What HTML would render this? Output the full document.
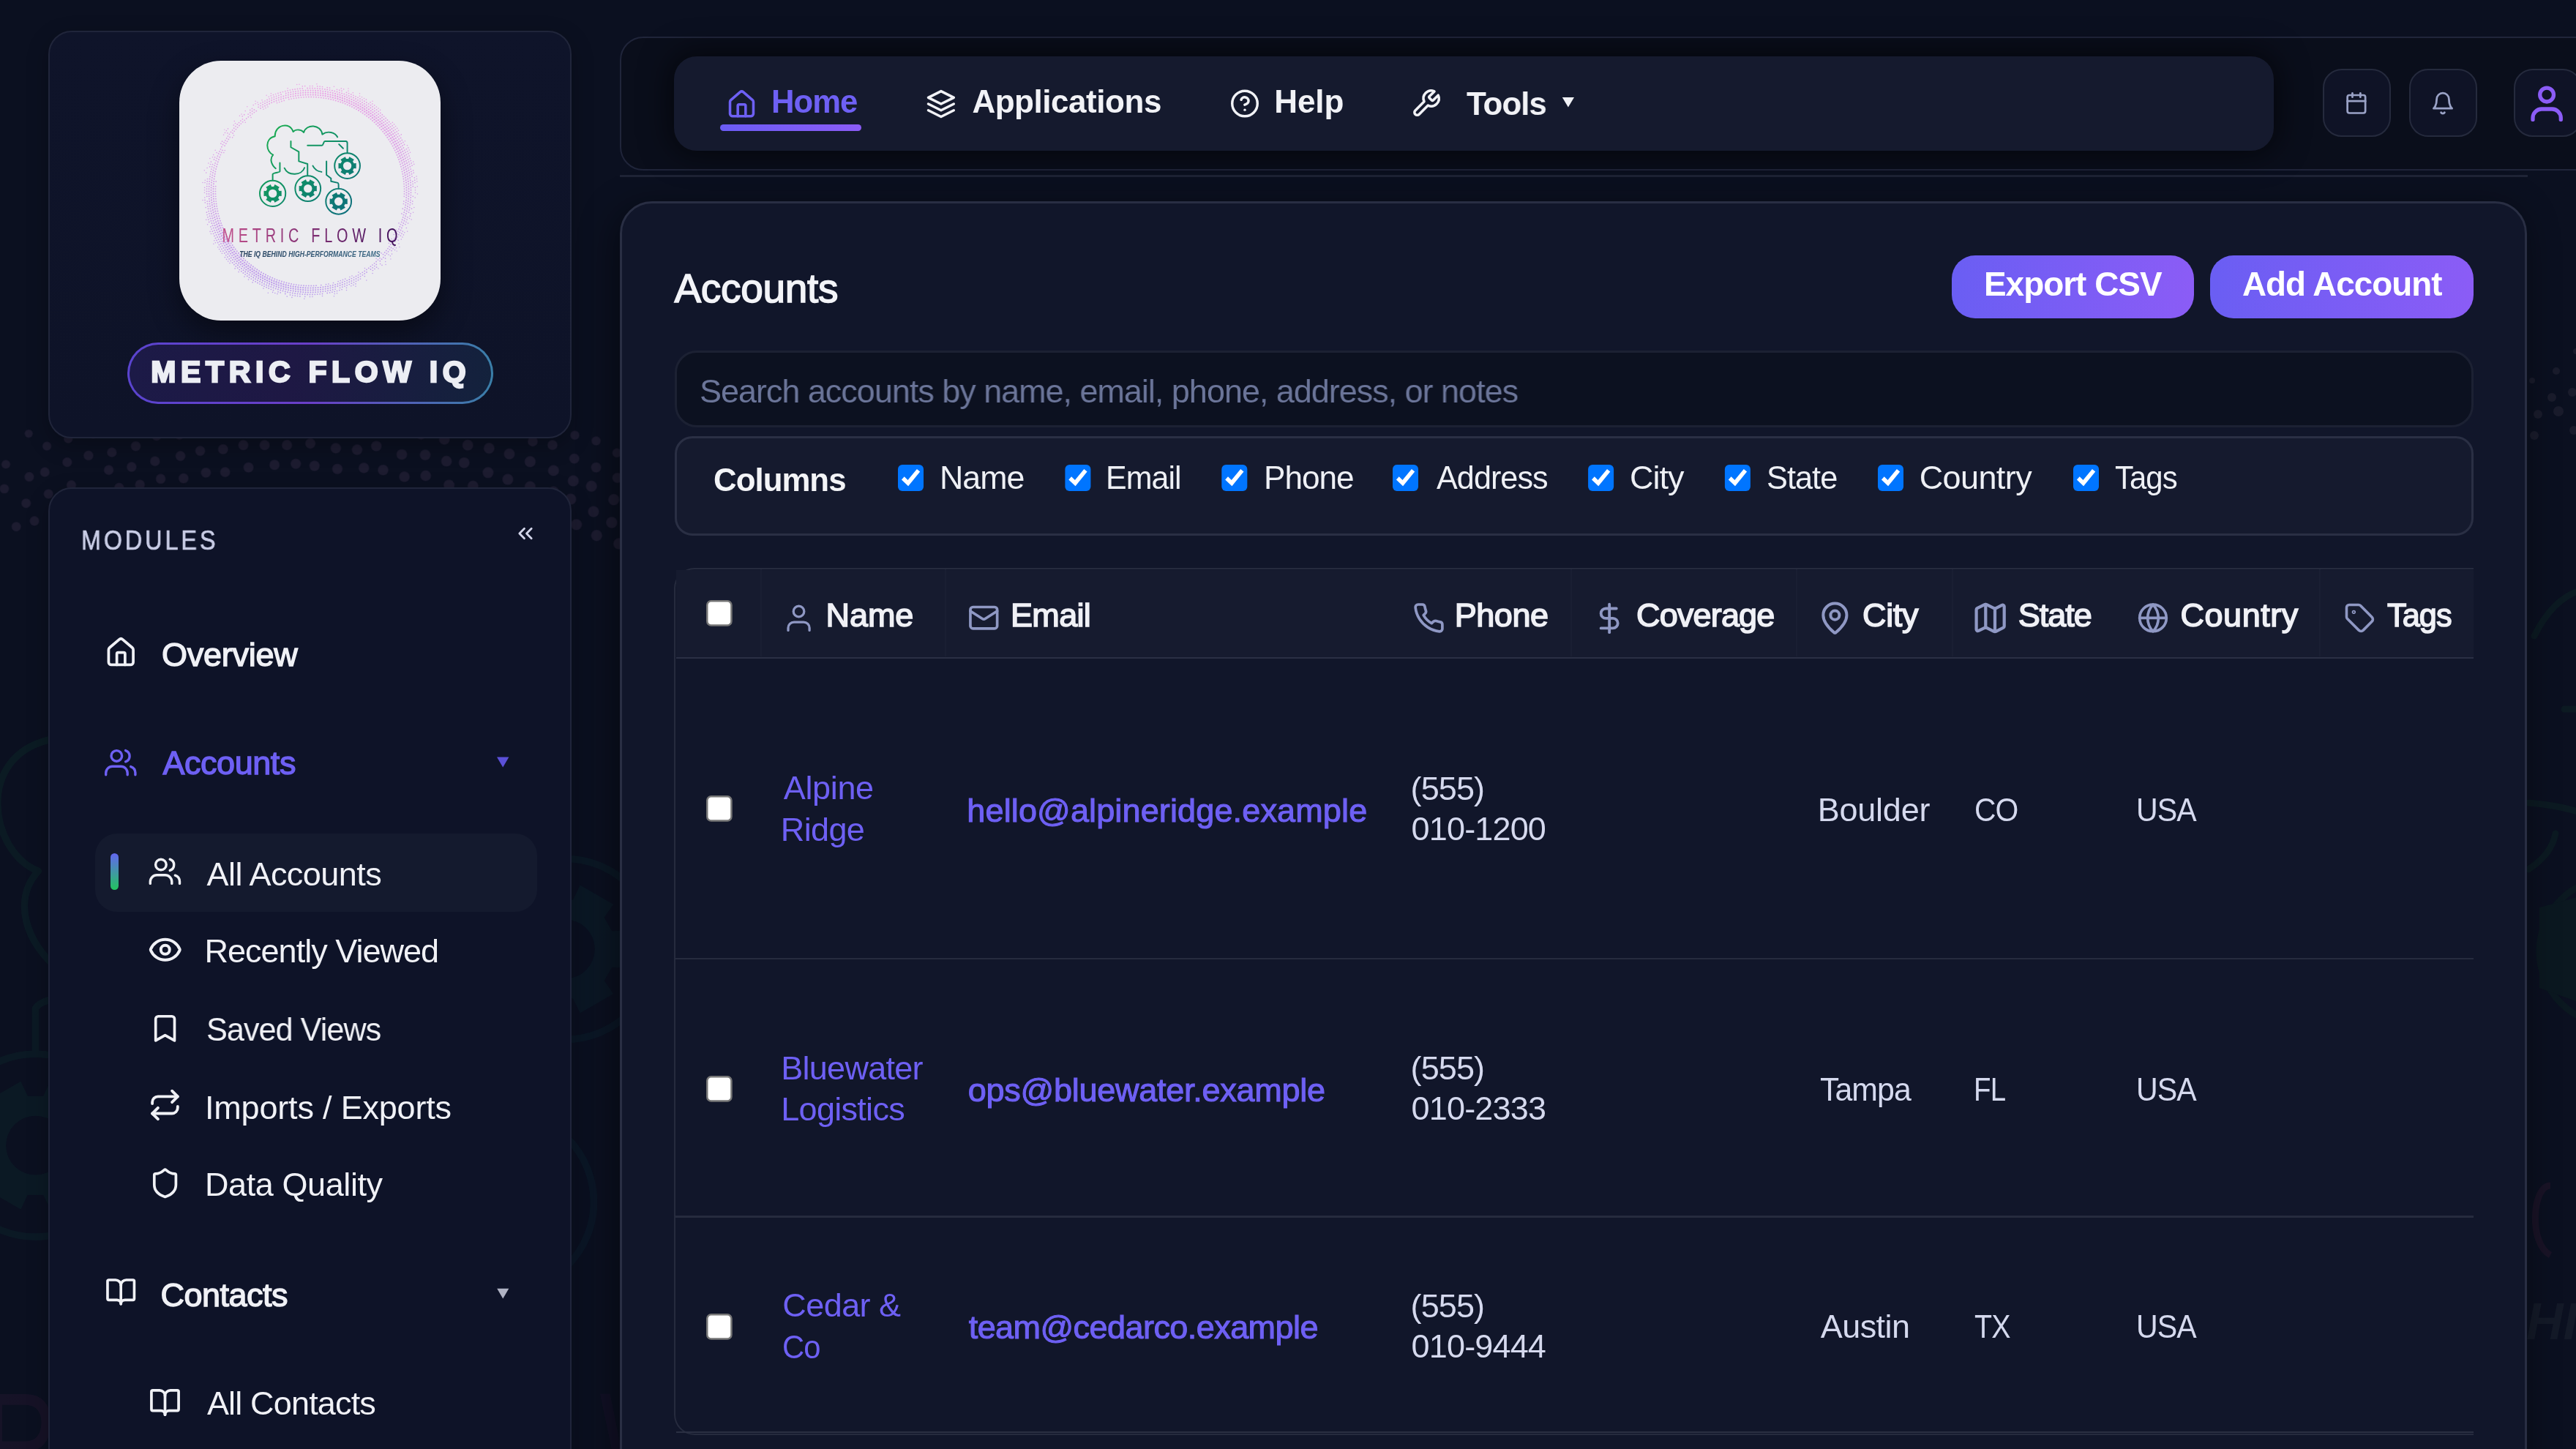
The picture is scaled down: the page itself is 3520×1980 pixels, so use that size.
<!DOCTYPE html>
<html><head><meta charset="utf-8"><title>Accounts</title><style>
*{margin:0;padding:0;box-sizing:border-box}
html,body{width:3520px;height:1980px;overflow:hidden;background:#0b1020;font-family:"Liberation Sans", sans-serif}
.abs{position:absolute}
.box{position:absolute}
.tx{position:absolute;white-space:pre;font-family:"Liberation Sans", sans-serif}
svg{overflow:visible}
</style></head>
<body>

<div class="box" style="left:0;top:0;width:3520px;height:1980px;background:#0b1020"></div>
<svg class="abs" style="left:0;top:0" width="3520" height="1980" viewBox="0 0 3520 1980">
<g transform="translate(-2597,-312) scale(7.1)" opacity="0.075"><g></g>
<g transform="translate(340,150) scale(0.10352)" fill="none" stroke="url(#lg_green)" stroke-width="13" stroke-linecap="round" stroke-linejoin="round">
<path d="M355,775 C300,730 270,650 320,595 C230,560 200,380 345,350 C340,200 540,150 585,290 C620,250 700,260 725,300 C760,180 950,190 970,325 C1040,270 1140,300 1170,360"/>
<path d="M555,415 V495 L660,555 V680 L775,715 V870"/>
<path d="M775,470 H965 C985,470 985,415 1005,415 H1280 C1295,415 1300,425 1300,440 V565"/>
<path d="M1190,455 L1245,510"/>
<path d="M410,700 V815 C410,830 330,825 315,850 V930"/>
<path d="M470,770 C520,880 700,870 735,765"/>
<path d="M845,740 C870,790 920,815 960,820"/>
<path d="M1025,680 V860 L1085,905 V945 L1175,965 C1185,968 1185,985 1185,1040"/>
<circle cx="315" cy="1105" r="170"/><circle cx="780" cy="1040" r="168"/><circle cx="1185" cy="1210" r="168"/><circle cx="1300" cy="740" r="168"/>
</g>
<g transform="translate(340,150) scale(0.10352)" fill="url(#lg_green)" stroke="none"><path d='M431.67,1069.33 L431.67,1140.67 L401.82,1138.33 L387.27,1163.53 L404.23,1188.20 L342.44,1223.87 L329.55,1196.86 L300.45,1196.86 L287.56,1223.87 L225.77,1188.20 L242.73,1163.53 L228.18,1138.33 L198.33,1140.67 L198.33,1069.33 L228.18,1071.67 L242.73,1046.47 L225.77,1021.80 L287.56,986.13 L300.45,1013.14 L329.55,1013.14 L342.44,986.13 L404.23,1021.80 L387.27,1046.47 L401.82,1071.67Z M370.00,1105.00 A55,55 0 1 0 260.00,1105.00 A55,55 0 1 0 370.00,1105.00Z' fill-rule='evenodd'/><path d='M896.67,1004.33 L896.67,1075.67 L866.82,1073.33 L852.27,1098.53 L869.23,1123.20 L807.44,1158.87 L794.55,1131.86 L765.45,1131.86 L752.56,1158.87 L690.77,1123.20 L707.73,1098.53 L693.18,1073.33 L663.33,1075.67 L663.33,1004.33 L693.18,1006.67 L707.73,981.47 L690.77,956.80 L752.56,921.13 L765.45,948.14 L794.55,948.14 L807.44,921.13 L869.23,956.80 L852.27,981.47 L866.82,1006.67Z M835.00,1040.00 A55,55 0 1 0 725.00,1040.00 A55,55 0 1 0 835.00,1040.00Z' fill-rule='evenodd'/><path d='M1301.67,1174.33 L1301.67,1245.67 L1271.82,1243.33 L1257.27,1268.53 L1274.23,1293.20 L1212.44,1328.87 L1199.55,1301.86 L1170.45,1301.86 L1157.56,1328.87 L1095.77,1293.20 L1112.73,1268.53 L1098.18,1243.33 L1068.33,1245.67 L1068.33,1174.33 L1098.18,1176.67 L1112.73,1151.47 L1095.77,1126.80 L1157.56,1091.13 L1170.45,1118.14 L1199.55,1118.14 L1212.44,1091.13 L1274.23,1126.80 L1257.27,1151.47 L1271.82,1176.67Z M1240.00,1210.00 A55,55 0 1 0 1130.00,1210.00 A55,55 0 1 0 1240.00,1210.00Z' fill-rule='evenodd'/><path d='M1416.67,704.33 L1416.67,775.67 L1386.82,773.33 L1372.27,798.53 L1389.23,823.20 L1327.44,858.87 L1314.55,831.86 L1285.45,831.86 L1272.56,858.87 L1210.77,823.20 L1227.73,798.53 L1213.18,773.33 L1183.33,775.67 L1183.33,704.33 L1213.18,706.67 L1227.73,681.47 L1210.77,656.80 L1272.56,621.13 L1285.45,648.14 L1314.55,648.14 L1327.44,621.13 L1389.23,656.80 L1372.27,681.47 L1386.82,706.67Z M1355.00,740.00 A55,55 0 1 0 1245.00,740.00 A55,55 0 1 0 1355.00,740.00Z' fill-rule='evenodd'/></g>
<g transform="translate(303.6,331.2) scale(0.72,1)"><text x="0" y="0" font-family="Liberation Sans" font-size="27.6" textLength="333.3" lengthAdjust="spacing" fill="url(#lg_title2)" style="font-weight:400">METRIC FLOW IQ</text></g>
<text x="327.2" y="351.4" font-family="Liberation Sans" font-size="10.6" font-style="italic" font-weight="700" textLength="192.4" lengthAdjust="spacingAndGlyphs" fill="url(#lg_tag)">THE IQ BEHIND HIGH-PERFORMANCE TEAMS</text></g>
<g transform="translate(-2597,-312) scale(7.1)" fill="#1d1c30"><circle cx='552.0' cy='261.5' r='0.98'/><circle cx='551.0' cy='265.8' r='0.97'/><circle cx='550.7' cy='270.2' r='0.97'/><circle cx='551.1' cy='273.9' r='0.96'/><circle cx='550.5' cy='279.2' r='0.95'/><circle cx='547.5' cy='291.0' r='0.93'/><circle cx='546.9' cy='295.5' r='0.93'/><circle cx='545.6' cy='299.5' r='0.92'/><circle cx='544.6' cy='304.3' r='0.91'/><circle cx='542.7' cy='307.4' r='0.91'/><circle cx='541.5' cy='311.9' r='0.90'/><circle cx='538.7' cy='315.9' r='0.90'/><circle cx='537.9' cy='319.8' r='0.90'/><circle cx='536.1' cy='322.8' r='0.89'/><circle cx='534.1' cy='326.8' r='0.89'/><circle cx='523.3' cy='341.4' r='0.88'/><circle cx='520.8' cy='344.2' r='0.88'/><circle cx='514.6' cy='351.5' r='0.88'/><circle cx='512.6' cy='353.8' r='0.88'/><circle cx='509.0' cy='356.3' r='0.88'/><circle cx='505.3' cy='359.4' r='0.88'/><circle cx='502.5' cy='362.2' r='0.89'/><circle cx='499.3' cy='364.8' r='0.89'/><circle cx='495.1' cy='367.1' r='0.89'/><circle cx='491.3' cy='369.7' r='0.90'/><circle cx='487.7' cy='372.6' r='0.90'/><circle cx='484.0' cy='373.9' r='0.90'/><circle cx='480.8' cy='376.1' r='0.91'/><circle cx='476.9' cy='377.6' r='0.91'/><circle cx='472.8' cy='379.2' r='0.92'/><circle cx='468.7' cy='381.0' r='0.92'/><circle cx='464.1' cy='382.6' r='0.93'/><circle cx='456.8' cy='384.7' r='0.94'/><circle cx='452.5' cy='386.4' r='0.95'/><circle cx='447.8' cy='386.6' r='0.96'/><circle cx='444.4' cy='388.3' r='0.96'/><circle cx='440.1' cy='388.7' r='0.97'/><circle cx='435.4' cy='389.0' r='0.98'/><circle cx='430.8' cy='389.5' r='0.99'/><circle cx='426.4' cy='389.7' r='0.99'/><circle cx='422.0' cy='389.8' r='1.00'/><circle cx='417.7' cy='389.2' r='1.01'/><circle cx='413.8' cy='389.3' r='1.02'/><circle cx='409.0' cy='388.5' r='1.02'/><circle cx='405.1' cy='388.6' r='1.03'/><circle cx='401.6' cy='387.7' r='1.04'/><circle cx='396.8' cy='386.7' r='1.04'/><circle cx='392.6' cy='385.1' r='1.05'/><circle cx='388.8' cy='384.3' r='1.06'/><circle cx='384.0' cy='383.7' r='1.06'/><circle cx='380.6' cy='382.0' r='1.07'/><circle cx='375.8' cy='380.2' r='1.07'/><circle cx='372.4' cy='378.8' r='1.08'/><circle cx='368.0' cy='377.4' r='1.08'/><circle cx='364.8' cy='375.0' r='1.08'/><circle cx='360.9' cy='373.2' r='1.09'/><circle cx='356.9' cy='370.9' r='1.09'/><circle cx='353.5' cy='368.4' r='1.09'/><circle cx='349.8' cy='366.3' r='1.10'/><circle cx='346.8' cy='363.5' r='1.10'/><circle cx='343.0' cy='360.4' r='1.10'/><circle cx='339.5' cy='358.3' r='1.10'/><circle cx='336.1' cy='354.9' r='1.10'/><circle cx='333.8' cy='352.4' r='1.10'/><circle cx='330.4' cy='349.0' r='1.10'/><circle cx='327.2' cy='346.2' r='1.10'/><circle cx='324.4' cy='342.6' r='1.10'/><circle cx='322.1' cy='339.1' r='1.09'/><circle cx='319.5' cy='336.0' r='1.09'/><circle cx='316.3' cy='332.2' r='1.09'/><circle cx='314.4' cy='329.0' r='1.08'/><circle cx='312.7' cy='325.3' r='1.08'/><circle cx='310.1' cy='321.2' r='1.07'/><circle cx='308.1' cy='317.7' r='1.07'/><circle cx='306.7' cy='314.2' r='1.07'/><circle cx='304.6' cy='309.6' r='1.06'/><circle cx='303.5' cy='305.6' r='1.05'/><circle cx='302.1' cy='302.1' r='1.05'/><circle cx='300.1' cy='297.2' r='1.04'/><circle cx='299.8' cy='293.0' r='1.03'/><circle cx='298.4' cy='289.4' r='1.03'/><circle cx='297.8' cy='284.6' r='1.02'/><circle cx='297.3' cy='280.5' r='1.01'/><circle cx='296.2' cy='276.0' r='1.01'/><circle cx='295.8' cy='272.2' r='1.00'/><circle cx='295.8' cy='267.5' r='0.99'/><circle cx='295.3' cy='263.6' r='0.98'/><circle cx='295.0' cy='259.3' r='0.98'/><circle cx='296.1' cy='255.3' r='0.97'/><circle cx='296.0' cy='250.5' r='0.96'/><circle cx='295.8' cy='246.8' r='0.96'/><circle cx='297.4' cy='238.3' r='0.94'/><circle cx='299.0' cy='233.9' r='0.94'/><circle cx='299.7' cy='230.0' r='0.93'/><circle cx='300.8' cy='225.4' r='0.92'/><circle cx='303.1' cy='217.5' r='0.91'/><circle cx='304.7' cy='213.1' r='0.91'/><circle cx='306.3' cy='209.2' r='0.90'/><circle cx='308.7' cy='205.3' r='0.90'/><circle cx='312.6' cy='198.3' r='0.89'/><circle cx='314.6' cy='194.1' r='0.89'/><circle cx='317.4' cy='190.8' r='0.89'/><circle cx='319.1' cy='187.1' r='0.88'/><circle cx='322.0' cy='183.4' r='0.88'/><circle cx='330.3' cy='173.9' r='0.88'/><circle cx='336.4' cy='167.8' r='0.88'/><circle cx='339.4' cy='164.8' r='0.88'/><circle cx='342.8' cy='162.2' r='0.88'/><circle cx='350.2' cy='156.7' r='0.89'/><circle cx='353.8' cy='154.6' r='0.89'/><circle cx='361.0' cy='149.4' r='0.90'/><circle cx='364.6' cy='147.8' r='0.91'/><circle cx='368.9' cy='145.3' r='0.91'/><circle cx='372.4' cy='144.2' r='0.92'/><circle cx='376.6' cy='142.1' r='0.92'/><circle cx='380.4' cy='141.4' r='0.93'/><circle cx='384.4' cy='139.8' r='0.93'/><circle cx='388.7' cy='137.8' r='0.94'/><circle cx='392.7' cy='137.2' r='0.95'/><circle cx='396.7' cy='136.1' r='0.95'/><circle cx='401.1' cy='136.0' r='0.96'/><circle cx='405.4' cy='134.9' r='0.97'/><circle cx='409.1' cy='134.8' r='0.97'/><circle cx='413.6' cy='133.9' r='0.98'/><circle cx='418.6' cy='133.4' r='0.99'/><circle cx='422.7' cy='133.2' r='1.00'/><circle cx='426.3' cy='133.6' r='1.00'/><circle cx='430.7' cy='134.2' r='1.01'/><circle cx='435.8' cy='134.0' r='1.02'/><circle cx='439.5' cy='134.4' r='1.03'/><circle cx='443.6' cy='135.7' r='1.03'/><circle cx='447.7' cy='135.5' r='1.04'/><circle cx='452.2' cy='137.3' r='1.05'/><circle cx='456.8' cy='137.5' r='1.05'/><circle cx='460.7' cy='139.3' r='1.06'/><circle cx='464.8' cy='140.4' r='1.06'/><circle cx='469.2' cy='142.4' r='1.07'/><circle cx='472.7' cy='143.9' r='1.07'/><circle cx='476.7' cy='144.9' r='1.08'/><circle cx='480.6' cy='147.0' r='1.08'/><circle cx='484.9' cy='148.6' r='1.09'/><circle cx='488.1' cy='150.7' r='1.09'/><circle cx='492.0' cy='153.6' r='1.09'/><circle cx='495.6' cy='155.6' r='1.10'/><circle cx='498.9' cy='157.8' r='1.10'/><circle cx='502.3' cy='161.3' r='1.10'/><circle cx='505.6' cy='163.6' r='1.10'/><circle cx='508.6' cy='166.1' r='1.10'/><circle cx='512.0' cy='169.2' r='1.10'/><circle cx='515.1' cy='171.6' r='1.10'/><circle cx='518.1' cy='174.8' r='1.10'/><circle cx='521.0' cy='178.9' r='1.10'/><circle cx='524.0' cy='181.7' r='1.09'/><circle cx='526.4' cy='184.8' r='1.09'/><circle cx='528.4' cy='188.4' r='1.09'/><circle cx='531.0' cy='191.9' r='1.09'/><circle cx='533.8' cy='196.4' r='1.08'/><circle cx='535.0' cy='199.5' r='1.08'/><circle cx='537.5' cy='203.9' r='1.07'/><circle cx='539.3' cy='207.4' r='1.07'/><circle cx='541.8' cy='211.3' r='1.06'/><circle cx='543.3' cy='215.7' r='1.06'/><circle cx='544.8' cy='219.0' r='1.05'/><circle cx='545.5' cy='223.2' r='1.04'/><circle cx='546.5' cy='227.4' r='1.04'/><circle cx='548.4' cy='231.9' r='1.03'/><circle cx='549.3' cy='235.6' r='1.02'/><circle cx='549.7' cy='239.6' r='1.02'/><circle cx='550.8' cy='244.9' r='1.01'/><circle cx='550.4' cy='248.7' r='1.00'/><circle cx='550.7' cy='253.1' r='0.99'/><circle cx='551.6' cy='256.8' r='0.99'/><circle cx='555.5' cy='263.4' r='0.98'/><circle cx='555.9' cy='267.9' r='0.97'/><circle cx='555.3' cy='272.3' r='0.96'/><circle cx='555.0' cy='277.0' r='0.96'/><circle cx='554.4' cy='281.3' r='0.95'/><circle cx='553.3' cy='285.7' r='0.94'/><circle cx='552.4' cy='289.6' r='0.94'/><circle cx='551.3' cy='293.7' r='0.93'/><circle cx='550.3' cy='297.6' r='0.92'/><circle cx='548.9' cy='301.5' r='0.92'/><circle cx='546.5' cy='309.8' r='0.91'/><circle cx='541.1' cy='321.4' r='0.90'/><circle cx='536.7' cy='329.1' r='0.89'/><circle cx='534.0' cy='333.6' r='0.89'/><circle cx='531.8' cy='337.3' r='0.88'/><circle cx='527.5' cy='343.1' r='0.88'/><circle cx='523.9' cy='347.3' r='0.88'/><circle cx='518.6' cy='353.2' r='0.88'/><circle cx='514.9' cy='356.2' r='0.88'/><circle cx='508.7' cy='362.9' r='0.88'/><circle cx='505.5' cy='365.0' r='0.89'/><circle cx='502.8' cy='367.5' r='0.89'/><circle cx='491.7' cy='374.8' r='0.90'/><circle cx='487.5' cy='377.0' r='0.90'/><circle cx='479.6' cy='381.0' r='0.91'/><circle cx='476.2' cy='382.3' r='0.92'/><circle cx='472.4' cy='384.3' r='0.92'/><circle cx='467.9' cy='385.6' r='0.93'/><circle cx='464.0' cy='387.3' r='0.93'/><circle cx='460.3' cy='388.0' r='0.94'/><circle cx='455.4' cy='390.1' r='0.95'/><circle cx='451.1' cy='390.3' r='0.95'/><circle cx='447.2' cy='391.2' r='0.96'/><circle cx='442.9' cy='391.7' r='0.97'/><circle cx='438.4' cy='392.7' r='0.97'/><circle cx='434.1' cy='392.6' r='0.98'/><circle cx='430.4' cy='393.6' r='0.99'/><circle cx='426.0' cy='393.6' r='1.00'/><circle cx='421.8' cy='393.0' r='1.00'/><circle cx='417.1' cy='393.3' r='1.01'/><circle cx='412.7' cy='393.4' r='1.02'/><circle cx='408.5' cy='392.1' r='1.02'/><circle cx='404.2' cy='392.4' r='1.03'/><circle cx='399.8' cy='391.1' r='1.04'/><circle cx='395.9' cy='390.4' r='1.04'/><circle cx='391.3' cy='389.7' r='1.05'/><circle cx='387.5' cy='388.6' r='1.06'/><circle cx='383.4' cy='387.5' r='1.06'/><circle cx='378.5' cy='386.0' r='1.07'/><circle cx='375.2' cy='384.0' r='1.07'/><circle cx='371.4' cy='383.0' r='1.08'/><circle cx='367.3' cy='380.9' r='1.08'/><circle cx='363.7' cy='379.5' r='1.08'/><circle cx='359.3' cy='376.6' r='1.09'/><circle cx='355.1' cy='374.6' r='1.09'/><circle cx='352.4' cy='373.1' r='1.09'/><circle cx='348.4' cy='369.9' r='1.10'/><circle cx='345.2' cy='367.2' r='1.10'/><circle cx='340.9' cy='364.4' r='1.10'/><circle cx='338.1' cy='362.1' r='1.10'/><circle cx='334.9' cy='359.1' r='1.10'/><circle cx='331.9' cy='356.3' r='1.10'/><circle cx='328.6' cy='353.1' r='1.10'/><circle cx='325.4' cy='349.7' r='1.10'/><circle cx='322.6' cy='346.5' r='1.10'/><circle cx='319.8' cy='343.6' r='1.09'/><circle cx='317.2' cy='340.4' r='1.09'/><circle cx='315.0' cy='337.0' r='1.09'/><circle cx='312.6' cy='333.3' r='1.09'/><circle cx='310.1' cy='329.8' r='1.08'/><circle cx='307.7' cy='325.3' r='1.08'/><circle cx='306.4' cy='321.7' r='1.07'/><circle cx='304.7' cy='318.0' r='1.07'/><circle cx='302.6' cy='313.9' r='1.06'/><circle cx='300.4' cy='310.5' r='1.06'/><circle cx='299.2' cy='305.9' r='1.05'/><circle cx='297.8' cy='302.3' r='1.05'/><circle cx='297.1' cy='298.2' r='1.04'/><circle cx='295.6' cy='293.1' r='1.03'/><circle cx='294.1' cy='289.6' r='1.03'/><circle cx='293.6' cy='285.1' r='1.02'/><circle cx='293.2' cy='281.4' r='1.01'/><circle cx='292.3' cy='276.1' r='1.00'/><circle cx='291.5' cy='272.5' r='1.00'/><circle cx='291.7' cy='267.6' r='0.99'/><circle cx='291.9' cy='263.3' r='0.98'/><circle cx='292.1' cy='259.7' r='0.98'/><circle cx='291.2' cy='254.8' r='0.97'/><circle cx='291.7' cy='250.4' r='0.96'/><circle cx='292.7' cy='246.5' r='0.96'/><circle cx='293.3' cy='242.0' r='0.95'/><circle cx='293.8' cy='237.7' r='0.94'/><circle cx='294.9' cy='233.3' r='0.94'/><circle cx='295.8' cy='228.9' r='0.93'/><circle cx='296.5' cy='225.7' r='0.92'/><circle cx='299.5' cy='216.8' r='0.91'/><circle cx='300.3' cy='213.5' r='0.91'/><circle cx='302.6' cy='209.0' r='0.90'/><circle cx='306.2' cy='201.0' r='0.90'/><circle cx='310.5' cy='193.5' r='0.89'/><circle cx='312.7' cy='189.5' r='0.89'/><circle cx='314.6' cy='186.4' r='0.88'/><circle cx='322.5' cy='175.9' r='0.88'/><circle cx='325.8' cy='173.0' r='0.88'/><circle cx='331.7' cy='166.3' r='0.88'/><circle cx='337.8' cy='161.2' r='0.88'/><circle cx='341.6' cy='157.9' r='0.89'/><circle cx='344.7' cy='155.7' r='0.89'/><circle cx='348.4' cy='153.4' r='0.89'/><circle cx='352.2' cy='150.4' r='0.89'/><circle cx='355.5' cy='148.8' r='0.90'/><circle cx='358.9' cy='146.0' r='0.90'/><circle cx='362.9' cy='144.6' r='0.91'/><circle cx='370.8' cy='140.8' r='0.92'/><circle cx='375.1' cy='139.0' r='0.92'/><circle cx='379.5' cy='137.3' r='0.93'/><circle cx='386.7' cy='134.4' r='0.94'/><circle cx='391.1' cy='133.8' r='0.95'/><circle cx='395.6' cy='132.7' r='0.95'/><circle cx='400.5' cy='131.7' r='0.96'/><circle cx='404.3' cy='130.7' r='0.97'/><circle cx='408.7' cy='130.4' r='0.98'/><circle cx='412.6' cy='129.6' r='0.98'/><circle cx='416.7' cy='129.6' r='0.99'/><circle cx='421.0' cy='129.6' r='1.00'/><circle cx='425.5' cy='129.3' r='1.00'/><circle cx='430.4' cy='130.2' r='1.01'/><circle cx='434.5' cy='130.5' r='1.02'/><circle cx='438.2' cy='129.8' r='1.02'/><circle cx='443.1' cy='131.4' r='1.03'/><circle cx='447.6' cy='131.5' r='1.04'/><circle cx='451.7' cy='132.7' r='1.04'/><circle cx='455.1' cy='133.0' r='1.05'/><circle cx='459.7' cy='134.9' r='1.06'/><circle cx='463.5' cy='136.2' r='1.06'/><circle cx='467.8' cy='137.6' r='1.07'/><circle cx='472.3' cy='138.6' r='1.07'/><circle cx='475.6' cy='140.0' r='1.08'/><circle cx='480.0' cy='142.4' r='1.08'/><circle cx='483.5' cy='144.5' r='1.08'/><circle cx='487.2' cy='145.6' r='1.09'/><circle cx='491.9' cy='148.1' r='1.09'/><circle cx='494.9' cy='149.9' r='1.09'/><circle cx='499.0' cy='153.6' r='1.10'/><circle cx='501.8' cy='155.5' r='1.10'/><circle cx='505.3' cy='158.3' r='1.10'/><circle cx='508.6' cy='160.6' r='1.10'/><circle cx='511.8' cy='163.6' r='1.10'/><circle cx='515.2' cy='166.3' r='1.10'/><circle cx='518.4' cy='170.0' r='1.10'/><circle cx='520.6' cy='172.5' r='1.10'/><circle cx='524.1' cy='176.4' r='1.10'/><circle cx='526.9' cy='179.0' r='1.09'/><circle cx='529.1' cy='182.7' r='1.09'/><circle cx='532.0' cy='186.4' r='1.09'/><circle cx='534.8' cy='190.3' r='1.09'/><circle cx='536.4' cy='193.4' r='1.08'/><circle cx='539.5' cy='198.0' r='1.08'/><circle cx='540.5' cy='200.9' r='1.07'/><circle cx='542.7' cy='205.7' r='1.07'/><circle cx='544.1' cy='209.2' r='1.06'/><circle cx='546.2' cy='212.8' r='1.06'/><circle cx='547.9' cy='216.9' r='1.05'/><circle cx='549.1' cy='221.5' r='1.05'/><circle cx='550.6' cy='225.0' r='1.04'/><circle cx='551.3' cy='229.9' r='1.03'/><circle cx='552.4' cy='233.7' r='1.03'/><circle cx='553.1' cy='238.2' r='1.02'/><circle cx='554.1' cy='242.0' r='1.01'/><circle cx='554.1' cy='245.9' r='1.01'/><circle cx='555.3' cy='250.3' r='1.00'/><circle cx='555.8' cy='254.7' r='0.99'/><circle cx='555.8' cy='259.1' r='0.98'/><circle cx='559.8' cy='261.7' r='0.98'/><circle cx='559.8' cy='265.6' r='0.97'/><circle cx='559.5' cy='270.2' r='0.97'/><circle cx='558.4' cy='274.8' r='0.96'/><circle cx='558.0' cy='278.8' r='0.95'/><circle cx='558.3' cy='283.0' r='0.95'/><circle cx='557.2' cy='287.4' r='0.94'/><circle cx='555.5' cy='292.0' r='0.93'/><circle cx='554.6' cy='299.5' r='0.92'/><circle cx='551.1' cy='308.0' r='0.91'/><circle cx='549.4' cy='312.3' r='0.91'/><circle cx='548.6' cy='316.1' r='0.90'/><circle cx='546.5' cy='320.0' r='0.90'/><circle cx='530.5' cy='345.2' r='0.88'/><circle cx='518.7' cy='358.7' r='0.88'/><circle cx='516.0' cy='361.3' r='0.88'/><circle cx='513.0' cy='364.1' r='0.88'/><circle cx='509.7' cy='367.4' r='0.88'/><circle cx='506.1' cy='369.4' r='0.89'/><circle cx='495.2' cy='377.0' r='0.90'/><circle cx='484.0' cy='383.6' r='0.91'/><circle cx='480.3' cy='385.5' r='0.91'/><circle cx='471.7' cy='388.4' r='0.92'/><circle cx='463.8' cy='391.2' r='0.94'/><circle cx='459.5' cy='392.8' r='0.94'/><circle cx='455.8' cy='393.4' r='0.95'/><circle cx='451.8' cy='394.2' r='0.95'/><circle cx='446.9' cy='395.1' r='0.96'/><circle cx='443.3' cy='396.0' r='0.97'/><circle cx='439.1' cy='396.4' r='0.97'/><circle cx='434.2' cy='397.5' r='0.98'/><circle cx='430.1' cy='397.9' r='0.99'/><circle cx='425.7' cy='397.4' r='1.00'/><circle cx='421.1' cy='397.7' r='1.00'/><circle cx='416.6' cy='397.2' r='1.01'/><circle cx='412.2' cy='396.9' r='1.02'/><circle cx='408.3' cy='397.1' r='1.02'/><circle cx='403.8' cy='396.1' r='1.03'/><circle cx='400.3' cy='395.5' r='1.04'/><circle cx='395.5' cy='394.3' r='1.04'/><circle cx='391.3' cy='393.1' r='1.05'/><circle cx='387.1' cy='392.7' r='1.05'/><circle cx='382.7' cy='391.8' r='1.06'/><circle cx='378.7' cy='390.5' r='1.07'/><circle cx='375.2' cy='389.1' r='1.07'/><circle cx='370.8' cy='387.1' r='1.07'/><circle cx='366.4' cy='385.0' r='1.08'/><circle cx='362.4' cy='383.3' r='1.08'/><circle cx='359.5' cy='381.5' r='1.09'/><circle cx='355.3' cy='379.2' r='1.09'/><circle cx='352.0' cy='377.3' r='1.09'/><circle cx='348.2' cy='375.2' r='1.09'/><circle cx='344.4' cy='371.9' r='1.10'/><circle cx='341.6' cy='369.7' r='1.10'/><circle cx='337.7' cy='366.5' r='1.10'/><circle cx='334.4' cy='364.7' r='1.10'/><circle cx='331.8' cy='361.8' r='1.10'/><circle cx='328.1' cy='358.3' r='1.10'/><circle cx='325.3' cy='355.3' r='1.10'/><circle cx='322.0' cy='352.2' r='1.10'/><circle cx='319.4' cy='349.2' r='1.10'/><circle cx='316.4' cy='346.0' r='1.09'/><circle cx='313.6' cy='342.4' r='1.09'/><circle cx='311.5' cy='338.3' r='1.09'/><circle cx='309.4' cy='335.6' r='1.09'/><circle cx='306.9' cy='331.7' r='1.08'/><circle cx='305.0' cy='327.8' r='1.08'/><circle cx='303.0' cy='324.2' r='1.07'/><circle cx='300.1' cy='319.7' r='1.07'/><circle cx='298.9' cy='315.6' r='1.06'/><circle cx='297.3' cy='312.3' r='1.06'/><circle cx='295.6' cy='308.1' r='1.05'/><circle cx='293.9' cy='303.9' r='1.05'/><circle cx='292.7' cy='300.0' r='1.04'/><circle cx='292.3' cy='295.7' r='1.03'/><circle cx='291.1' cy='292.0' r='1.03'/><circle cx='289.5' cy='287.2' r='1.02'/><circle cx='289.3' cy='283.5' r='1.02'/><circle cx='288.4' cy='278.8' r='1.01'/><circle cx='287.5' cy='273.9' r='1.00'/><circle cx='287.5' cy='269.8' r='0.99'/><circle cx='287.7' cy='266.3' r='0.99'/><circle cx='287.8' cy='261.8' r='0.98'/><circle cx='287.3' cy='257.6' r='0.97'/><circle cx='287.6' cy='253.2' r='0.97'/><circle cx='287.8' cy='248.8' r='0.96'/><circle cx='289.1' cy='244.6' r='0.95'/><circle cx='289.8' cy='239.6' r='0.95'/><circle cx='290.4' cy='235.7' r='0.94'/><circle cx='291.2' cy='231.7' r='0.93'/><circle cx='292.7' cy='223.3' r='0.92'/><circle cx='295.5' cy='215.3' r='0.91'/><circle cx='301.0' cy='202.5' r='0.90'/><circle cx='302.9' cy='199.1' r='0.89'/><circle cx='304.2' cy='195.6' r='0.89'/><circle cx='307.1' cy='192.2' r='0.89'/><circle cx='308.8' cy='187.9' r='0.89'/><circle cx='311.6' cy='184.9' r='0.88'/><circle cx='313.9' cy='181.2' r='0.88'/><circle cx='316.3' cy='177.2' r='0.88'/><circle cx='319.4' cy='174.2' r='0.88'/><circle cx='325.0' cy='167.9' r='0.88'/><circle cx='328.4' cy='164.3' r='0.88'/><circle cx='330.8' cy='162.0' r='0.88'/><circle cx='345.2' cy='150.7' r='0.89'/><circle cx='352.0' cy='145.8' r='0.90'/><circle cx='355.3' cy='143.7' r='0.90'/><circle cx='359.1' cy='141.4' r='0.90'/><circle cx='366.6' cy='138.0' r='0.91'/><circle cx='371.4' cy='135.7' r='0.92'/><circle cx='374.4' cy='134.8' r='0.92'/><circle cx='378.7' cy='132.9' r='0.93'/><circle cx='382.8' cy='131.6' r='0.94'/><circle cx='387.3' cy='131.0' r='0.94'/><circle cx='391.9' cy='129.8' r='0.95'/><circle cx='395.9' cy='127.8' r='0.96'/><circle cx='400.3' cy='127.6' r='0.96'/><circle cx='404.4' cy='126.9' r='0.97'/><circle cx='408.0' cy='126.9' r='0.97'/><circle cx='412.3' cy='125.9' r='0.98'/><circle cx='416.6' cy='125.1' r='0.99'/><circle cx='421.4' cy='125.6' r='1.00'/><circle cx='425.7' cy='125.1' r='1.00'/><circle cx='429.9' cy='125.8' r='1.01'/><circle cx='434.5' cy='125.7' r='1.02'/><circle cx='438.4' cy='126.0' r='1.02'/><circle cx='442.4' cy='127.0' r='1.03'/><circle cx='446.8' cy='127.5' r='1.04'/><circle cx='451.3' cy='128.5' r='1.04'/><circle cx='455.8' cy='129.6' r='1.05'/><circle cx='459.9' cy='130.2' r='1.05'/><circle cx='463.8' cy='131.3' r='1.06'/><circle cx='467.8' cy='132.8' r='1.07'/><circle cx='472.3' cy='134.5' r='1.07'/><circle cx='476.1' cy='136.5' r='1.07'/><circle cx='479.6' cy='137.5' r='1.08'/><circle cx='483.9' cy='140.1' r='1.08'/><circle cx='488.3' cy='142.3' r='1.09'/><circle cx='491.6' cy='143.8' r='1.09'/><circle cx='495.5' cy='145.9' r='1.09'/><circle cx='499.3' cy='148.6' r='1.10'/><circle cx='502.6' cy='150.7' r='1.10'/><circle cx='505.9' cy='153.9' r='1.10'/><circle cx='509.1' cy='156.2' r='1.10'/><circle cx='512.1' cy='158.7' r='1.10'/><circle cx='515.9' cy='161.7' r='1.10'/><circle cx='519.3' cy='164.8' r='1.10'/><circle cx='522.2' cy='167.5' r='1.10'/><circle cx='524.7' cy='170.7' r='1.10'/><circle cx='527.3' cy='174.0' r='1.10'/><circle cx='530.7' cy='177.3' r='1.09'/><circle cx='532.8' cy='180.6' r='1.09'/><circle cx='535.4' cy='184.3' r='1.09'/><circle cx='538.2' cy='188.6' r='1.09'/><circle cx='540.8' cy='192.4' r='1.08'/><circle cx='541.9' cy='195.5' r='1.08'/><circle cx='545.0' cy='199.5' r='1.07'/><circle cx='546.3' cy='203.2' r='1.07'/><circle cx='548.1' cy='207.1' r='1.06'/><circle cx='549.8' cy='211.3' r='1.06'/><circle cx='551.8' cy='214.9' r='1.05'/><circle cx='552.4' cy='218.6' r='1.05'/><circle cx='554.6' cy='223.5' r='1.04'/><circle cx='554.7' cy='227.7' r='1.03'/><circle cx='556.3' cy='231.6' r='1.03'/><circle cx='557.2' cy='236.1' r='1.02'/><circle cx='558.1' cy='239.4' r='1.02'/><circle cx='558.7' cy='243.7' r='1.01'/><circle cx='559.2' cy='248.6' r='1.00'/><circle cx='559.5' cy='252.3' r='1.00'/><circle cx='559.2' cy='257.6' r='0.99'/><circle cx='563.2' cy='263.1' r='0.90'/><circle cx='563.6' cy='268.0' r='0.89'/><circle cx='562.7' cy='271.9' r='0.89'/><circle cx='563.1' cy='276.3' r='0.88'/><circle cx='561.9' cy='280.6' r='0.88'/><circle cx='561.2' cy='284.8' r='0.87'/><circle cx='560.1' cy='293.8' r='0.86'/><circle cx='558.6' cy='297.2' r='0.86'/><circle cx='557.4' cy='301.7' r='0.85'/><circle cx='556.0' cy='306.3' r='0.85'/><circle cx='554.5' cy='310.5' r='0.85'/><circle cx='551.5' cy='318.3' r='0.84'/><circle cx='544.3' cy='333.3' r='0.83'/><circle cx='541.1' cy='337.0' r='0.83'/><circle cx='537.1' cy='344.0' r='0.82'/><circle cx='528.2' cy='353.8' r='0.82'/><circle cx='516.4' cy='366.5' r='0.82'/><circle cx='506.6' cy='374.4' r='0.83'/><circle cx='495.1' cy='381.9' r='0.83'/><circle cx='488.4' cy='385.2' r='0.84'/><circle cx='476.3' cy='390.6' r='0.85'/><circle cx='472.4' cy='392.9' r='0.86'/><circle cx='455.4' cy='398.0' r='0.88'/><circle cx='451.6' cy='398.8' r='0.88'/><circle cx='447.2' cy='399.3' r='0.89'/><circle cx='438.1' cy='400.3' r='0.90'/><circle cx='434.2' cy='400.7' r='0.90'/><circle cx='429.7' cy='401.0' r='0.91'/><circle cx='425.1' cy='401.7' r='0.92'/><circle cx='421.5' cy='402.0' r='0.92'/><circle cx='417.0' cy='401.3' r='0.93'/><circle cx='413.0' cy='401.1' r='0.93'/><circle cx='408.9' cy='400.9' r='0.94'/><circle cx='403.6' cy='399.6' r='0.94'/><circle cx='399.5' cy='399.8' r='0.95'/><circle cx='395.9' cy='398.7' r='0.95'/><circle cx='391.4' cy='397.7' r='0.96'/><circle cx='387.5' cy='396.6' r='0.96'/><circle cx='383.3' cy='396.0' r='0.97'/><circle cx='378.4' cy='394.4' r='0.97'/><circle cx='374.6' cy='392.4' r='0.97'/><circle cx='370.7' cy='391.6' r='0.98'/><circle cx='367.5' cy='390.1' r='0.98'/><circle cx='362.7' cy='387.9' r='0.98'/><circle cx='359.8' cy='386.6' r='0.99'/><circle cx='355.2' cy='383.8' r='0.99'/><circle cx='351.3' cy='381.1' r='0.99'/><circle cx='347.5' cy='379.5' r='0.99'/><circle cx='344.1' cy='377.3' r='1.00'/><circle cx='340.8' cy='374.3' r='1.00'/><circle cx='337.6' cy='372.0' r='1.00'/><circle cx='333.8' cy='369.1' r='1.00'/><circle cx='331.2' cy='366.7' r='1.00'/><circle cx='327.6' cy='363.7' r='1.00'/><circle cx='323.8' cy='360.3' r='1.00'/><circle cx='321.3' cy='356.8' r='1.00'/><circle cx='319.0' cy='354.5' r='1.00'/><circle cx='315.5' cy='350.7' r='1.00'/><circle cx='313.5' cy='347.7' r='1.00'/><circle cx='310.9' cy='344.5' r='0.99'/><circle cx='307.8' cy='340.1' r='0.99'/><circle cx='305.3' cy='337.0' r='0.99'/><circle cx='303.1' cy='333.5' r='0.99'/><circle cx='300.7' cy='329.3' r='0.98'/><circle cx='299.1' cy='325.6' r='0.98'/><circle cx='297.5' cy='321.7' r='0.97'/><circle cx='295.3' cy='318.2' r='0.97'/><circle cx='293.4' cy='313.8' r='0.97'/><circle cx='292.2' cy='310.3' r='0.96'/><circle cx='291.1' cy='305.5' r='0.96'/><circle cx='289.8' cy='301.6' r='0.95'/><circle cx='288.4' cy='297.7' r='0.95'/><circle cx='287.7' cy='293.4' r='0.94'/><circle cx='284.9' cy='281.2' r='0.93'/><circle cx='284.3' cy='276.1' r='0.92'/><circle cx='284.4' cy='272.5' r='0.92'/><circle cx='283.7' cy='268.3' r='0.91'/><circle cx='283.8' cy='263.8' r='0.91'/><circle cx='283.7' cy='259.1' r='0.90'/><circle cx='283.5' cy='255.1' r='0.89'/><circle cx='284.0' cy='251.0' r='0.89'/><circle cx='284.5' cy='246.0' r='0.88'/><circle cx='285.0' cy='241.6' r='0.88'/><circle cx='286.2' cy='233.4' r='0.87'/><circle cx='287.5' cy='229.4' r='0.86'/><circle cx='288.5' cy='225.2' r='0.86'/><circle cx='294.0' cy='208.8' r='0.84'/><circle cx='294.9' cy='205.2' r='0.84'/><circle cx='296.9' cy='201.0' r='0.84'/><circle cx='299.5' cy='196.8' r='0.83'/><circle cx='300.7' cy='193.5' r='0.83'/><circle cx='306.0' cy='185.7' r='0.83'/><circle cx='309.9' cy='179.0' r='0.82'/><circle cx='313.0' cy='175.9' r='0.82'/><circle cx='318.6' cy='168.4' r='0.82'/><circle cx='321.8' cy='165.9' r='0.82'/><circle cx='324.4' cy='162.5' r='0.82'/><circle cx='334.2' cy='154.1' r='0.82'/><circle cx='337.9' cy='151.1' r='0.83'/><circle cx='344.8' cy='145.8' r='0.83'/><circle cx='352.1' cy='141.0' r='0.83'/><circle cx='366.9' cy='133.3' r='0.85'/><circle cx='374.8' cy='129.8' r='0.86'/><circle cx='378.9' cy='128.4' r='0.86'/><circle cx='383.7' cy='127.5' r='0.87'/><circle cx='391.9' cy='125.3' r='0.88'/><circle cx='395.5' cy='124.1' r='0.88'/><circle cx='399.4' cy='123.5' r='0.89'/><circle cx='408.3' cy='121.9' r='0.90'/><circle cx='416.5' cy='121.9' r='0.91'/><circle cx='421.5' cy='121.6' r='0.92'/><circle cx='425.4' cy='121.7' r='0.92'/><circle cx='429.7' cy='122.2' r='0.93'/><circle cx='434.0' cy='122.4' r='0.93'/><circle cx='438.9' cy='122.6' r='0.94'/><circle cx='443.3' cy='122.7' r='0.94'/><circle cx='447.3' cy='123.7' r='0.95'/><circle cx='451.4' cy='124.3' r='0.95'/><circle cx='455.8' cy='125.9' r='0.96'/><circle cx='459.6' cy='126.1' r='0.96'/><circle cx='463.8' cy='127.0' r='0.97'/><circle cx='468.3' cy='128.9' r='0.97'/><circle cx='472.1' cy='129.6' r='0.97'/><circle cx='476.3' cy='132.2' r='0.98'/><circle cx='480.5' cy='133.9' r='0.98'/><circle cx='484.6' cy='135.9' r='0.99'/><circle cx='488.1' cy='137.5' r='0.99'/><circle cx='491.8' cy='138.8' r='0.99'/><circle cx='495.4' cy='141.2' r='0.99'/><circle cx='499.0' cy='143.2' r='0.99'/><circle cx='502.4' cy='146.0' r='1.00'/><circle cx='505.9' cy='148.8' r='1.00'/><circle cx='509.4' cy='151.0' r='1.00'/><circle cx='512.8' cy='154.0' r='1.00'/><circle cx='516.6' cy='156.5' r='1.00'/><circle cx='519.2' cy='159.4' r='1.00'/><circle cx='521.8' cy='162.5' r='1.00'/><circle cx='525.3' cy='165.8' r='1.00'/><circle cx='528.8' cy='169.0' r='1.00'/><circle cx='531.6' cy='172.5' r='1.00'/><circle cx='534.3' cy='175.9' r='0.99'/><circle cx='536.3' cy='179.0' r='0.99'/><circle cx='538.8' cy='183.0' r='0.99'/><circle cx='541.6' cy='185.6' r='0.99'/><circle cx='544.1' cy='190.2' r='0.98'/><circle cx='545.5' cy='193.6' r='0.98'/><circle cx='547.3' cy='197.3' r='0.98'/><circle cx='549.8' cy='201.7' r='0.97'/><circle cx='551.3' cy='205.0' r='0.97'/><circle cx='553.3' cy='209.0' r='0.97'/><circle cx='554.2' cy='212.5' r='0.96'/><circle cx='556.0' cy='216.4' r='0.96'/><circle cx='557.9' cy='221.2' r='0.95'/><circle cx='558.2' cy='224.9' r='0.95'/><circle cx='560.3' cy='234.2' r='0.94'/><circle cx='562.1' cy='238.4' r='0.93'/><circle cx='561.7' cy='241.8' r='0.93'/><circle cx='562.3' cy='246.1' r='0.92'/><circle cx='562.7' cy='250.8' r='0.92'/><circle cx='563.3' cy='255.1' r='0.91'/><circle cx='567.3' cy='266.3' r='0.82'/><circle cx='566.8' cy='274.3' r='0.81'/><circle cx='565.4' cy='287.6' r='0.80'/><circle cx='562.8' cy='296.2' r='0.79'/><circle cx='562.1' cy='300.1' r='0.79'/><circle cx='561.0' cy='304.6' r='0.79'/><circle cx='559.8' cy='308.8' r='0.78'/><circle cx='546.7' cy='335.6' r='0.77'/><circle cx='532.2' cy='355.7' r='0.76'/><circle cx='522.7' cy='365.7' r='0.76'/><circle cx='509.4' cy='377.0' r='0.76'/><circle cx='495.1' cy='385.9' r='0.77'/><circle cx='483.9' cy='391.8' r='0.78'/><circle cx='463.7' cy='399.3' r='0.80'/><circle cx='459.7' cy='401.0' r='0.80'/><circle cx='455.5' cy='402.5' r='0.81'/><circle cx='451.6' cy='402.7' r='0.81'/><circle cx='443.1' cy='404.2' r='0.82'/><circle cx='434.2' cy='405.5' r='0.83'/><circle cx='425.6' cy='406.0' r='0.83'/><circle cx='400.3' cy='403.9' r='0.86'/><circle cx='391.7' cy='401.4' r='0.87'/><circle cx='387.0' cy='400.3' r='0.87'/><circle cx='382.8' cy='399.8' r='0.87'/><circle cx='379.3' cy='398.0' r='0.88'/><circle cx='371.4' cy='395.2' r='0.88'/><circle cx='366.6' cy='394.2' r='0.88'/><circle cx='359.1' cy='390.7' r='0.89'/><circle cx='355.8' cy='388.9' r='0.89'/><circle cx='351.2' cy='386.2' r='0.89'/><circle cx='347.7' cy='383.8' r='0.90'/><circle cx='344.2' cy='382.3' r='0.90'/><circle cx='341.0' cy='379.1' r='0.90'/><circle cx='337.0' cy='376.5' r='0.90'/><circle cx='333.6' cy='373.6' r='0.90'/><circle cx='326.7' cy='368.1' r='0.90'/><circle cx='320.9' cy='362.3' r='0.90'/><circle cx='317.6' cy='359.5' r='0.90'/><circle cx='314.9' cy='356.0' r='0.90'/><circle cx='312.5' cy='353.2' r='0.90'/><circle cx='309.4' cy='349.9' r='0.90'/><circle cx='307.0' cy='346.1' r='0.89'/><circle cx='305.1' cy='343.1' r='0.89'/><circle cx='302.0' cy='338.4' r='0.89'/><circle cx='299.7' cy='335.5' r='0.89'/><circle cx='298.2' cy='332.1' r='0.89'/><circle cx='296.1' cy='327.9' r='0.88'/><circle cx='290.4' cy='315.8' r='0.87'/><circle cx='287.7' cy='307.7' r='0.87'/><circle cx='285.0' cy='300.5' r='0.86'/><circle cx='283.2' cy='295.8' r='0.86'/><circle cx='283.2' cy='291.9' r='0.85'/><circle cx='280.0' cy='278.2' r='0.84'/><circle cx='280.1' cy='274.1' r='0.84'/><circle cx='279.3' cy='261.5' r='0.82'/><circle cx='280.1' cy='256.9' r='0.82'/><circle cx='283.3' cy='231.2' r='0.80'/><circle cx='284.0' cy='227.9' r='0.79'/><circle cx='295.1' cy='195.7' r='0.77'/><circle cx='297.0' cy='191.9' r='0.77'/><circle cx='299.6' cy='187.6' r='0.77'/><circle cx='303.9' cy='180.7' r='0.76'/><circle cx='341.4' cy='143.6' r='0.77'/><circle cx='358.7' cy='132.7' r='0.78'/><circle cx='371.3' cy='127.4' r='0.79'/><circle cx='383.4' cy='122.6' r='0.80'/><circle cx='404.6' cy='118.3' r='0.82'/><circle cx='421.9' cy='118.0' r='0.83'/><circle cx='425.4' cy='117.8' r='0.84'/><circle cx='434.2' cy='117.8' r='0.85'/><circle cx='468.4' cy='124.7' r='0.88'/><circle cx='476.4' cy='127.7' r='0.88'/><circle cx='480.5' cy='128.8' r='0.88'/><circle cx='484.5' cy='131.1' r='0.89'/><circle cx='488.0' cy='132.4' r='0.89'/><circle cx='495.8' cy='136.5' r='0.89'/><circle cx='498.7' cy='138.3' r='0.89'/><circle cx='502.3' cy='140.9' r='0.90'/><circle cx='506.2' cy='143.4' r='0.90'/><circle cx='513.7' cy='149.3' r='0.90'/><circle cx='516.4' cy='151.7' r='0.90'/><circle cx='519.9' cy='154.8' r='0.90'/><circle cx='526.1' cy='160.8' r='0.90'/><circle cx='528.5' cy='163.5' r='0.90'/><circle cx='531.8' cy='166.6' r='0.90'/><circle cx='535.4' cy='170.2' r='0.90'/><circle cx='540.1' cy='176.9' r='0.89'/><circle cx='542.3' cy='181.1' r='0.89'/><circle cx='545.0' cy='184.0' r='0.89'/><circle cx='549.2' cy='191.9' r='0.89'/><circle cx='551.8' cy='195.7' r='0.88'/><circle cx='553.4' cy='199.4' r='0.88'/><circle cx='554.9' cy='202.9' r='0.88'/><circle cx='556.3' cy='206.6' r='0.87'/><circle cx='559.0' cy='211.3' r='0.87'/><circle cx='560.0' cy='215.5' r='0.87'/><circle cx='561.6' cy='219.5' r='0.86'/><circle cx='562.2' cy='222.6' r='0.86'/><circle cx='563.7' cy='227.9' r='0.86'/><circle cx='566.3' cy='240.5' r='0.84'/><circle cx='566.5' cy='248.9' r='0.84'/><circle cx='564.5' cy='306.2' r='0.72'/><circle cx='442.4' cy='408.8' r='0.74'/><circle cx='413.2' cy='409.1' r='0.76'/><circle cx='399.9' cy='407.2' r='0.77'/><circle cx='391.6' cy='405.9' r='0.77'/><circle cx='383.4' cy='404.3' r='0.78'/><circle cx='375.4' cy='402.0' r='0.78'/><circle cx='344.2' cy='386.7' r='0.80'/><circle cx='326.4' cy='373.1' r='0.80'/><circle cx='323.5' cy='371.3' r='0.80'/><circle cx='317.8' cy='364.6' r='0.80'/><circle cx='314.9' cy='361.5' r='0.80'/><circle cx='301.3' cy='344.9' r='0.79'/><circle cx='291.9' cy='329.5' r='0.79'/><circle cx='283.5' cy='310.7' r='0.78'/><circle cx='282.8' cy='306.2' r='0.78'/><circle cx='279.0' cy='294.0' r='0.77'/><circle cx='275.2' cy='255.0' r='0.74'/><circle cx='382.9' cy='119.4' r='0.73'/><circle cx='417.4' cy='113.1' r='0.75'/><circle cx='434.4' cy='114.2' r='0.76'/><circle cx='442.7' cy='114.7' r='0.77'/><circle cx='464.3' cy='119.2' r='0.78'/><circle cx='471.6' cy='121.9' r='0.78'/><circle cx='499.1' cy='134.2' r='0.80'/><circle cx='503.2' cy='136.7' r='0.80'/><circle cx='513.6' cy='143.8' r='0.80'/><circle cx='543.4' cy='174.5' r='0.80'/><circle cx='556.3' cy='196.8' r='0.79'/><circle cx='558.7' cy='200.4' r='0.78'/><circle cx='562.8' cy='212.8' r='0.78'/><circle cx='567.1' cy='225.1' r='0.77'/><circle cx='567.5' cy='229.5' r='0.77'/><circle cx='571.5' cy='259.0' r='0.75'/></g>
<g fill="#1a1c2c"><circle cx='3493' cy='507' r='5'/><circle cx='3487' cy='543' r='6'/><circle cx='3515' cy='536' r='6'/><circle cx='3468' cy='566' r='6'/><circle cx='3496' cy='562' r='7'/><circle cx='3517' cy='588' r='6'/><circle cx='3463' cy='595' r='6'/><circle cx='3460' cy='520' r='4'/><circle cx='3520' cy='480' r='4'/></g>
<g fill="none" stroke="#0c1a22" stroke-width="9" stroke-linecap="round">
<path d="M3463,869 C3480,835 3500,815 3525,807"/><path d="M3504,969 H3525"/><path d="M3455,1188 C3475,1175 3488,1160 3492,1139"/><path d="M3455,1097 C3490,1100 3510,1105 3525,1110"/>
</g>
<circle cx="3570" cy="1300" r="100" fill="none" stroke="#0b1820" stroke-width="9"/>
<path d="M3470,1240 L3525,1225 L3525,1370 L3470,1350 Z" fill="#0b1820"/>
<path d="M3485,1620 C3460,1620 3455,1700 3485,1715" fill="none" stroke="#191326" stroke-width="9"/>
<text x="3452" y="1830" font-family="Liberation Sans" font-size="70" font-weight="700" font-style="italic" fill="#141a28">HIG</text>
</svg>
<!-- logo card -->
<div class="box" style="left:66px;top:42px;width:714.5px;height:556.5px;border:2px solid #20253a;border-radius:32px;background:linear-gradient(180deg,#0f142a,#0e1328);box-shadow:0 10px 30px rgba(0,0,0,.25)"></div>
<div class="box" style="left:245px;top:82.5px;width:356.5px;height:355px;border-radius:57px;background:#ececf0;box-shadow:0 16px 40px rgba(0,0,0,.45)"></div>
<div class="box" style="left:173.7px;top:468px;width:500px;height:84px;border-radius:42px;border:3px solid transparent;background:linear-gradient(100deg,#1c1a47 0%,#1e1844 45%,#13223c 100%) padding-box,linear-gradient(90deg,#5a44cf 0%,#6a3fc8 50%,#3a7fa8 100%) border-box"></div>
<!-- modules card -->
<div class="box" style="left:66px;top:666px;width:714.5px;height:1400px;border:2px solid #20253a;border-radius:32px;background:#0e1328;box-shadow:0 10px 30px rgba(0,0,0,.25)"></div>
<div class="box" style="left:129.5px;top:1138.6px;width:604px;height:107px;border-radius:30px;background:#141a2e"></div>
<div class="box" style="left:151.4px;top:1166px;width:11px;height:49.6px;border-radius:6px;background:linear-gradient(180deg,#6366f1,#22c55e)"></div>
<!-- topbar -->
<div class="box" style="left:847px;top:49.6px;width:2750px;height:183.7px;border:2.5px solid #20253a;border-radius:32px;background:#0a0e1b"></div>
<div class="box" style="left:847px;top:238.8px;width:2607px;height:3px;background:#1f2436"></div>
<div class="box" style="left:921px;top:77px;width:2186.3px;height:128.8px;border-radius:31px;background:#151a2e;box-shadow:0 0 40px 6px rgba(0,0,0,.55)"></div>
<div class="box" style="left:984.4px;top:170.4px;width:192.6px;height:8.6px;border-radius:5px;background:linear-gradient(90deg,#6b5cf5,#8b5cf6)"></div>
<div class="box" style="left:3174px;top:93.8px;width:92.5px;height:93px;border-radius:26px;border:2.5px solid #252a3d;background:#0f1326"></div>
<div class="box" style="left:3292px;top:93.8px;width:92.5px;height:93px;border-radius:26px;border:2.5px solid #252a3d;background:#0f1326"></div>
<div class="box" style="left:3435px;top:93.8px;width:92.5px;height:93px;border-radius:26px;border:2.5px solid #252a3d;background:#0f1326"></div>
<!-- main card -->
<div class="box" style="left:847px;top:275px;width:2606px;height:1800px;border:3px solid #292e43;border-radius:44px;background:#11162a;box-shadow:-6px 10px 50px rgba(0,0,0,.45)"></div>
<div class="box" style="left:2667.4px;top:349.2px;width:330.2px;height:85.5px;border-radius:32px;background:linear-gradient(90deg,#6a5ef3,#8b5cf6)"></div>
<div class="box" style="left:3019.8px;top:349.2px;width:359.9px;height:85.5px;border-radius:32px;background:linear-gradient(90deg,#6a5ef3,#8b5cf6)"></div>
<div class="box" style="left:921.7px;top:479px;width:2458.3px;height:105.2px;border-radius:30px;border:3px solid #1c2133;background:#0c1120"></div>
<div class="box" style="left:921.7px;top:596px;width:2458.3px;height:135.5px;border-radius:24px;border:3px solid #2a2f44;background:#151a2e"></div>
<!-- table -->
<div class="box" style="left:921px;top:776px;width:2459px;height:1185px;border:2.5px solid #262b3e;border-right:none;border-radius:28px 0 0 28px"></div>
<div class="box" style="left:923.8px;top:778.6px;width:2456.2px;height:121px;background:#161b2f;border-bottom:2.5px solid #2a2f44"></div>
<div class="box" style="left:924px;top:1955.5px;width:2456px;height:2.5px;background:#2a2f42"></div>
<div class="box" style="left:922px;top:1308.9px;width:2458px;height:2.5px;background:#262b3e"></div>
<div class="box" style="left:922px;top:1661.2px;width:2458px;height:2.5px;background:#262b3e"></div>
<div class="box" style="left:1038.5px;top:778px;width:2px;height:119px;background:#1a1f33"></div>
<div class="box" style="left:1291px;top:778px;width:2px;height:119px;background:#1a1f33"></div>
<div class="box" style="left:2146px;top:778px;width:2px;height:119px;background:#1a1f33"></div>
<div class="box" style="left:2454px;top:778px;width:2px;height:119px;background:#1a1f33"></div>
<div class="box" style="left:2667px;top:778px;width:2px;height:119px;background:#1a1f33"></div>
<div class="box" style="left:3169px;top:778px;width:2px;height:119px;background:#1a1f33"></div>

<svg class="abs" style="left:0;top:0" width="3520" height="1980" viewBox="0 0 3520 1980">
<defs><linearGradient id="lg_green" gradientUnits="userSpaceOnUse" x1="250" y1="250" x2="1350" y2="1350"><stop offset="0" stop-color="#1aad50"/><stop offset="0.55" stop-color="#0f8a6a"/><stop offset="1" stop-color="#0d6e7c"/></linearGradient>
<linearGradient id="lg_title2" gradientUnits="userSpaceOnUse" x1="0" y1="0" x2="333" y2="0"><stop offset="0" stop-color="#c2508c"/><stop offset="1" stop-color="#43135e"/></linearGradient>
<linearGradient id="lg_tag" gradientUnits="userSpaceOnUse" x1="327" y1="0" x2="520" y2="0"><stop offset="0" stop-color="#26405e"/><stop offset="1" stop-color="#3f6c88"/></linearGradient></defs>
<g><circle cx='552.5' cy='261.5' r='0.90' fill='rgb(213,162,234)'/><circle cx='552.5' cy='264.9' r='0.90' fill='rgb(212,162,234)'/><circle cx='552.3' cy='268.3' r='0.89' fill='rgb(211,162,234)'/><circle cx='551.8' cy='275.1' r='0.88' fill='rgb(210,162,234)'/><circle cx='551.4' cy='278.5' r='0.87' fill='rgb(210,162,234)'/><circle cx='550.3' cy='285.2' r='0.86' fill='rgb(209,162,234)'/><circle cx='548.9' cy='291.9' r='0.84' fill='rgb(208,162,234)'/><circle cx='545.0' cy='304.9' r='0.82' fill='rgb(205,161,235)'/><circle cx='541.2' cy='314.4' r='0.81' fill='rgb(204,161,235)'/><circle cx='539.7' cy='317.5' r='0.80' fill='rgb(203,161,235)'/><circle cx='538.2' cy='320.5' r='0.80' fill='rgb(203,161,235)'/><circle cx='534.9' cy='326.5' r='0.79' fill='rgb(202,161,235)'/><circle cx='531.3' cy='332.3' r='0.79' fill='rgb(201,161,235)'/><circle cx='521.1' cy='345.9' r='0.78' fill='rgb(199,161,236)'/><circle cx='514.1' cy='353.3' r='0.78' fill='rgb(198,161,236)'/><circle cx='498.5' cy='366.5' r='0.79' fill='rgb(196,160,236)'/><circle cx='490.0' cy='372.1' r='0.80' fill='rgb(195,160,236)'/><circle cx='481.0' cy='377.0' r='0.81' fill='rgb(194,160,236)'/><circle cx='477.9' cy='378.5' r='0.82' fill='rgb(194,160,237)'/><circle cx='471.7' cy='381.2' r='0.83' fill='rgb(193,160,237)'/><circle cx='468.5' cy='382.4' r='0.84' fill='rgb(193,160,237)'/><circle cx='465.3' cy='383.5' r='0.84' fill='rgb(193,160,237)'/><circle cx='462.1' cy='384.6' r='0.85' fill='rgb(193,160,237)'/><circle cx='455.5' cy='386.5' r='0.86' fill='rgb(192,160,237)'/><circle cx='448.9' cy='388.0' r='0.87' fill='rgb(192,160,237)'/><circle cx='445.5' cy='388.6' r='0.88' fill='rgb(192,160,237)'/><circle cx='438.8' cy='389.6' r='0.89' fill='rgb(192,160,237)'/><circle cx='432.0' cy='390.2' r='0.91' fill='rgb(192,160,237)'/><circle cx='428.6' cy='390.4' r='0.92' fill='rgb(192,160,237)'/><circle cx='425.2' cy='390.5' r='0.92' fill='rgb(192,160,237)'/><circle cx='421.8' cy='390.5' r='0.93' fill='rgb(192,160,237)'/><circle cx='418.4' cy='390.4' r='0.94' fill='rgb(192,160,237)'/><circle cx='415.0' cy='390.2' r='0.94' fill='rgb(192,160,237)'/><circle cx='411.6' cy='389.9' r='0.95' fill='rgb(192,160,237)'/><circle cx='408.2' cy='389.6' r='0.96' fill='rgb(192,160,237)'/><circle cx='404.8' cy='389.1' r='0.96' fill='rgb(192,160,237)'/><circle cx='401.5' cy='388.6' r='0.97' fill='rgb(192,160,237)'/><circle cx='398.1' cy='388.0' r='0.98' fill='rgb(192,160,237)'/><circle cx='394.8' cy='387.3' r='0.98' fill='rgb(192,160,237)'/><circle cx='391.5' cy='386.5' r='0.99' fill='rgb(192,160,237)'/><circle cx='388.2' cy='385.6' r='1.00' fill='rgb(192,160,237)'/><circle cx='384.9' cy='384.6' r='1.00' fill='rgb(193,160,237)'/><circle cx='381.7' cy='383.5' r='1.01' fill='rgb(193,160,237)'/><circle cx='378.5' cy='382.4' r='1.01' fill='rgb(193,160,237)'/><circle cx='375.3' cy='381.2' r='1.02' fill='rgb(193,160,237)'/><circle cx='372.2' cy='379.8' r='1.02' fill='rgb(193,160,237)'/><circle cx='369.1' cy='378.5' r='1.03' fill='rgb(194,160,237)'/><circle cx='366.0' cy='377.0' r='1.03' fill='rgb(194,160,236)'/><circle cx='363.0' cy='375.4' r='1.03' fill='rgb(194,160,236)'/><circle cx='360.0' cy='373.8' r='1.04' fill='rgb(194,160,236)'/><circle cx='357.0' cy='372.1' r='1.04' fill='rgb(195,160,236)'/><circle cx='354.1' cy='370.3' r='1.04' fill='rgb(195,160,236)'/><circle cx='351.3' cy='368.4' r='1.04' fill='rgb(195,160,236)'/><circle cx='348.5' cy='366.5' r='1.05' fill='rgb(196,160,236)'/><circle cx='345.8' cy='364.4' r='1.05' fill='rgb(196,160,236)'/><circle cx='343.1' cy='362.4' r='1.05' fill='rgb(196,160,236)'/><circle cx='340.4' cy='360.2' r='1.05' fill='rgb(197,160,236)'/><circle cx='337.9' cy='358.0' r='1.05' fill='rgb(197,160,236)'/><circle cx='335.3' cy='355.7' r='1.05' fill='rgb(197,160,236)'/><circle cx='332.9' cy='353.3' r='1.05' fill='rgb(198,161,236)'/><circle cx='330.5' cy='350.9' r='1.05' fill='rgb(198,161,236)'/><circle cx='328.2' cy='348.4' r='1.05' fill='rgb(198,161,236)'/><circle cx='325.9' cy='345.9' r='1.05' fill='rgb(199,161,236)'/><circle cx='323.7' cy='343.3' r='1.04' fill='rgb(199,161,236)'/><circle cx='321.6' cy='340.6' r='1.04' fill='rgb(200,161,236)'/><circle cx='319.5' cy='337.9' r='1.04' fill='rgb(200,161,235)'/><circle cx='317.6' cy='335.1' r='1.04' fill='rgb(201,161,235)'/><circle cx='315.7' cy='332.3' r='1.03' fill='rgb(201,161,235)'/><circle cx='313.8' cy='329.4' r='1.03' fill='rgb(202,161,235)'/><circle cx='312.1' cy='326.5' r='1.03' fill='rgb(202,161,235)'/><circle cx='310.4' cy='323.5' r='1.02' fill='rgb(202,161,235)'/><circle cx='308.8' cy='320.5' r='1.02' fill='rgb(203,161,235)'/><circle cx='307.3' cy='317.5' r='1.01' fill='rgb(203,161,235)'/><circle cx='305.8' cy='314.4' r='1.01' fill='rgb(204,161,235)'/><circle cx='304.5' cy='311.3' r='1.00' fill='rgb(204,161,235)'/><circle cx='303.2' cy='308.1' r='1.00' fill='rgb(205,161,235)'/><circle cx='302.0' cy='304.9' r='0.99' fill='rgb(205,161,235)'/><circle cx='300.9' cy='301.7' r='0.99' fill='rgb(206,161,235)'/><circle cx='299.9' cy='298.4' r='0.98' fill='rgb(207,161,234)'/><circle cx='299.0' cy='295.2' r='0.97' fill='rgb(207,161,234)'/><circle cx='298.1' cy='291.9' r='0.97' fill='rgb(208,162,234)'/><circle cx='297.4' cy='288.5' r='0.96' fill='rgb(208,162,234)'/><circle cx='296.7' cy='285.2' r='0.95' fill='rgb(209,162,234)'/><circle cx='296.1' cy='281.8' r='0.95' fill='rgb(209,162,234)'/><circle cx='295.6' cy='278.5' r='0.94' fill='rgb(210,162,234)'/><circle cx='295.2' cy='275.1' r='0.93' fill='rgb(210,162,234)'/><circle cx='294.9' cy='271.7' r='0.92' fill='rgb(211,162,234)'/><circle cx='294.7' cy='268.3' r='0.92' fill='rgb(211,162,234)'/><circle cx='294.5' cy='264.9' r='0.91' fill='rgb(212,162,234)'/><circle cx='294.5' cy='261.5' r='0.90' fill='rgb(213,162,234)'/><circle cx='294.5' cy='258.1' r='0.90' fill='rgb(213,162,233)'/><circle cx='294.7' cy='254.7' r='0.89' fill='rgb(214,162,233)'/><circle cx='295.2' cy='247.9' r='0.88' fill='rgb(215,162,233)'/><circle cx='305.8' cy='208.6' r='0.81' fill='rgb(221,163,232)'/><circle cx='307.3' cy='205.5' r='0.80' fill='rgb(222,163,232)'/><circle cx='317.6' cy='187.9' r='0.78' fill='rgb(224,163,232)'/><circle cx='319.5' cy='185.1' r='0.78' fill='rgb(225,163,232)'/><circle cx='335.3' cy='167.3' r='0.78' fill='rgb(228,164,231)'/><circle cx='343.1' cy='160.6' r='0.79' fill='rgb(229,164,231)'/><circle cx='360.0' cy='149.2' r='0.81' fill='rgb(231,164,231)'/><circle cx='363.0' cy='147.6' r='0.81' fill='rgb(231,164,231)'/><circle cx='366.0' cy='146.0' r='0.81' fill='rgb(231,164,231)'/><circle cx='378.5' cy='140.6' r='0.84' fill='rgb(232,164,230)'/><circle cx='381.7' cy='139.5' r='0.84' fill='rgb(232,164,230)'/><circle cx='384.9' cy='138.4' r='0.85' fill='rgb(232,164,230)'/><circle cx='388.2' cy='137.4' r='0.85' fill='rgb(233,164,230)'/><circle cx='394.8' cy='135.7' r='0.87' fill='rgb(233,164,230)'/><circle cx='398.1' cy='135.0' r='0.87' fill='rgb(233,164,230)'/><circle cx='401.5' cy='134.4' r='0.88' fill='rgb(233,164,230)'/><circle cx='404.8' cy='133.9' r='0.89' fill='rgb(233,164,230)'/><circle cx='408.2' cy='133.4' r='0.89' fill='rgb(233,164,230)'/><circle cx='411.6' cy='133.1' r='0.90' fill='rgb(233,164,230)'/><circle cx='415.0' cy='132.8' r='0.91' fill='rgb(233,164,230)'/><circle cx='418.4' cy='132.6' r='0.92' fill='rgb(233,164,230)'/><circle cx='421.8' cy='132.5' r='0.92' fill='rgb(233,164,230)'/><circle cx='425.2' cy='132.5' r='0.93' fill='rgb(233,164,230)'/><circle cx='428.6' cy='132.6' r='0.94' fill='rgb(233,164,230)'/><circle cx='432.0' cy='132.8' r='0.94' fill='rgb(233,164,230)'/><circle cx='435.4' cy='133.1' r='0.95' fill='rgb(233,164,230)'/><circle cx='438.8' cy='133.4' r='0.96' fill='rgb(233,164,230)'/><circle cx='442.2' cy='133.9' r='0.96' fill='rgb(233,164,230)'/><circle cx='445.5' cy='134.4' r='0.97' fill='rgb(233,164,230)'/><circle cx='448.9' cy='135.0' r='0.98' fill='rgb(233,164,230)'/><circle cx='452.2' cy='135.7' r='0.98' fill='rgb(233,164,230)'/><circle cx='455.5' cy='136.5' r='0.99' fill='rgb(233,164,230)'/><circle cx='458.8' cy='137.4' r='1.00' fill='rgb(233,164,230)'/><circle cx='462.1' cy='138.4' r='1.00' fill='rgb(232,164,230)'/><circle cx='465.3' cy='139.5' r='1.01' fill='rgb(232,164,230)'/><circle cx='468.5' cy='140.6' r='1.01' fill='rgb(232,164,230)'/><circle cx='471.7' cy='141.8' r='1.02' fill='rgb(232,164,230)'/><circle cx='474.8' cy='143.2' r='1.02' fill='rgb(232,164,230)'/><circle cx='477.9' cy='144.5' r='1.03' fill='rgb(231,164,230)'/><circle cx='481.0' cy='146.0' r='1.03' fill='rgb(231,164,231)'/><circle cx='484.0' cy='147.6' r='1.03' fill='rgb(231,164,231)'/><circle cx='487.0' cy='149.2' r='1.04' fill='rgb(231,164,231)'/><circle cx='490.0' cy='150.9' r='1.04' fill='rgb(230,164,231)'/><circle cx='492.9' cy='152.7' r='1.04' fill='rgb(230,164,231)'/><circle cx='495.7' cy='154.6' r='1.04' fill='rgb(230,164,231)'/><circle cx='498.5' cy='156.5' r='1.05' fill='rgb(229,164,231)'/><circle cx='501.2' cy='158.6' r='1.05' fill='rgb(229,164,231)'/><circle cx='503.9' cy='160.6' r='1.05' fill='rgb(229,164,231)'/><circle cx='506.6' cy='162.8' r='1.05' fill='rgb(228,164,231)'/><circle cx='509.1' cy='165.0' r='1.05' fill='rgb(228,164,231)'/><circle cx='511.7' cy='167.3' r='1.05' fill='rgb(228,164,231)'/><circle cx='514.1' cy='169.7' r='1.05' fill='rgb(227,163,231)'/><circle cx='516.5' cy='172.1' r='1.05' fill='rgb(227,163,231)'/><circle cx='518.8' cy='174.6' r='1.05' fill='rgb(227,163,231)'/><circle cx='521.1' cy='177.1' r='1.05' fill='rgb(226,163,231)'/><circle cx='523.3' cy='179.7' r='1.04' fill='rgb(226,163,231)'/><circle cx='525.4' cy='182.4' r='1.04' fill='rgb(225,163,231)'/><circle cx='527.5' cy='185.1' r='1.04' fill='rgb(225,163,232)'/><circle cx='529.4' cy='187.9' r='1.04' fill='rgb(224,163,232)'/><circle cx='531.3' cy='190.7' r='1.03' fill='rgb(224,163,232)'/><circle cx='533.2' cy='193.6' r='1.03' fill='rgb(223,163,232)'/><circle cx='534.9' cy='196.5' r='1.03' fill='rgb(223,163,232)'/><circle cx='536.6' cy='199.5' r='1.02' fill='rgb(223,163,232)'/><circle cx='538.2' cy='202.5' r='1.02' fill='rgb(222,163,232)'/><circle cx='539.7' cy='205.5' r='1.01' fill='rgb(222,163,232)'/><circle cx='541.2' cy='208.6' r='1.01' fill='rgb(221,163,232)'/><circle cx='542.5' cy='211.7' r='1.00' fill='rgb(221,163,232)'/><circle cx='543.8' cy='214.9' r='1.00' fill='rgb(220,163,232)'/><circle cx='545.0' cy='218.1' r='0.99' fill='rgb(220,163,232)'/><circle cx='546.1' cy='221.3' r='0.99' fill='rgb(219,163,232)'/><circle cx='547.1' cy='224.6' r='0.98' fill='rgb(218,163,233)'/><circle cx='548.0' cy='227.8' r='0.97' fill='rgb(218,163,233)'/><circle cx='548.9' cy='231.1' r='0.97' fill='rgb(217,162,233)'/><circle cx='549.6' cy='234.5' r='0.96' fill='rgb(217,162,233)'/><circle cx='550.3' cy='237.8' r='0.95' fill='rgb(216,162,233)'/><circle cx='550.9' cy='241.2' r='0.95' fill='rgb(216,162,233)'/><circle cx='551.4' cy='244.5' r='0.94' fill='rgb(215,162,233)'/><circle cx='551.8' cy='247.9' r='0.93' fill='rgb(215,162,233)'/><circle cx='552.1' cy='251.3' r='0.92' fill='rgb(214,162,233)'/><circle cx='552.3' cy='254.7' r='0.92' fill='rgb(214,162,233)'/><circle cx='552.5' cy='258.1' r='0.91' fill='rgb(213,162,233)'/><circle cx='555.5' cy='263.2' r='1.05' fill='rgb(212,162,234)'/><circle cx='555.4' cy='266.6' r='1.04' fill='rgb(212,162,234)'/><circle cx='555.2' cy='270.0' r='1.03' fill='rgb(211,162,234)'/><circle cx='555.0' cy='273.4' r='1.02' fill='rgb(211,162,234)'/><circle cx='554.6' cy='276.8' r='1.01' fill='rgb(210,162,234)'/><circle cx='554.2' cy='280.2' r='1.00' fill='rgb(209,162,234)'/><circle cx='553.6' cy='283.6' r='1.00' fill='rgb(209,162,234)'/><circle cx='553.0' cy='286.9' r='0.99' fill='rgb(208,162,234)'/><circle cx='552.3' cy='290.3' r='0.98' fill='rgb(208,162,234)'/><circle cx='551.5' cy='293.6' r='0.97' fill='rgb(207,161,234)'/><circle cx='550.7' cy='296.9' r='0.96' fill='rgb(207,161,234)'/><circle cx='549.7' cy='300.2' r='0.96' fill='rgb(206,161,234)'/><circle cx='548.7' cy='303.4' r='0.95' fill='rgb(206,161,235)'/><circle cx='547.5' cy='306.6' r='0.94' fill='rgb(205,161,235)'/><circle cx='546.3' cy='309.8' r='0.94' fill='rgb(205,161,235)'/><circle cx='545.0' cy='313.0' r='0.93' fill='rgb(204,161,235)'/><circle cx='543.7' cy='316.1' r='0.92' fill='rgb(204,161,235)'/><circle cx='542.2' cy='319.2' r='0.92' fill='rgb(203,161,235)'/><circle cx='539.1' cy='325.3' r='0.91' fill='rgb(202,161,235)'/><circle cx='537.4' cy='328.2' r='0.91' fill='rgb(202,161,235)'/><circle cx='535.6' cy='331.2' r='0.90' fill='rgb(201,161,235)'/><circle cx='533.8' cy='334.0' r='0.90' fill='rgb(201,161,235)'/><circle cx='531.9' cy='336.9' r='0.90' fill='rgb(200,161,235)'/><circle cx='529.9' cy='339.6' r='0.89' fill='rgb(200,161,236)'/><circle cx='527.8' cy='342.4' r='0.89' fill='rgb(199,161,236)'/><circle cx='525.7' cy='345.0' r='0.89' fill='rgb(199,161,236)'/><circle cx='523.5' cy='347.6' r='0.89' fill='rgb(199,161,236)'/><circle cx='518.9' cy='352.7' r='0.89' fill='rgb(198,161,236)'/><circle cx='516.5' cy='355.1' r='0.89' fill='rgb(197,160,236)'/><circle cx='514.1' cy='357.5' r='0.89' fill='rgb(197,160,236)'/><circle cx='511.6' cy='359.8' r='0.89' fill='rgb(197,160,236)'/><circle cx='509.0' cy='362.1' r='0.90' fill='rgb(196,160,236)'/><circle cx='506.4' cy='364.2' r='0.90' fill='rgb(196,160,236)'/><circle cx='503.7' cy='366.4' r='0.90' fill='rgb(196,160,236)'/><circle cx='500.9' cy='368.4' r='0.90' fill='rgb(195,160,236)'/><circle cx='498.2' cy='370.4' r='0.91' fill='rgb(195,160,236)'/><circle cx='495.3' cy='372.3' r='0.91' fill='rgb(195,160,236)'/><circle cx='492.4' cy='374.1' r='0.92' fill='rgb(194,160,236)'/><circle cx='489.5' cy='375.8' r='0.92' fill='rgb(194,160,236)'/><circle cx='486.5' cy='377.5' r='0.93' fill='rgb(194,160,236)'/><circle cx='483.5' cy='379.1' r='0.93' fill='rgb(194,160,237)'/><circle cx='480.4' cy='380.6' r='0.94' fill='rgb(193,160,237)'/><circle cx='477.3' cy='382.0' r='0.95' fill='rgb(193,160,237)'/><circle cx='474.2' cy='383.4' r='0.95' fill='rgb(193,160,237)'/><circle cx='471.0' cy='384.6' r='0.96' fill='rgb(193,160,237)'/><circle cx='467.8' cy='385.8' r='0.97' fill='rgb(192,160,237)'/><circle cx='464.6' cy='386.9' r='0.98' fill='rgb(192,160,237)'/><circle cx='461.4' cy='388.0' r='0.98' fill='rgb(192,160,237)'/><circle cx='458.1' cy='388.9' r='0.99' fill='rgb(192,160,237)'/><circle cx='454.8' cy='389.7' r='1.00' fill='rgb(192,160,237)'/><circle cx='451.4' cy='390.5' r='1.01' fill='rgb(192,160,237)'/><circle cx='448.1' cy='391.2' r='1.02' fill='rgb(192,160,237)'/><circle cx='444.7' cy='391.8' r='1.03' fill='rgb(191,160,237)'/><circle cx='441.4' cy='392.3' r='1.04' fill='rgb(191,160,237)'/><circle cx='438.0' cy='392.7' r='1.05' fill='rgb(191,160,237)'/><circle cx='434.6' cy='393.0' r='1.06' fill='rgb(191,160,237)'/><circle cx='431.2' cy='393.3' r='1.06' fill='rgb(191,160,237)'/><circle cx='427.8' cy='393.4' r='1.07' fill='rgb(191,160,237)'/><circle cx='424.4' cy='393.5' r='1.08' fill='rgb(191,160,237)'/><circle cx='420.9' cy='393.5' r='1.09' fill='rgb(191,160,237)'/><circle cx='417.5' cy='393.4' r='1.10' fill='rgb(191,160,237)'/><circle cx='414.1' cy='393.2' r='1.11' fill='rgb(191,160,237)'/><circle cx='410.7' cy='392.9' r='1.12' fill='rgb(191,160,237)'/><circle cx='407.3' cy='392.5' r='1.13' fill='rgb(191,160,237)'/><circle cx='403.9' cy='392.0' r='1.14' fill='rgb(191,160,237)'/><circle cx='400.6' cy='391.5' r='1.15' fill='rgb(192,160,237)'/><circle cx='397.2' cy='390.9' r='1.15' fill='rgb(192,160,237)'/><circle cx='393.9' cy='390.1' r='1.16' fill='rgb(192,160,237)'/><circle cx='390.6' cy='389.3' r='1.17' fill='rgb(192,160,237)'/><circle cx='387.3' cy='388.4' r='1.18' fill='rgb(192,160,237)'/><circle cx='384.0' cy='387.5' r='1.19' fill='rgb(192,160,237)'/><circle cx='380.8' cy='386.4' r='1.19' fill='rgb(192,160,237)'/><circle cx='377.6' cy='385.2' r='1.20' fill='rgb(193,160,237)'/><circle cx='374.4' cy='384.0' r='1.21' fill='rgb(193,160,237)'/><circle cx='371.2' cy='382.7' r='1.21' fill='rgb(193,160,237)'/><circle cx='368.1' cy='381.3' r='1.22' fill='rgb(193,160,237)'/><circle cx='365.0' cy='379.8' r='1.22' fill='rgb(193,160,237)'/><circle cx='362.0' cy='378.3' r='1.23' fill='rgb(194,160,237)'/><circle cx='359.0' cy='376.7' r='1.23' fill='rgb(194,160,236)'/><circle cx='356.0' cy='375.0' r='1.24' fill='rgb(194,160,236)'/><circle cx='353.1' cy='373.2' r='1.24' fill='rgb(194,160,236)'/><circle cx='350.3' cy='371.3' r='1.24' fill='rgb(195,160,236)'/><circle cx='347.4' cy='369.4' r='1.24' fill='rgb(195,160,236)'/><circle cx='344.7' cy='367.4' r='1.25' fill='rgb(195,160,236)'/><circle cx='342.0' cy='365.3' r='1.25' fill='rgb(196,160,236)'/><circle cx='339.3' cy='363.2' r='1.25' fill='rgb(196,160,236)'/><circle cx='336.7' cy='361.0' r='1.25' fill='rgb(196,160,236)'/><circle cx='334.2' cy='358.7' r='1.25' fill='rgb(197,160,236)'/><circle cx='331.7' cy='356.3' r='1.25' fill='rgb(197,160,236)'/><circle cx='329.3' cy='353.9' r='1.25' fill='rgb(198,161,236)'/><circle cx='326.9' cy='351.5' r='1.25' fill='rgb(198,161,236)'/><circle cx='324.6' cy='348.9' r='1.25' fill='rgb(198,161,236)'/><circle cx='322.4' cy='346.3' r='1.24' fill='rgb(199,161,236)'/><circle cx='320.2' cy='343.7' r='1.24' fill='rgb(199,161,236)'/><circle cx='318.1' cy='341.0' r='1.24' fill='rgb(200,161,236)'/><circle cx='316.1' cy='338.3' r='1.23' fill='rgb(200,161,235)'/><circle cx='314.2' cy='335.5' r='1.23' fill='rgb(201,161,235)'/><circle cx='312.3' cy='332.6' r='1.23' fill='rgb(201,161,235)'/><circle cx='310.5' cy='329.7' r='1.22' fill='rgb(201,161,235)'/><circle cx='308.8' cy='326.8' r='1.22' fill='rgb(202,161,235)'/><circle cx='307.1' cy='323.8' r='1.21' fill='rgb(202,161,235)'/><circle cx='305.5' cy='320.7' r='1.20' fill='rgb(203,161,235)'/><circle cx='304.0' cy='317.7' r='1.20' fill='rgb(203,161,235)'/><circle cx='302.6' cy='314.6' r='1.19' fill='rgb(204,161,235)'/><circle cx='301.3' cy='311.4' r='1.18' fill='rgb(204,161,235)'/><circle cx='300.1' cy='308.2' r='1.18' fill='rgb(205,161,235)'/><circle cx='298.9' cy='305.0' r='1.17' fill='rgb(205,161,235)'/><circle cx='297.8' cy='301.8' r='1.16' fill='rgb(206,161,235)'/><circle cx='296.8' cy='298.5' r='1.15' fill='rgb(207,161,234)'/><circle cx='295.9' cy='295.3' r='1.14' fill='rgb(207,161,234)'/><circle cx='295.1' cy='291.9' r='1.14' fill='rgb(208,162,234)'/><circle cx='294.3' cy='288.6' r='1.13' fill='rgb(208,162,234)'/><circle cx='293.7' cy='285.3' r='1.12' fill='rgb(209,162,234)'/><circle cx='293.1' cy='281.9' r='1.11' fill='rgb(209,162,234)'/><circle cx='292.6' cy='278.5' r='1.10' fill='rgb(210,162,234)'/><circle cx='292.2' cy='275.1' r='1.09' fill='rgb(210,162,234)'/><circle cx='291.9' cy='271.7' r='1.08' fill='rgb(211,162,234)'/><circle cx='291.7' cy='268.3' r='1.07' fill='rgb(211,162,234)'/><circle cx='291.5' cy='264.9' r='1.06' fill='rgb(212,162,234)'/><circle cx='291.5' cy='261.5' r='1.05' fill='rgb(213,162,234)'/><circle cx='291.5' cy='258.1' r='1.05' fill='rgb(213,162,233)'/><circle cx='291.7' cy='254.7' r='1.04' fill='rgb(214,162,233)'/><circle cx='291.9' cy='251.3' r='1.03' fill='rgb(214,162,233)'/><circle cx='292.2' cy='247.9' r='1.02' fill='rgb(215,162,233)'/><circle cx='292.6' cy='244.5' r='1.01' fill='rgb(215,162,233)'/><circle cx='293.1' cy='241.1' r='1.00' fill='rgb(216,162,233)'/><circle cx='293.7' cy='237.7' r='0.99' fill='rgb(216,162,233)'/><circle cx='294.3' cy='234.4' r='0.98' fill='rgb(217,162,233)'/><circle cx='295.1' cy='231.1' r='0.98' fill='rgb(217,162,233)'/><circle cx='295.9' cy='227.7' r='0.97' fill='rgb(218,163,233)'/><circle cx='296.8' cy='224.5' r='0.96' fill='rgb(218,163,233)'/><circle cx='297.8' cy='221.2' r='0.95' fill='rgb(219,163,232)'/><circle cx='298.9' cy='218.0' r='0.95' fill='rgb(220,163,232)'/><circle cx='300.1' cy='214.8' r='0.94' fill='rgb(220,163,232)'/><circle cx='301.3' cy='211.6' r='0.93' fill='rgb(221,163,232)'/><circle cx='302.6' cy='208.4' r='0.93' fill='rgb(221,163,232)'/><circle cx='304.0' cy='205.3' r='0.92' fill='rgb(222,163,232)'/><circle cx='307.1' cy='199.2' r='0.91' fill='rgb(223,163,232)'/><circle cx='308.8' cy='196.2' r='0.91' fill='rgb(223,163,232)'/><circle cx='310.5' cy='193.3' r='0.90' fill='rgb(224,163,232)'/><circle cx='312.3' cy='190.4' r='0.90' fill='rgb(224,163,232)'/><circle cx='314.2' cy='187.5' r='0.90' fill='rgb(224,163,232)'/><circle cx='318.1' cy='182.0' r='0.89' fill='rgb(225,163,231)'/><circle cx='320.2' cy='179.3' r='0.89' fill='rgb(226,163,231)'/><circle cx='322.4' cy='176.7' r='0.89' fill='rgb(226,163,231)'/><circle cx='324.6' cy='174.1' r='0.89' fill='rgb(227,163,231)'/><circle cx='326.9' cy='171.5' r='0.89' fill='rgb(227,163,231)'/><circle cx='329.3' cy='169.1' r='0.89' fill='rgb(227,163,231)'/><circle cx='331.7' cy='166.7' r='0.89' fill='rgb(228,164,231)'/><circle cx='334.2' cy='164.3' r='0.89' fill='rgb(228,164,231)'/><circle cx='336.7' cy='162.0' r='0.89' fill='rgb(229,164,231)'/><circle cx='339.3' cy='159.8' r='0.90' fill='rgb(229,164,231)'/><circle cx='342.0' cy='157.7' r='0.90' fill='rgb(229,164,231)'/><circle cx='344.7' cy='155.6' r='0.90' fill='rgb(230,164,231)'/><circle cx='347.4' cy='153.6' r='0.91' fill='rgb(230,164,231)'/><circle cx='350.3' cy='151.7' r='0.91' fill='rgb(230,164,231)'/><circle cx='356.0' cy='148.0' r='0.92' fill='rgb(231,164,231)'/><circle cx='359.0' cy='146.3' r='0.93' fill='rgb(231,164,231)'/><circle cx='362.0' cy='144.7' r='0.93' fill='rgb(231,164,230)'/><circle cx='365.0' cy='143.2' r='0.94' fill='rgb(232,164,230)'/><circle cx='368.1' cy='141.7' r='0.94' fill='rgb(232,164,230)'/><circle cx='371.2' cy='140.3' r='0.95' fill='rgb(232,164,230)'/><circle cx='374.4' cy='139.0' r='0.96' fill='rgb(232,164,230)'/><circle cx='377.6' cy='137.8' r='0.96' fill='rgb(232,164,230)'/><circle cx='380.8' cy='136.6' r='0.97' fill='rgb(233,164,230)'/><circle cx='384.0' cy='135.5' r='0.98' fill='rgb(233,164,230)'/><circle cx='387.3' cy='134.6' r='0.99' fill='rgb(233,164,230)'/><circle cx='390.6' cy='133.7' r='1.00' fill='rgb(233,164,230)'/><circle cx='393.9' cy='132.9' r='1.01' fill='rgb(233,164,230)'/><circle cx='397.2' cy='132.1' r='1.01' fill='rgb(233,164,230)'/><circle cx='400.6' cy='131.5' r='1.02' fill='rgb(233,164,230)'/><circle cx='403.9' cy='131.0' r='1.03' fill='rgb(234,164,230)'/><circle cx='407.3' cy='130.5' r='1.04' fill='rgb(234,164,230)'/><circle cx='410.7' cy='130.1' r='1.05' fill='rgb(234,164,230)'/><circle cx='414.1' cy='129.8' r='1.06' fill='rgb(234,164,230)'/><circle cx='417.5' cy='129.6' r='1.07' fill='rgb(234,164,230)'/><circle cx='420.9' cy='129.5' r='1.08' fill='rgb(234,164,230)'/><circle cx='424.4' cy='129.5' r='1.09' fill='rgb(234,164,230)'/><circle cx='427.8' cy='129.6' r='1.10' fill='rgb(234,164,230)'/><circle cx='431.2' cy='129.7' r='1.11' fill='rgb(234,164,230)'/><circle cx='434.6' cy='130.0' r='1.12' fill='rgb(234,164,230)'/><circle cx='438.0' cy='130.3' r='1.12' fill='rgb(234,164,230)'/><circle cx='441.4' cy='130.7' r='1.13' fill='rgb(234,164,230)'/><circle cx='444.7' cy='131.2' r='1.14' fill='rgb(234,164,230)'/><circle cx='448.1' cy='131.8' r='1.15' fill='rgb(233,164,230)'/><circle cx='451.4' cy='132.5' r='1.16' fill='rgb(233,164,230)'/><circle cx='454.8' cy='133.3' r='1.17' fill='rgb(233,164,230)'/><circle cx='458.1' cy='134.1' r='1.17' fill='rgb(233,164,230)'/><circle cx='461.4' cy='135.0' r='1.18' fill='rgb(233,164,230)'/><circle cx='464.6' cy='136.1' r='1.19' fill='rgb(233,164,230)'/><circle cx='467.8' cy='137.2' r='1.20' fill='rgb(233,164,230)'/><circle cx='471.0' cy='138.4' r='1.20' fill='rgb(232,164,230)'/><circle cx='474.2' cy='139.6' r='1.21' fill='rgb(232,164,230)'/><circle cx='477.3' cy='141.0' r='1.21' fill='rgb(232,164,230)'/><circle cx='480.4' cy='142.4' r='1.22' fill='rgb(232,164,230)'/><circle cx='483.5' cy='143.9' r='1.22' fill='rgb(231,164,230)'/><circle cx='486.5' cy='145.5' r='1.23' fill='rgb(231,164,231)'/><circle cx='489.5' cy='147.2' r='1.23' fill='rgb(231,164,231)'/><circle cx='492.4' cy='148.9' r='1.24' fill='rgb(231,164,231)'/><circle cx='495.3' cy='150.7' r='1.24' fill='rgb(230,164,231)'/><circle cx='498.2' cy='152.6' r='1.24' fill='rgb(230,164,231)'/><circle cx='500.9' cy='154.6' r='1.25' fill='rgb(230,164,231)'/><circle cx='503.7' cy='156.6' r='1.25' fill='rgb(229,164,231)'/><circle cx='506.4' cy='158.8' r='1.25' fill='rgb(229,164,231)'/><circle cx='509.0' cy='160.9' r='1.25' fill='rgb(229,164,231)'/><circle cx='511.6' cy='163.2' r='1.25' fill='rgb(228,164,231)'/><circle cx='514.1' cy='165.5' r='1.25' fill='rgb(228,164,231)'/><circle cx='516.5' cy='167.9' r='1.25' fill='rgb(228,164,231)'/><circle cx='518.9' cy='170.3' r='1.25' fill='rgb(227,163,231)'/><circle cx='521.3' cy='172.8' r='1.25' fill='rgb(227,163,231)'/><circle cx='523.5' cy='175.4' r='1.24' fill='rgb(226,163,231)'/><circle cx='525.7' cy='178.0' r='1.24' fill='rgb(226,163,231)'/><circle cx='527.8' cy='180.6' r='1.24' fill='rgb(226,163,231)'/><circle cx='529.9' cy='183.4' r='1.24' fill='rgb(225,163,231)'/><circle cx='531.9' cy='186.1' r='1.23' fill='rgb(225,163,232)'/><circle cx='533.8' cy='189.0' r='1.23' fill='rgb(224,163,232)'/><circle cx='535.6' cy='191.8' r='1.22' fill='rgb(224,163,232)'/><circle cx='537.4' cy='194.8' r='1.22' fill='rgb(223,163,232)'/><circle cx='539.1' cy='197.7' r='1.21' fill='rgb(223,163,232)'/><circle cx='540.7' cy='200.7' r='1.21' fill='rgb(222,163,232)'/><circle cx='542.2' cy='203.8' r='1.20' fill='rgb(222,163,232)'/><circle cx='543.7' cy='206.9' r='1.19' fill='rgb(221,163,232)'/><circle cx='545.0' cy='210.0' r='1.19' fill='rgb(221,163,232)'/><circle cx='546.3' cy='213.2' r='1.18' fill='rgb(220,163,232)'/><circle cx='547.5' cy='216.4' r='1.17' fill='rgb(220,163,232)'/><circle cx='548.7' cy='219.6' r='1.17' fill='rgb(219,163,232)'/><circle cx='549.7' cy='222.8' r='1.16' fill='rgb(219,163,233)'/><circle cx='550.7' cy='226.1' r='1.15' fill='rgb(218,163,233)'/><circle cx='551.5' cy='229.4' r='1.14' fill='rgb(218,163,233)'/><circle cx='552.3' cy='232.7' r='1.13' fill='rgb(217,162,233)'/><circle cx='553.0' cy='236.1' r='1.12' fill='rgb(217,162,233)'/><circle cx='553.6' cy='239.4' r='1.11' fill='rgb(216,162,233)'/><circle cx='554.2' cy='242.8' r='1.11' fill='rgb(216,162,233)'/><circle cx='554.6' cy='246.2' r='1.10' fill='rgb(215,162,233)'/><circle cx='555.0' cy='249.6' r='1.09' fill='rgb(214,162,233)'/><circle cx='555.2' cy='253.0' r='1.08' fill='rgb(214,162,233)'/><circle cx='555.4' cy='256.4' r='1.07' fill='rgb(213,162,233)'/><circle cx='555.5' cy='259.8' r='1.06' fill='rgb(213,162,233)'/><circle cx='558.5' cy='261.5' r='1.05' fill='rgb(213,162,234)'/><circle cx='558.5' cy='264.9' r='1.05' fill='rgb(212,162,234)'/><circle cx='558.3' cy='268.3' r='1.04' fill='rgb(211,162,234)'/><circle cx='558.1' cy='271.7' r='1.03' fill='rgb(211,162,234)'/><circle cx='557.8' cy='275.1' r='1.02' fill='rgb(210,162,234)'/><circle cx='557.4' cy='278.5' r='1.01' fill='rgb(210,162,234)'/><circle cx='557.0' cy='281.9' r='1.00' fill='rgb(209,162,234)'/><circle cx='556.4' cy='285.2' r='0.99' fill='rgb(209,162,234)'/><circle cx='555.8' cy='288.6' r='0.99' fill='rgb(208,162,234)'/><circle cx='555.0' cy='291.9' r='0.98' fill='rgb(208,162,234)'/><circle cx='554.2' cy='295.2' r='0.97' fill='rgb(207,161,234)'/><circle cx='553.3' cy='298.5' r='0.96' fill='rgb(207,161,234)'/><circle cx='552.4' cy='301.8' r='0.95' fill='rgb(206,161,235)'/><circle cx='551.3' cy='305.0' r='0.95' fill='rgb(205,161,235)'/><circle cx='550.2' cy='308.2' r='0.94' fill='rgb(205,161,235)'/><circle cx='548.9' cy='311.4' r='0.94' fill='rgb(204,161,235)'/><circle cx='547.6' cy='314.5' r='0.93' fill='rgb(204,161,235)'/><circle cx='546.3' cy='317.7' r='0.92' fill='rgb(203,161,235)'/><circle cx='544.8' cy='320.7' r='0.92' fill='rgb(203,161,235)'/><circle cx='543.3' cy='323.8' r='0.91' fill='rgb(202,161,235)'/><circle cx='541.7' cy='326.8' r='0.91' fill='rgb(202,161,235)'/><circle cx='540.0' cy='329.7' r='0.91' fill='rgb(201,161,235)'/><circle cx='534.5' cy='338.4' r='0.90' fill='rgb(200,161,235)'/><circle cx='532.5' cy='341.1' r='0.89' fill='rgb(200,161,236)'/><circle cx='530.5' cy='343.9' r='0.89' fill='rgb(199,161,236)'/><circle cx='528.4' cy='346.5' r='0.89' fill='rgb(199,161,236)'/><circle cx='526.2' cy='349.1' r='0.89' fill='rgb(198,161,236)'/><circle cx='523.9' cy='351.7' r='0.89' fill='rgb(198,161,236)'/><circle cx='521.6' cy='354.2' r='0.89' fill='rgb(198,161,236)'/><circle cx='519.3' cy='356.7' r='0.89' fill='rgb(197,160,236)'/><circle cx='514.3' cy='361.4' r='0.89' fill='rgb(196,160,236)'/><circle cx='511.8' cy='363.6' r='0.89' fill='rgb(196,160,236)'/><circle cx='509.2' cy='365.8' r='0.90' fill='rgb(196,160,236)'/><circle cx='506.5' cy='368.0' r='0.90' fill='rgb(195,160,236)'/><circle cx='501.0' cy='372.0' r='0.91' fill='rgb(195,160,236)'/><circle cx='498.2' cy='373.9' r='0.91' fill='rgb(194,160,236)'/><circle cx='495.4' cy='375.8' r='0.92' fill='rgb(194,160,236)'/><circle cx='492.5' cy='377.6' r='0.92' fill='rgb(194,160,236)'/><circle cx='489.5' cy='379.3' r='0.93' fill='rgb(194,160,237)'/><circle cx='486.5' cy='380.9' r='0.93' fill='rgb(193,160,237)'/><circle cx='483.5' cy='382.4' r='0.94' fill='rgb(193,160,237)'/><circle cx='480.4' cy='383.9' r='0.94' fill='rgb(193,160,237)'/><circle cx='477.3' cy='385.3' r='0.95' fill='rgb(193,160,237)'/><circle cx='474.2' cy='386.6' r='0.96' fill='rgb(192,160,237)'/><circle cx='471.0' cy='387.9' r='0.96' fill='rgb(192,160,237)'/><circle cx='467.8' cy='389.0' r='0.97' fill='rgb(192,160,237)'/><circle cx='464.6' cy='390.1' r='0.98' fill='rgb(192,160,237)'/><circle cx='461.3' cy='391.1' r='0.99' fill='rgb(192,160,237)'/><circle cx='458.0' cy='392.0' r='1.00' fill='rgb(191,160,237)'/><circle cx='454.7' cy='392.8' r='1.00' fill='rgb(191,160,237)'/><circle cx='451.4' cy='393.6' r='1.01' fill='rgb(191,160,237)'/><circle cx='448.1' cy='394.2' r='1.02' fill='rgb(191,160,237)'/><circle cx='444.7' cy='394.8' r='1.03' fill='rgb(191,160,237)'/><circle cx='441.3' cy='395.3' r='1.04' fill='rgb(191,160,237)'/><circle cx='438.0' cy='395.7' r='1.05' fill='rgb(191,160,237)'/><circle cx='434.6' cy='396.0' r='1.06' fill='rgb(191,160,237)'/><circle cx='431.2' cy='396.3' r='1.07' fill='rgb(191,160,237)'/><circle cx='427.8' cy='396.4' r='1.07' fill='rgb(191,160,237)'/><circle cx='424.4' cy='396.5' r='1.08' fill='rgb(191,160,237)'/><circle cx='420.9' cy='396.5' r='1.09' fill='rgb(191,160,237)'/><circle cx='417.5' cy='396.4' r='1.10' fill='rgb(191,160,237)'/><circle cx='414.1' cy='396.2' r='1.11' fill='rgb(191,160,237)'/><circle cx='410.7' cy='395.9' r='1.12' fill='rgb(191,160,237)'/><circle cx='407.4' cy='395.5' r='1.13' fill='rgb(191,160,237)'/><circle cx='404.0' cy='395.1' r='1.14' fill='rgb(191,160,237)'/><circle cx='400.6' cy='394.5' r='1.14' fill='rgb(191,160,237)'/><circle cx='397.3' cy='393.9' r='1.15' fill='rgb(191,160,237)'/><circle cx='393.9' cy='393.2' r='1.16' fill='rgb(191,160,237)'/><circle cx='390.6' cy='392.4' r='1.17' fill='rgb(191,160,237)'/><circle cx='387.3' cy='391.6' r='1.18' fill='rgb(192,160,237)'/><circle cx='384.1' cy='390.6' r='1.18' fill='rgb(192,160,237)'/><circle cx='380.8' cy='389.6' r='1.19' fill='rgb(192,160,237)'/><circle cx='377.6' cy='388.5' r='1.20' fill='rgb(192,160,237)'/><circle cx='374.4' cy='387.3' r='1.20' fill='rgb(192,160,237)'/><circle cx='371.2' cy='386.0' r='1.21' fill='rgb(192,160,237)'/><circle cx='368.1' cy='384.6' r='1.21' fill='rgb(193,160,237)'/><circle cx='365.0' cy='383.2' r='1.22' fill='rgb(193,160,237)'/><circle cx='362.0' cy='381.7' r='1.22' fill='rgb(193,160,237)'/><circle cx='359.0' cy='380.1' r='1.23' fill='rgb(193,160,237)'/><circle cx='356.0' cy='378.4' r='1.23' fill='rgb(194,160,237)'/><circle cx='353.1' cy='376.7' r='1.24' fill='rgb(194,160,236)'/><circle cx='350.2' cy='374.9' r='1.24' fill='rgb(194,160,236)'/><circle cx='347.4' cy='373.0' r='1.24' fill='rgb(195,160,236)'/><circle cx='344.6' cy='371.0' r='1.25' fill='rgb(195,160,236)'/><circle cx='341.8' cy='369.0' r='1.25' fill='rgb(195,160,236)'/><circle cx='339.1' cy='366.9' r='1.25' fill='rgb(196,160,236)'/><circle cx='336.5' cy='364.7' r='1.25' fill='rgb(196,160,236)'/><circle cx='333.9' cy='362.5' r='1.25' fill='rgb(196,160,236)'/><circle cx='331.4' cy='360.2' r='1.25' fill='rgb(197,160,236)'/><circle cx='328.9' cy='357.9' r='1.25' fill='rgb(197,160,236)'/><circle cx='326.5' cy='355.4' r='1.25' fill='rgb(197,160,236)'/><circle cx='324.2' cy='353.0' r='1.25' fill='rgb(198,161,236)'/><circle cx='321.9' cy='350.4' r='1.25' fill='rgb(198,161,236)'/><circle cx='319.7' cy='347.8' r='1.24' fill='rgb(199,161,236)'/><circle cx='317.6' cy='345.2' r='1.24' fill='rgb(199,161,236)'/><circle cx='315.5' cy='342.5' r='1.24' fill='rgb(199,161,236)'/><circle cx='313.5' cy='339.7' r='1.23' fill='rgb(200,161,236)'/><circle cx='311.5' cy='336.9' r='1.23' fill='rgb(200,161,235)'/><circle cx='309.7' cy='334.1' r='1.23' fill='rgb(201,161,235)'/><circle cx='307.9' cy='331.2' r='1.22' fill='rgb(201,161,235)'/><circle cx='306.2' cy='328.3' r='1.22' fill='rgb(202,161,235)'/><circle cx='304.5' cy='325.3' r='1.21' fill='rgb(202,161,235)'/><circle cx='302.9' cy='322.3' r='1.20' fill='rgb(203,161,235)'/><circle cx='301.5' cy='319.2' r='1.20' fill='rgb(203,161,235)'/><circle cx='300.0' cy='316.1' r='1.19' fill='rgb(204,161,235)'/><circle cx='298.7' cy='313.0' r='1.19' fill='rgb(204,161,235)'/><circle cx='297.4' cy='309.8' r='1.18' fill='rgb(205,161,235)'/><circle cx='296.3' cy='306.6' r='1.17' fill='rgb(205,161,235)'/><circle cx='295.2' cy='303.4' r='1.16' fill='rgb(206,161,235)'/><circle cx='294.1' cy='300.1' r='1.16' fill='rgb(206,161,234)'/><circle cx='293.2' cy='296.9' r='1.15' fill='rgb(207,161,234)'/><circle cx='292.4' cy='293.6' r='1.14' fill='rgb(207,161,234)'/><circle cx='291.6' cy='290.2' r='1.13' fill='rgb(208,162,234)'/><circle cx='290.9' cy='286.9' r='1.12' fill='rgb(208,162,234)'/><circle cx='290.3' cy='283.5' r='1.11' fill='rgb(209,162,234)'/><circle cx='289.8' cy='280.2' r='1.10' fill='rgb(209,162,234)'/><circle cx='289.4' cy='276.8' r='1.10' fill='rgb(210,162,234)'/><circle cx='289.0' cy='273.4' r='1.09' fill='rgb(211,162,234)'/><circle cx='288.8' cy='270.0' r='1.08' fill='rgb(211,162,234)'/><circle cx='288.6' cy='266.6' r='1.07' fill='rgb(212,162,234)'/><circle cx='288.5' cy='263.2' r='1.06' fill='rgb(212,162,234)'/><circle cx='288.5' cy='259.8' r='1.05' fill='rgb(213,162,233)'/><circle cx='288.6' cy='256.4' r='1.04' fill='rgb(213,162,233)'/><circle cx='288.8' cy='253.0' r='1.03' fill='rgb(214,162,233)'/><circle cx='289.0' cy='249.6' r='1.02' fill='rgb(214,162,233)'/><circle cx='289.4' cy='246.2' r='1.01' fill='rgb(215,162,233)'/><circle cx='289.8' cy='242.8' r='1.01' fill='rgb(216,162,233)'/><circle cx='290.3' cy='239.5' r='1.00' fill='rgb(216,162,233)'/><circle cx='290.9' cy='236.1' r='0.99' fill='rgb(217,162,233)'/><circle cx='291.6' cy='232.8' r='0.98' fill='rgb(217,162,233)'/><circle cx='292.4' cy='229.4' r='0.97' fill='rgb(218,163,233)'/><circle cx='293.2' cy='226.1' r='0.97' fill='rgb(218,163,233)'/><circle cx='294.1' cy='222.9' r='0.96' fill='rgb(219,163,233)'/><circle cx='295.2' cy='219.6' r='0.95' fill='rgb(219,163,232)'/><circle cx='296.3' cy='216.4' r='0.94' fill='rgb(220,163,232)'/><circle cx='297.4' cy='213.2' r='0.94' fill='rgb(220,163,232)'/><circle cx='298.7' cy='210.0' r='0.93' fill='rgb(221,163,232)'/><circle cx='300.0' cy='206.9' r='0.93' fill='rgb(221,163,232)'/><circle cx='301.5' cy='203.8' r='0.92' fill='rgb(222,163,232)'/><circle cx='302.9' cy='200.7' r='0.92' fill='rgb(222,163,232)'/><circle cx='304.5' cy='197.7' r='0.91' fill='rgb(223,163,232)'/><circle cx='306.2' cy='194.7' r='0.91' fill='rgb(223,163,232)'/><circle cx='307.9' cy='191.8' r='0.90' fill='rgb(224,163,232)'/><circle cx='309.7' cy='188.9' r='0.90' fill='rgb(224,163,232)'/><circle cx='311.5' cy='186.1' r='0.90' fill='rgb(225,163,232)'/><circle cx='313.5' cy='183.3' r='0.90' fill='rgb(225,163,231)'/><circle cx='315.5' cy='180.5' r='0.89' fill='rgb(226,163,231)'/><circle cx='317.6' cy='177.8' r='0.89' fill='rgb(226,163,231)'/><circle cx='319.7' cy='175.2' r='0.89' fill='rgb(226,163,231)'/><circle cx='321.9' cy='172.6' r='0.89' fill='rgb(227,163,231)'/><circle cx='324.2' cy='170.0' r='0.89' fill='rgb(227,163,231)'/><circle cx='326.5' cy='167.6' r='0.89' fill='rgb(228,164,231)'/><circle cx='328.9' cy='165.1' r='0.89' fill='rgb(228,164,231)'/><circle cx='331.4' cy='162.8' r='0.89' fill='rgb(228,164,231)'/><circle cx='339.1' cy='156.1' r='0.90' fill='rgb(229,164,231)'/><circle cx='341.8' cy='154.0' r='0.90' fill='rgb(230,164,231)'/><circle cx='344.6' cy='152.0' r='0.90' fill='rgb(230,164,231)'/><circle cx='347.4' cy='150.0' r='0.91' fill='rgb(230,164,231)'/><circle cx='353.1' cy='146.3' r='0.92' fill='rgb(231,164,231)'/><circle cx='356.0' cy='144.6' r='0.92' fill='rgb(231,164,230)'/><circle cx='359.0' cy='142.9' r='0.93' fill='rgb(232,164,230)'/><circle cx='362.0' cy='141.3' r='0.93' fill='rgb(232,164,230)'/><circle cx='365.0' cy='139.8' r='0.94' fill='rgb(232,164,230)'/><circle cx='368.1' cy='138.4' r='0.95' fill='rgb(232,164,230)'/><circle cx='371.2' cy='137.0' r='0.95' fill='rgb(233,164,230)'/><circle cx='374.4' cy='135.7' r='0.96' fill='rgb(233,164,230)'/><circle cx='377.6' cy='134.5' r='0.97' fill='rgb(233,164,230)'/><circle cx='380.8' cy='133.4' r='0.98' fill='rgb(233,164,230)'/><circle cx='384.1' cy='132.4' r='0.98' fill='rgb(233,164,230)'/><circle cx='387.3' cy='131.4' r='0.99' fill='rgb(233,164,230)'/><circle cx='390.6' cy='130.6' r='1.00' fill='rgb(234,164,230)'/><circle cx='393.9' cy='129.8' r='1.01' fill='rgb(234,164,230)'/><circle cx='397.3' cy='129.1' r='1.02' fill='rgb(234,164,230)'/><circle cx='400.6' cy='128.5' r='1.02' fill='rgb(234,164,230)'/><circle cx='404.0' cy='127.9' r='1.03' fill='rgb(234,164,230)'/><circle cx='407.4' cy='127.5' r='1.04' fill='rgb(234,164,230)'/><circle cx='410.7' cy='127.1' r='1.05' fill='rgb(234,164,230)'/><circle cx='414.1' cy='126.8' r='1.06' fill='rgb(234,164,230)'/><circle cx='417.5' cy='126.6' r='1.07' fill='rgb(234,164,230)'/><circle cx='420.9' cy='126.5' r='1.08' fill='rgb(234,164,230)'/><circle cx='424.4' cy='126.5' r='1.09' fill='rgb(234,164,230)'/><circle cx='427.8' cy='126.6' r='1.10' fill='rgb(234,164,230)'/><circle cx='431.2' cy='126.7' r='1.11' fill='rgb(234,164,230)'/><circle cx='434.6' cy='127.0' r='1.11' fill='rgb(234,164,230)'/><circle cx='438.0' cy='127.3' r='1.12' fill='rgb(234,164,230)'/><circle cx='441.3' cy='127.7' r='1.13' fill='rgb(234,164,230)'/><circle cx='444.7' cy='128.2' r='1.14' fill='rgb(234,164,230)'/><circle cx='448.1' cy='128.8' r='1.15' fill='rgb(234,164,230)'/><circle cx='451.4' cy='129.4' r='1.16' fill='rgb(234,164,230)'/><circle cx='454.7' cy='130.2' r='1.16' fill='rgb(234,164,230)'/><circle cx='458.0' cy='131.0' r='1.17' fill='rgb(234,164,230)'/><circle cx='461.3' cy='131.9' r='1.18' fill='rgb(233,164,230)'/><circle cx='464.6' cy='132.9' r='1.19' fill='rgb(233,164,230)'/><circle cx='467.8' cy='134.0' r='1.19' fill='rgb(233,164,230)'/><circle cx='471.0' cy='135.1' r='1.20' fill='rgb(233,164,230)'/><circle cx='474.2' cy='136.4' r='1.21' fill='rgb(233,164,230)'/><circle cx='477.3' cy='137.7' r='1.21' fill='rgb(232,164,230)'/><circle cx='480.4' cy='139.1' r='1.22' fill='rgb(232,164,230)'/><circle cx='483.5' cy='140.6' r='1.22' fill='rgb(232,164,230)'/><circle cx='486.5' cy='142.1' r='1.23' fill='rgb(232,164,230)'/><circle cx='489.5' cy='143.7' r='1.23' fill='rgb(231,164,230)'/><circle cx='492.5' cy='145.4' r='1.24' fill='rgb(231,164,231)'/><circle cx='495.4' cy='147.2' r='1.24' fill='rgb(231,164,231)'/><circle cx='498.2' cy='149.1' r='1.24' fill='rgb(231,164,231)'/><circle cx='501.0' cy='151.0' r='1.24' fill='rgb(230,164,231)'/><circle cx='503.8' cy='153.0' r='1.25' fill='rgb(230,164,231)'/><circle cx='506.5' cy='155.0' r='1.25' fill='rgb(230,164,231)'/><circle cx='509.2' cy='157.2' r='1.25' fill='rgb(229,164,231)'/><circle cx='511.8' cy='159.4' r='1.25' fill='rgb(229,164,231)'/><circle cx='514.3' cy='161.6' r='1.25' fill='rgb(229,164,231)'/><circle cx='516.8' cy='164.0' r='1.25' fill='rgb(228,164,231)'/><circle cx='519.3' cy='166.3' r='1.25' fill='rgb(228,164,231)'/><circle cx='521.6' cy='168.8' r='1.25' fill='rgb(227,163,231)'/><circle cx='523.9' cy='171.3' r='1.25' fill='rgb(227,163,231)'/><circle cx='526.2' cy='173.9' r='1.24' fill='rgb(227,163,231)'/><circle cx='528.4' cy='176.5' r='1.24' fill='rgb(226,163,231)'/><circle cx='530.5' cy='179.1' r='1.24' fill='rgb(226,163,231)'/><circle cx='532.5' cy='181.9' r='1.24' fill='rgb(225,163,231)'/><circle cx='534.5' cy='184.6' r='1.23' fill='rgb(225,163,232)'/><circle cx='536.4' cy='187.5' r='1.23' fill='rgb(224,163,232)'/><circle cx='538.2' cy='190.3' r='1.22' fill='rgb(224,163,232)'/><circle cx='540.0' cy='193.3' r='1.22' fill='rgb(224,163,232)'/><circle cx='541.7' cy='196.2' r='1.21' fill='rgb(223,163,232)'/><circle cx='543.3' cy='199.2' r='1.21' fill='rgb(223,163,232)'/><circle cx='544.8' cy='202.3' r='1.20' fill='rgb(222,163,232)'/><circle cx='546.3' cy='205.3' r='1.20' fill='rgb(222,163,232)'/><circle cx='547.6' cy='208.5' r='1.19' fill='rgb(221,163,232)'/><circle cx='548.9' cy='211.6' r='1.18' fill='rgb(221,163,232)'/><circle cx='550.2' cy='214.8' r='1.17' fill='rgb(220,163,232)'/><circle cx='551.3' cy='218.0' r='1.17' fill='rgb(220,163,232)'/><circle cx='552.4' cy='221.2' r='1.16' fill='rgb(219,163,232)'/><circle cx='553.3' cy='224.5' r='1.15' fill='rgb(218,163,233)'/><circle cx='554.2' cy='227.8' r='1.14' fill='rgb(218,163,233)'/><circle cx='555.0' cy='231.1' r='1.13' fill='rgb(217,162,233)'/><circle cx='555.8' cy='234.4' r='1.13' fill='rgb(217,162,233)'/><circle cx='556.4' cy='237.8' r='1.12' fill='rgb(216,162,233)'/><circle cx='557.0' cy='241.1' r='1.11' fill='rgb(216,162,233)'/><circle cx='557.4' cy='244.5' r='1.10' fill='rgb(215,162,233)'/><circle cx='557.8' cy='247.9' r='1.09' fill='rgb(215,162,233)'/><circle cx='558.1' cy='251.3' r='1.08' fill='rgb(214,162,233)'/><circle cx='558.3' cy='254.7' r='1.07' fill='rgb(214,162,233)'/><circle cx='558.5' cy='258.1' r='1.06' fill='rgb(213,162,233)'/><circle cx='561.5' cy='263.2' r='0.97' fill='rgb(212,162,234)'/><circle cx='561.4' cy='266.6' r='0.96' fill='rgb(212,162,234)'/><circle cx='561.2' cy='270.0' r='0.96' fill='rgb(211,162,234)'/><circle cx='561.0' cy='273.4' r='0.95' fill='rgb(211,162,234)'/><circle cx='560.7' cy='276.8' r='0.94' fill='rgb(210,162,234)'/><circle cx='560.2' cy='280.1' r='0.93' fill='rgb(209,162,234)'/><circle cx='559.7' cy='283.5' r='0.93' fill='rgb(209,162,234)'/><circle cx='559.2' cy='286.9' r='0.92' fill='rgb(208,162,234)'/><circle cx='558.5' cy='290.2' r='0.91' fill='rgb(208,162,234)'/><circle cx='556.9' cy='296.8' r='0.90' fill='rgb(207,161,234)'/><circle cx='556.0' cy='300.1' r='0.89' fill='rgb(206,161,234)'/><circle cx='555.0' cy='303.3' r='0.89' fill='rgb(206,161,235)'/><circle cx='553.9' cy='306.6' r='0.88' fill='rgb(205,161,235)'/><circle cx='550.3' cy='316.1' r='0.87' fill='rgb(204,161,235)'/><circle cx='548.9' cy='319.2' r='0.86' fill='rgb(203,161,235)'/><circle cx='547.4' cy='322.2' r='0.86' fill='rgb(203,161,235)'/><circle cx='544.3' cy='328.3' r='0.85' fill='rgb(202,161,235)'/><circle cx='539.0' cy='337.0' r='0.84' fill='rgb(200,161,235)'/><circle cx='537.1' cy='339.8' r='0.84' fill='rgb(200,161,236)'/><circle cx='535.1' cy='342.6' r='0.84' fill='rgb(199,161,236)'/><circle cx='531.0' cy='348.0' r='0.83' fill='rgb(199,161,236)'/><circle cx='526.6' cy='353.2' r='0.83' fill='rgb(198,161,236)'/><circle cx='519.6' cy='360.6' r='0.83' fill='rgb(197,160,236)'/><circle cx='514.6' cy='365.2' r='0.84' fill='rgb(196,160,236)'/><circle cx='512.0' cy='367.4' r='0.84' fill='rgb(195,160,236)'/><circle cx='509.4' cy='369.5' r='0.84' fill='rgb(195,160,236)'/><circle cx='498.3' cy='377.5' r='0.85' fill='rgb(194,160,236)'/><circle cx='492.5' cy='381.0' r='0.86' fill='rgb(193,160,237)'/><circle cx='489.5' cy='382.7' r='0.87' fill='rgb(193,160,237)'/><circle cx='486.5' cy='384.3' r='0.87' fill='rgb(193,160,237)'/><circle cx='483.5' cy='385.8' r='0.88' fill='rgb(192,160,237)'/><circle cx='480.4' cy='387.2' r='0.88' fill='rgb(192,160,237)'/><circle cx='477.3' cy='388.6' r='0.89' fill='rgb(192,160,237)'/><circle cx='474.1' cy='389.9' r='0.89' fill='rgb(192,160,237)'/><circle cx='471.0' cy='391.1' r='0.90' fill='rgb(192,160,237)'/><circle cx='467.8' cy='392.2' r='0.91' fill='rgb(191,160,237)'/><circle cx='464.5' cy='393.3' r='0.91' fill='rgb(191,160,237)'/><circle cx='458.0' cy='395.1' r='0.93' fill='rgb(191,160,237)'/><circle cx='454.7' cy='395.9' r='0.93' fill='rgb(191,160,237)'/><circle cx='451.4' cy='396.7' r='0.94' fill='rgb(191,160,237)'/><circle cx='448.0' cy='397.3' r='0.95' fill='rgb(191,160,237)'/><circle cx='444.7' cy='397.9' r='0.95' fill='rgb(191,160,237)'/><circle cx='441.3' cy='398.3' r='0.96' fill='rgb(190,160,237)'/><circle cx='437.9' cy='398.7' r='0.97' fill='rgb(190,160,237)'/><circle cx='434.5' cy='399.1' r='0.98' fill='rgb(190,160,237)'/><circle cx='431.1' cy='399.3' r='0.99' fill='rgb(190,160,237)'/><circle cx='427.7' cy='399.4' r='0.99' fill='rgb(190,160,237)'/><circle cx='424.4' cy='399.5' r='1.00' fill='rgb(190,160,237)'/><circle cx='420.9' cy='399.5' r='1.01' fill='rgb(190,160,237)'/><circle cx='417.6' cy='399.4' r='1.02' fill='rgb(190,160,237)'/><circle cx='414.2' cy='399.2' r='1.02' fill='rgb(190,160,237)'/><circle cx='410.8' cy='398.9' r='1.03' fill='rgb(190,160,237)'/><circle cx='407.4' cy='398.6' r='1.04' fill='rgb(190,160,237)'/><circle cx='404.0' cy='398.1' r='1.05' fill='rgb(190,160,237)'/><circle cx='400.7' cy='397.6' r='1.05' fill='rgb(191,160,237)'/><circle cx='397.3' cy='397.0' r='1.06' fill='rgb(191,160,237)'/><circle cx='394.0' cy='396.3' r='1.07' fill='rgb(191,160,237)'/><circle cx='390.7' cy='395.5' r='1.07' fill='rgb(191,160,237)'/><circle cx='387.4' cy='394.7' r='1.08' fill='rgb(191,160,237)'/><circle cx='384.1' cy='393.8' r='1.09' fill='rgb(191,160,237)'/><circle cx='380.9' cy='392.7' r='1.09' fill='rgb(191,160,237)'/><circle cx='377.6' cy='391.7' r='1.10' fill='rgb(192,160,237)'/><circle cx='374.4' cy='390.5' r='1.10' fill='rgb(192,160,237)'/><circle cx='371.3' cy='389.2' r='1.11' fill='rgb(192,160,237)'/><circle cx='368.1' cy='387.9' r='1.11' fill='rgb(192,160,237)'/><circle cx='365.1' cy='386.5' r='1.12' fill='rgb(192,160,237)'/><circle cx='362.0' cy='385.0' r='1.12' fill='rgb(193,160,237)'/><circle cx='359.0' cy='383.5' r='1.13' fill='rgb(193,160,237)'/><circle cx='356.0' cy='381.9' r='1.13' fill='rgb(193,160,237)'/><circle cx='353.0' cy='380.2' r='1.13' fill='rgb(193,160,237)'/><circle cx='350.1' cy='378.4' r='1.14' fill='rgb(194,160,237)'/><circle cx='347.3' cy='376.5' r='1.14' fill='rgb(194,160,236)'/><circle cx='344.5' cy='374.6' r='1.14' fill='rgb(194,160,236)'/><circle cx='341.7' cy='372.6' r='1.14' fill='rgb(195,160,236)'/><circle cx='339.0' cy='370.6' r='1.14' fill='rgb(195,160,236)'/><circle cx='336.3' cy='368.5' r='1.14' fill='rgb(195,160,236)'/><circle cx='333.7' cy='366.3' r='1.15' fill='rgb(196,160,236)'/><circle cx='331.2' cy='364.1' r='1.15' fill='rgb(196,160,236)'/><circle cx='328.7' cy='361.7' r='1.15' fill='rgb(196,160,236)'/><circle cx='326.2' cy='359.4' r='1.15' fill='rgb(197,160,236)'/><circle cx='323.8' cy='357.0' r='1.14' fill='rgb(197,160,236)'/><circle cx='321.5' cy='354.5' r='1.14' fill='rgb(198,161,236)'/><circle cx='319.3' cy='351.9' r='1.14' fill='rgb(198,161,236)'/><circle cx='317.1' cy='349.3' r='1.14' fill='rgb(198,161,236)'/><circle cx='314.9' cy='346.7' r='1.14' fill='rgb(199,161,236)'/><circle cx='312.9' cy='344.0' r='1.13' fill='rgb(199,161,236)'/><circle cx='310.9' cy='341.2' r='1.13' fill='rgb(200,161,236)'/><circle cx='308.9' cy='338.4' r='1.13' fill='rgb(200,161,235)'/><circle cx='307.1' cy='335.6' r='1.12' fill='rgb(201,161,235)'/><circle cx='305.3' cy='332.7' r='1.12' fill='rgb(201,161,235)'/><circle cx='303.6' cy='329.8' r='1.12' fill='rgb(201,161,235)'/><circle cx='301.9' cy='326.8' r='1.11' fill='rgb(202,161,235)'/><circle cx='300.3' cy='323.8' r='1.11' fill='rgb(202,161,235)'/><circle cx='298.9' cy='320.7' r='1.10' fill='rgb(203,161,235)'/><circle cx='297.4' cy='317.6' r='1.10' fill='rgb(203,161,235)'/><circle cx='296.1' cy='314.5' r='1.09' fill='rgb(204,161,235)'/><circle cx='294.8' cy='311.4' r='1.08' fill='rgb(204,161,235)'/><circle cx='293.6' cy='308.2' r='1.08' fill='rgb(205,161,235)'/><circle cx='292.5' cy='305.0' r='1.07' fill='rgb(205,161,235)'/><circle cx='291.5' cy='301.7' r='1.06' fill='rgb(206,161,235)'/><circle cx='290.5' cy='298.4' r='1.06' fill='rgb(207,161,234)'/><circle cx='289.7' cy='295.2' r='1.05' fill='rgb(207,161,234)'/><circle cx='288.9' cy='291.9' r='1.04' fill='rgb(208,162,234)'/><circle cx='288.2' cy='288.5' r='1.04' fill='rgb(208,162,234)'/><circle cx='287.5' cy='285.2' r='1.03' fill='rgb(209,162,234)'/><circle cx='287.0' cy='281.8' r='1.02' fill='rgb(209,162,234)'/><circle cx='286.5' cy='278.5' r='1.01' fill='rgb(210,162,234)'/><circle cx='286.2' cy='275.1' r='1.01' fill='rgb(210,162,234)'/><circle cx='285.9' cy='271.7' r='1.00' fill='rgb(211,162,234)'/><circle cx='285.7' cy='268.3' r='0.99' fill='rgb(211,162,234)'/><circle cx='285.5' cy='264.9' r='0.98' fill='rgb(212,162,234)'/><circle cx='285.5' cy='261.5' r='0.98' fill='rgb(213,162,234)'/><circle cx='285.5' cy='258.1' r='0.97' fill='rgb(213,162,233)'/><circle cx='285.7' cy='254.7' r='0.96' fill='rgb(214,162,233)'/><circle cx='285.9' cy='251.3' r='0.95' fill='rgb(214,162,233)'/><circle cx='286.2' cy='247.9' r='0.95' fill='rgb(215,162,233)'/><circle cx='286.5' cy='244.5' r='0.94' fill='rgb(215,162,233)'/><circle cx='287.0' cy='241.2' r='0.93' fill='rgb(216,162,233)'/><circle cx='287.5' cy='237.8' r='0.92' fill='rgb(216,162,233)'/><circle cx='288.2' cy='234.5' r='0.92' fill='rgb(217,162,233)'/><circle cx='288.9' cy='231.1' r='0.91' fill='rgb(217,162,233)'/><circle cx='289.7' cy='227.8' r='0.90' fill='rgb(218,163,233)'/><circle cx='290.5' cy='224.6' r='0.90' fill='rgb(218,163,233)'/><circle cx='292.5' cy='218.0' r='0.88' fill='rgb(220,163,232)'/><circle cx='293.6' cy='214.8' r='0.88' fill='rgb(220,163,232)'/><circle cx='296.1' cy='208.5' r='0.87' fill='rgb(221,163,232)'/><circle cx='301.9' cy='196.2' r='0.85' fill='rgb(223,163,232)'/><circle cx='303.6' cy='193.2' r='0.85' fill='rgb(224,163,232)'/><circle cx='310.9' cy='181.8' r='0.84' fill='rgb(225,163,231)'/><circle cx='319.3' cy='171.1' r='0.83' fill='rgb(227,163,231)'/><circle cx='321.5' cy='168.5' r='0.83' fill='rgb(227,163,231)'/><circle cx='331.2' cy='158.9' r='0.84' fill='rgb(229,164,231)'/><circle cx='333.7' cy='156.7' r='0.84' fill='rgb(229,164,231)'/><circle cx='341.7' cy='150.4' r='0.84' fill='rgb(230,164,231)'/><circle cx='344.5' cy='148.4' r='0.85' fill='rgb(231,164,231)'/><circle cx='353.0' cy='142.8' r='0.86' fill='rgb(232,164,230)'/><circle cx='356.0' cy='141.1' r='0.86' fill='rgb(232,164,230)'/><circle cx='359.0' cy='139.5' r='0.87' fill='rgb(232,164,230)'/><circle cx='362.0' cy='138.0' r='0.87' fill='rgb(232,164,230)'/><circle cx='365.1' cy='136.5' r='0.88' fill='rgb(233,164,230)'/><circle cx='368.1' cy='135.1' r='0.88' fill='rgb(233,164,230)'/><circle cx='371.3' cy='133.8' r='0.89' fill='rgb(233,164,230)'/><circle cx='374.4' cy='132.5' r='0.90' fill='rgb(233,164,230)'/><circle cx='377.6' cy='131.3' r='0.90' fill='rgb(233,164,230)'/><circle cx='380.9' cy='130.3' r='0.91' fill='rgb(234,164,230)'/><circle cx='384.1' cy='129.2' r='0.92' fill='rgb(234,164,230)'/><circle cx='390.7' cy='127.5' r='0.93' fill='rgb(234,164,230)'/><circle cx='394.0' cy='126.7' r='0.94' fill='rgb(234,164,230)'/><circle cx='397.3' cy='126.0' r='0.94' fill='rgb(234,164,230)'/><circle cx='400.7' cy='125.4' r='0.95' fill='rgb(234,164,230)'/><circle cx='404.0' cy='124.9' r='0.96' fill='rgb(235,164,230)'/><circle cx='407.4' cy='124.4' r='0.97' fill='rgb(235,164,230)'/><circle cx='410.8' cy='124.1' r='0.97' fill='rgb(235,164,230)'/><circle cx='414.2' cy='123.8' r='0.98' fill='rgb(235,164,230)'/><circle cx='417.6' cy='123.6' r='0.99' fill='rgb(235,164,230)'/><circle cx='420.9' cy='123.5' r='1.00' fill='rgb(235,164,230)'/><circle cx='424.4' cy='123.5' r='1.00' fill='rgb(235,164,230)'/><circle cx='427.7' cy='123.6' r='1.01' fill='rgb(235,164,230)'/><circle cx='431.1' cy='123.7' r='1.02' fill='rgb(235,164,230)'/><circle cx='434.5' cy='123.9' r='1.03' fill='rgb(235,164,230)'/><circle cx='437.9' cy='124.3' r='1.03' fill='rgb(235,164,230)'/><circle cx='441.3' cy='124.7' r='1.04' fill='rgb(235,164,230)'/><circle cx='444.7' cy='125.1' r='1.05' fill='rgb(234,164,230)'/><circle cx='448.0' cy='125.7' r='1.06' fill='rgb(234,164,230)'/><circle cx='451.4' cy='126.3' r='1.06' fill='rgb(234,164,230)'/><circle cx='454.7' cy='127.1' r='1.07' fill='rgb(234,164,230)'/><circle cx='458.0' cy='127.9' r='1.08' fill='rgb(234,164,230)'/><circle cx='461.3' cy='128.8' r='1.08' fill='rgb(234,164,230)'/><circle cx='464.5' cy='129.7' r='1.09' fill='rgb(234,164,230)'/><circle cx='467.8' cy='130.8' r='1.09' fill='rgb(234,164,230)'/><circle cx='471.0' cy='131.9' r='1.10' fill='rgb(233,164,230)'/><circle cx='474.1' cy='133.1' r='1.11' fill='rgb(233,164,230)'/><circle cx='477.3' cy='134.4' r='1.11' fill='rgb(233,164,230)'/><circle cx='480.4' cy='135.8' r='1.12' fill='rgb(233,164,230)'/><circle cx='483.5' cy='137.2' r='1.12' fill='rgb(233,164,230)'/><circle cx='486.5' cy='138.7' r='1.12' fill='rgb(232,164,230)'/><circle cx='489.5' cy='140.3' r='1.13' fill='rgb(232,164,230)'/><circle cx='492.5' cy='142.0' r='1.13' fill='rgb(232,164,230)'/><circle cx='495.4' cy='143.7' r='1.13' fill='rgb(231,164,230)'/><circle cx='498.3' cy='145.5' r='1.14' fill='rgb(231,164,231)'/><circle cx='501.1' cy='147.4' r='1.14' fill='rgb(231,164,231)'/><circle cx='503.9' cy='149.4' r='1.14' fill='rgb(231,164,231)'/><circle cx='506.7' cy='151.4' r='1.14' fill='rgb(230,164,231)'/><circle cx='509.4' cy='153.5' r='1.14' fill='rgb(230,164,231)'/><circle cx='512.0' cy='155.6' r='1.15' fill='rgb(230,164,231)'/><circle cx='514.6' cy='157.8' r='1.15' fill='rgb(229,164,231)'/><circle cx='517.1' cy='160.1' r='1.15' fill='rgb(229,164,231)'/><circle cx='519.6' cy='162.4' r='1.15' fill='rgb(228,164,231)'/><circle cx='522.0' cy='164.8' r='1.14' fill='rgb(228,164,231)'/><circle cx='524.3' cy='167.3' r='1.14' fill='rgb(228,164,231)'/><circle cx='526.6' cy='169.8' r='1.14' fill='rgb(227,163,231)'/><circle cx='528.8' cy='172.4' r='1.14' fill='rgb(227,163,231)'/><circle cx='531.0' cy='175.0' r='1.14' fill='rgb(226,163,231)'/><circle cx='533.1' cy='177.7' r='1.14' fill='rgb(226,163,231)'/><circle cx='535.1' cy='180.4' r='1.13' fill='rgb(226,163,231)'/><circle cx='537.1' cy='183.2' r='1.13' fill='rgb(225,163,231)'/><circle cx='539.0' cy='186.0' r='1.13' fill='rgb(225,163,232)'/><circle cx='540.8' cy='188.9' r='1.12' fill='rgb(224,163,232)'/><circle cx='542.6' cy='191.8' r='1.12' fill='rgb(224,163,232)'/><circle cx='544.3' cy='194.7' r='1.11' fill='rgb(223,163,232)'/><circle cx='545.9' cy='197.7' r='1.11' fill='rgb(223,163,232)'/><circle cx='547.4' cy='200.8' r='1.10' fill='rgb(222,163,232)'/><circle cx='548.9' cy='203.8' r='1.10' fill='rgb(222,163,232)'/><circle cx='550.3' cy='206.9' r='1.09' fill='rgb(221,163,232)'/><circle cx='551.6' cy='210.1' r='1.09' fill='rgb(221,163,232)'/><circle cx='552.8' cy='213.2' r='1.08' fill='rgb(220,163,232)'/><circle cx='553.9' cy='216.4' r='1.07' fill='rgb(220,163,232)'/><circle cx='555.0' cy='219.7' r='1.07' fill='rgb(219,163,232)'/><circle cx='556.0' cy='222.9' r='1.06' fill='rgb(219,163,233)'/><circle cx='556.9' cy='226.2' r='1.05' fill='rgb(218,163,233)'/><circle cx='557.7' cy='229.5' r='1.05' fill='rgb(218,163,233)'/><circle cx='558.5' cy='232.8' r='1.04' fill='rgb(217,162,233)'/><circle cx='559.2' cy='236.1' r='1.03' fill='rgb(217,162,233)'/><circle cx='559.7' cy='239.5' r='1.03' fill='rgb(216,162,233)'/><circle cx='560.2' cy='242.9' r='1.02' fill='rgb(216,162,233)'/><circle cx='560.7' cy='246.2' r='1.01' fill='rgb(215,162,233)'/><circle cx='561.0' cy='249.6' r='1.00' fill='rgb(214,162,233)'/><circle cx='561.2' cy='253.0' r='0.99' fill='rgb(214,162,233)'/><circle cx='561.4' cy='256.4' r='0.99' fill='rgb(213,162,233)'/><circle cx='561.5' cy='259.8' r='0.98' fill='rgb(213,162,233)'/><circle cx='564.3' cy='268.3' r='0.88' fill='rgb(211,162,234)'/><circle cx='563.8' cy='275.1' r='0.87' fill='rgb(210,162,234)'/><circle cx='563.5' cy='278.5' r='0.87' fill='rgb(210,162,234)'/><circle cx='562.5' cy='285.2' r='0.85' fill='rgb(209,162,234)'/><circle cx='561.2' cy='291.9' r='0.84' fill='rgb(208,162,234)'/><circle cx='560.4' cy='295.2' r='0.84' fill='rgb(207,161,234)'/><circle cx='559.5' cy='298.5' r='0.83' fill='rgb(207,161,234)'/><circle cx='557.6' cy='305.1' r='0.82' fill='rgb(205,161,235)'/><circle cx='555.3' cy='311.5' r='0.81' fill='rgb(204,161,235)'/><circle cx='552.8' cy='317.8' r='0.80' fill='rgb(203,161,235)'/><circle cx='551.4' cy='320.9' r='0.80' fill='rgb(203,161,235)'/><circle cx='549.9' cy='324.0' r='0.80' fill='rgb(202,161,235)'/><circle cx='548.3' cy='327.0' r='0.79' fill='rgb(202,161,235)'/><circle cx='545.0' cy='333.0' r='0.79' fill='rgb(201,161,235)'/><circle cx='541.4' cy='338.8' r='0.78' fill='rgb(200,161,235)'/><circle cx='539.5' cy='341.6' r='0.78' fill='rgb(200,161,236)'/><circle cx='535.5' cy='347.1' r='0.78' fill='rgb(199,161,236)'/><circle cx='533.4' cy='349.8' r='0.78' fill='rgb(198,161,236)'/><circle cx='526.7' cy='357.5' r='0.78' fill='rgb(197,160,236)'/><circle cx='522.0' cy='362.4' r='0.78' fill='rgb(196,160,236)'/><circle cx='517.0' cy='367.0' r='0.78' fill='rgb(195,160,236)'/><circle cx='509.1' cy='373.5' r='0.78' fill='rgb(194,160,236)'/><circle cx='486.0' cy='387.9' r='0.81' fill='rgb(192,160,237)'/><circle cx='482.9' cy='389.4' r='0.81' fill='rgb(192,160,237)'/><circle cx='479.8' cy='390.8' r='0.82' fill='rgb(192,160,237)'/><circle cx='473.5' cy='393.3' r='0.83' fill='rgb(191,160,237)'/><circle cx='467.1' cy='395.6' r='0.84' fill='rgb(191,160,237)'/><circle cx='463.8' cy='396.6' r='0.85' fill='rgb(191,160,237)'/><circle cx='460.5' cy='397.5' r='0.85' fill='rgb(191,160,237)'/><circle cx='457.2' cy='398.4' r='0.86' fill='rgb(190,160,237)'/><circle cx='453.9' cy='399.2' r='0.86' fill='rgb(190,160,237)'/><circle cx='450.6' cy='399.9' r='0.87' fill='rgb(190,160,237)'/><circle cx='447.2' cy='400.5' r='0.88' fill='rgb(190,160,237)'/><circle cx='440.5' cy='401.5' r='0.89' fill='rgb(190,160,237)'/><circle cx='437.1' cy='401.8' r='0.89' fill='rgb(190,160,237)'/><circle cx='433.7' cy='402.1' r='0.90' fill='rgb(190,160,237)'/><circle cx='430.3' cy='402.3' r='0.91' fill='rgb(190,160,237)'/><circle cx='426.9' cy='402.5' r='0.91' fill='rgb(190,160,237)'/><circle cx='423.5' cy='402.5' r='0.92' fill='rgb(190,160,237)'/><circle cx='420.1' cy='402.5' r='0.93' fill='rgb(190,160,237)'/><circle cx='416.7' cy='402.3' r='0.93' fill='rgb(190,160,237)'/><circle cx='413.3' cy='402.1' r='0.94' fill='rgb(190,160,237)'/><circle cx='409.9' cy='401.8' r='0.95' fill='rgb(190,160,237)'/><circle cx='406.5' cy='401.5' r='0.95' fill='rgb(190,160,237)'/><circle cx='403.1' cy='401.0' r='0.96' fill='rgb(190,160,237)'/><circle cx='399.8' cy='400.5' r='0.96' fill='rgb(190,160,237)'/><circle cx='396.4' cy='399.9' r='0.97' fill='rgb(190,160,237)'/><circle cx='393.1' cy='399.2' r='0.97' fill='rgb(190,160,237)'/><circle cx='389.8' cy='398.4' r='0.98' fill='rgb(190,160,237)'/><circle cx='386.5' cy='397.5' r='0.99' fill='rgb(191,160,237)'/><circle cx='383.2' cy='396.6' r='0.99' fill='rgb(191,160,237)'/><circle cx='379.9' cy='395.6' r='1.00' fill='rgb(191,160,237)'/><circle cx='376.7' cy='394.5' r='1.00' fill='rgb(191,160,237)'/><circle cx='373.5' cy='393.3' r='1.00' fill='rgb(191,160,237)'/><circle cx='370.3' cy='392.1' r='1.01' fill='rgb(191,160,237)'/><circle cx='367.2' cy='390.8' r='1.01' fill='rgb(192,160,237)'/><circle cx='364.1' cy='389.4' r='1.02' fill='rgb(192,160,237)'/><circle cx='361.0' cy='387.9' r='1.02' fill='rgb(192,160,237)'/><circle cx='358.0' cy='386.3' r='1.02' fill='rgb(192,160,237)'/><circle cx='355.0' cy='384.7' r='1.03' fill='rgb(193,160,237)'/><circle cx='352.0' cy='383.0' r='1.03' fill='rgb(193,160,237)'/><circle cx='349.1' cy='381.3' r='1.03' fill='rgb(193,160,237)'/><circle cx='346.2' cy='379.4' r='1.03' fill='rgb(193,160,237)'/><circle cx='343.4' cy='377.5' r='1.04' fill='rgb(194,160,236)'/><circle cx='340.6' cy='375.6' r='1.04' fill='rgb(194,160,236)'/><circle cx='337.9' cy='373.5' r='1.04' fill='rgb(194,160,236)'/><circle cx='335.2' cy='371.4' r='1.04' fill='rgb(195,160,236)'/><circle cx='332.6' cy='369.3' r='1.04' fill='rgb(195,160,236)'/><circle cx='330.0' cy='367.0' r='1.04' fill='rgb(195,160,236)'/><circle cx='327.5' cy='364.7' r='1.04' fill='rgb(196,160,236)'/><circle cx='325.0' cy='362.4' r='1.04' fill='rgb(196,160,236)'/><circle cx='322.6' cy='360.0' r='1.04' fill='rgb(197,160,236)'/><circle cx='320.3' cy='357.5' r='1.04' fill='rgb(197,160,236)'/><circle cx='318.0' cy='355.0' r='1.04' fill='rgb(197,160,236)'/><circle cx='315.7' cy='352.4' r='1.04' fill='rgb(198,161,236)'/><circle cx='313.6' cy='349.8' r='1.04' fill='rgb(198,161,236)'/><circle cx='311.5' cy='347.1' r='1.03' fill='rgb(199,161,236)'/><circle cx='309.4' cy='344.4' r='1.03' fill='rgb(199,161,236)'/><circle cx='307.5' cy='341.6' r='1.03' fill='rgb(200,161,236)'/><circle cx='305.6' cy='338.8' r='1.03' fill='rgb(200,161,235)'/><circle cx='303.7' cy='335.9' r='1.02' fill='rgb(201,161,235)'/><circle cx='302.0' cy='333.0' r='1.02' fill='rgb(201,161,235)'/><circle cx='300.3' cy='330.0' r='1.01' fill='rgb(201,161,235)'/><circle cx='298.7' cy='327.0' r='1.01' fill='rgb(202,161,235)'/><circle cx='297.1' cy='324.0' r='1.01' fill='rgb(202,161,235)'/><circle cx='295.6' cy='320.9' r='1.00' fill='rgb(203,161,235)'/><circle cx='294.2' cy='317.8' r='1.00' fill='rgb(203,161,235)'/><circle cx='292.9' cy='314.7' r='0.99' fill='rgb(204,161,235)'/><circle cx='291.7' cy='311.5' r='0.99' fill='rgb(204,161,235)'/><circle cx='290.5' cy='308.3' r='0.98' fill='rgb(205,161,235)'/><circle cx='289.4' cy='305.1' r='0.98' fill='rgb(205,161,235)'/><circle cx='288.4' cy='301.8' r='0.97' fill='rgb(206,161,235)'/><circle cx='287.5' cy='298.5' r='0.97' fill='rgb(207,161,234)'/><circle cx='286.6' cy='295.2' r='0.96' fill='rgb(207,161,234)'/><circle cx='285.8' cy='291.9' r='0.95' fill='rgb(208,162,234)'/><circle cx='285.1' cy='288.6' r='0.95' fill='rgb(208,162,234)'/><circle cx='284.5' cy='285.2' r='0.94' fill='rgb(209,162,234)'/><circle cx='284.0' cy='281.9' r='0.94' fill='rgb(209,162,234)'/><circle cx='283.5' cy='278.5' r='0.93' fill='rgb(210,162,234)'/><circle cx='283.2' cy='275.1' r='0.92' fill='rgb(210,162,234)'/><circle cx='282.7' cy='268.3' r='0.91' fill='rgb(211,162,234)'/><circle cx='282.5' cy='264.9' r='0.90' fill='rgb(212,162,234)'/><circle cx='282.5' cy='261.5' r='0.90' fill='rgb(213,162,234)'/><circle cx='282.5' cy='258.1' r='0.89' fill='rgb(213,162,233)'/><circle cx='282.7' cy='254.7' r='0.88' fill='rgb(214,162,233)'/><circle cx='282.9' cy='251.3' r='0.88' fill='rgb(214,162,233)'/><circle cx='283.2' cy='247.9' r='0.87' fill='rgb(215,162,233)'/><circle cx='283.5' cy='244.5' r='0.87' fill='rgb(215,162,233)'/><circle cx='286.6' cy='227.8' r='0.84' fill='rgb(218,163,233)'/><circle cx='287.5' cy='224.5' r='0.83' fill='rgb(218,163,233)'/><circle cx='288.4' cy='221.2' r='0.83' fill='rgb(219,163,232)'/><circle cx='290.5' cy='214.7' r='0.82' fill='rgb(220,163,232)'/><circle cx='291.7' cy='211.5' r='0.81' fill='rgb(221,163,232)'/><circle cx='294.2' cy='205.2' r='0.80' fill='rgb(222,163,232)'/><circle cx='305.6' cy='184.2' r='0.78' fill='rgb(225,163,232)'/><circle cx='307.5' cy='181.4' r='0.78' fill='rgb(225,163,231)'/><circle cx='309.4' cy='178.6' r='0.78' fill='rgb(226,163,231)'/><circle cx='311.5' cy='175.9' r='0.78' fill='rgb(226,163,231)'/><circle cx='320.3' cy='165.5' r='0.78' fill='rgb(228,164,231)'/><circle cx='327.5' cy='158.3' r='0.78' fill='rgb(229,164,231)'/><circle cx='330.0' cy='156.0' r='0.78' fill='rgb(230,164,231)'/><circle cx='335.2' cy='151.6' r='0.78' fill='rgb(230,164,231)'/><circle cx='346.2' cy='143.6' r='0.79' fill='rgb(232,164,230)'/><circle cx='349.1' cy='141.7' r='0.79' fill='rgb(232,164,230)'/><circle cx='352.0' cy='140.0' r='0.80' fill='rgb(232,164,230)'/><circle cx='358.0' cy='136.7' r='0.81' fill='rgb(233,164,230)'/><circle cx='367.2' cy='132.2' r='0.82' fill='rgb(233,164,230)'/><circle cx='370.3' cy='130.9' r='0.82' fill='rgb(234,164,230)'/><circle cx='373.5' cy='129.7' r='0.83' fill='rgb(234,164,230)'/><circle cx='376.7' cy='128.5' r='0.83' fill='rgb(234,164,230)'/><circle cx='379.9' cy='127.4' r='0.84' fill='rgb(234,164,230)'/><circle cx='383.2' cy='126.4' r='0.85' fill='rgb(234,164,230)'/><circle cx='386.5' cy='125.5' r='0.85' fill='rgb(234,164,230)'/><circle cx='389.8' cy='124.6' r='0.86' fill='rgb(235,164,230)'/><circle cx='393.1' cy='123.8' r='0.86' fill='rgb(235,164,230)'/><circle cx='396.4' cy='123.1' r='0.87' fill='rgb(235,164,230)'/><circle cx='399.8' cy='122.5' r='0.88' fill='rgb(235,164,230)'/><circle cx='403.1' cy='122.0' r='0.88' fill='rgb(235,164,230)'/><circle cx='406.5' cy='121.5' r='0.89' fill='rgb(235,164,230)'/><circle cx='409.9' cy='121.2' r='0.89' fill='rgb(235,164,230)'/><circle cx='413.3' cy='120.9' r='0.90' fill='rgb(235,164,230)'/><circle cx='420.1' cy='120.5' r='0.91' fill='rgb(235,164,230)'/><circle cx='423.5' cy='120.5' r='0.92' fill='rgb(235,164,230)'/><circle cx='426.9' cy='120.5' r='0.93' fill='rgb(235,164,230)'/><circle cx='430.3' cy='120.7' r='0.93' fill='rgb(235,164,230)'/><circle cx='433.7' cy='120.9' r='0.94' fill='rgb(235,164,230)'/><circle cx='437.1' cy='121.2' r='0.95' fill='rgb(235,164,230)'/><circle cx='440.5' cy='121.5' r='0.95' fill='rgb(235,164,230)'/><circle cx='443.9' cy='122.0' r='0.96' fill='rgb(235,164,230)'/><circle cx='447.2' cy='122.5' r='0.96' fill='rgb(235,164,230)'/><circle cx='450.6' cy='123.1' r='0.97' fill='rgb(235,164,230)'/><circle cx='453.9' cy='123.8' r='0.97' fill='rgb(235,164,230)'/><circle cx='457.2' cy='124.6' r='0.98' fill='rgb(235,164,230)'/><circle cx='460.5' cy='125.5' r='0.99' fill='rgb(234,164,230)'/><circle cx='463.8' cy='126.4' r='0.99' fill='rgb(234,164,230)'/><circle cx='467.1' cy='127.4' r='1.00' fill='rgb(234,164,230)'/><circle cx='470.3' cy='128.5' r='1.00' fill='rgb(234,164,230)'/><circle cx='473.5' cy='129.7' r='1.00' fill='rgb(234,164,230)'/><circle cx='476.7' cy='130.9' r='1.01' fill='rgb(234,164,230)'/><circle cx='479.8' cy='132.2' r='1.01' fill='rgb(233,164,230)'/><circle cx='482.9' cy='133.6' r='1.02' fill='rgb(233,164,230)'/><circle cx='486.0' cy='135.1' r='1.02' fill='rgb(233,164,230)'/><circle cx='489.0' cy='136.7' r='1.02' fill='rgb(233,164,230)'/><circle cx='492.0' cy='138.3' r='1.03' fill='rgb(232,164,230)'/><circle cx='495.0' cy='140.0' r='1.03' fill='rgb(232,164,230)'/><circle cx='497.9' cy='141.7' r='1.03' fill='rgb(232,164,230)'/><circle cx='500.8' cy='143.6' r='1.03' fill='rgb(232,164,230)'/><circle cx='503.6' cy='145.5' r='1.04' fill='rgb(231,164,231)'/><circle cx='506.4' cy='147.4' r='1.04' fill='rgb(231,164,231)'/><circle cx='509.1' cy='149.5' r='1.04' fill='rgb(231,164,231)'/><circle cx='511.8' cy='151.6' r='1.04' fill='rgb(230,164,231)'/><circle cx='514.4' cy='153.7' r='1.04' fill='rgb(230,164,231)'/><circle cx='517.0' cy='156.0' r='1.04' fill='rgb(230,164,231)'/><circle cx='519.5' cy='158.3' r='1.04' fill='rgb(229,164,231)'/><circle cx='522.0' cy='160.6' r='1.04' fill='rgb(229,164,231)'/><circle cx='524.4' cy='163.0' r='1.04' fill='rgb(228,164,231)'/><circle cx='526.7' cy='165.5' r='1.04' fill='rgb(228,164,231)'/><circle cx='529.0' cy='168.0' r='1.04' fill='rgb(228,164,231)'/><circle cx='531.3' cy='170.6' r='1.04' fill='rgb(227,163,231)'/><circle cx='533.4' cy='173.2' r='1.04' fill='rgb(227,163,231)'/><circle cx='535.5' cy='175.9' r='1.03' fill='rgb(226,163,231)'/><circle cx='537.6' cy='178.6' r='1.03' fill='rgb(226,163,231)'/><circle cx='539.5' cy='181.4' r='1.03' fill='rgb(225,163,231)'/><circle cx='541.4' cy='184.2' r='1.03' fill='rgb(225,163,232)'/><circle cx='543.3' cy='187.1' r='1.02' fill='rgb(224,163,232)'/><circle cx='545.0' cy='190.0' r='1.02' fill='rgb(224,163,232)'/><circle cx='546.7' cy='193.0' r='1.01' fill='rgb(224,163,232)'/><circle cx='548.3' cy='196.0' r='1.01' fill='rgb(223,163,232)'/><circle cx='549.9' cy='199.0' r='1.01' fill='rgb(223,163,232)'/><circle cx='551.4' cy='202.1' r='1.00' fill='rgb(222,163,232)'/><circle cx='552.8' cy='205.2' r='1.00' fill='rgb(222,163,232)'/><circle cx='554.1' cy='208.3' r='0.99' fill='rgb(221,163,232)'/><circle cx='555.3' cy='211.5' r='0.99' fill='rgb(221,163,232)'/><circle cx='556.5' cy='214.7' r='0.98' fill='rgb(220,163,232)'/><circle cx='557.6' cy='217.9' r='0.98' fill='rgb(220,163,232)'/><circle cx='558.6' cy='221.2' r='0.97' fill='rgb(219,163,232)'/><circle cx='559.5' cy='224.5' r='0.97' fill='rgb(218,163,233)'/><circle cx='560.4' cy='227.8' r='0.96' fill='rgb(218,163,233)'/><circle cx='561.2' cy='231.1' r='0.95' fill='rgb(217,162,233)'/><circle cx='561.9' cy='234.4' r='0.95' fill='rgb(217,162,233)'/><circle cx='562.5' cy='237.8' r='0.94' fill='rgb(216,162,233)'/><circle cx='563.0' cy='241.1' r='0.94' fill='rgb(216,162,233)'/><circle cx='563.8' cy='247.9' r='0.92' fill='rgb(215,162,233)'/><circle cx='564.1' cy='251.3' r='0.92' fill='rgb(214,162,233)'/><circle cx='564.3' cy='254.7' r='0.91' fill='rgb(214,162,233)'/><circle cx='567.5' cy='263.2' r='0.82' fill='rgb(212,162,234)'/><circle cx='567.2' cy='270.0' r='0.81' fill='rgb(211,162,234)'/><circle cx='565.8' cy='283.5' r='0.79' fill='rgb(209,162,234)'/><circle cx='564.6' cy='290.2' r='0.78' fill='rgb(208,162,234)'/><circle cx='562.2' cy='300.1' r='0.76' fill='rgb(206,161,234)'/><circle cx='556.7' cy='316.2' r='0.74' fill='rgb(204,161,235)'/><circle cx='545.9' cy='337.4' r='0.73' fill='rgb(200,161,235)'/><circle cx='542.2' cy='343.1' r='0.72' fill='rgb(199,161,236)'/><circle cx='533.9' cy='353.9' r='0.72' fill='rgb(198,161,236)'/><circle cx='527.1' cy='361.5' r='0.72' fill='rgb(196,160,236)'/><circle cx='500.8' cy='383.0' r='0.73' fill='rgb(193,160,237)'/><circle cx='486.0' cy='391.2' r='0.75' fill='rgb(192,160,237)'/><circle cx='473.5' cy='396.6' r='0.76' fill='rgb(191,160,237)'/><circle cx='460.5' cy='400.7' r='0.78' fill='rgb(190,160,237)'/><circle cx='457.2' cy='401.5' r='0.79' fill='rgb(190,160,237)'/><circle cx='440.5' cy='404.5' r='0.81' fill='rgb(189,160,237)'/><circle cx='426.9' cy='405.5' r='0.83' fill='rgb(189,160,237)'/><circle cx='423.5' cy='405.5' r='0.84' fill='rgb(189,160,237)'/><circle cx='416.7' cy='405.3' r='0.85' fill='rgb(189,160,237)'/><circle cx='409.9' cy='404.9' r='0.86' fill='rgb(189,160,237)'/><circle cx='406.5' cy='404.5' r='0.86' fill='rgb(189,160,237)'/><circle cx='403.2' cy='404.1' r='0.87' fill='rgb(190,160,237)'/><circle cx='399.8' cy='403.5' r='0.87' fill='rgb(190,160,237)'/><circle cx='396.5' cy='402.9' r='0.88' fill='rgb(190,160,237)'/><circle cx='389.8' cy='401.5' r='0.89' fill='rgb(190,160,237)'/><circle cx='383.2' cy='399.8' r='0.89' fill='rgb(190,160,237)'/><circle cx='380.0' cy='398.8' r='0.90' fill='rgb(190,160,237)'/><circle cx='373.5' cy='396.6' r='0.91' fill='rgb(191,160,237)'/><circle cx='370.4' cy='395.3' r='0.91' fill='rgb(191,160,237)'/><circle cx='367.2' cy='394.0' r='0.91' fill='rgb(191,160,237)'/><circle cx='364.1' cy='392.7' r='0.92' fill='rgb(191,160,237)'/><circle cx='361.0' cy='391.2' r='0.92' fill='rgb(192,160,237)'/><circle cx='358.0' cy='389.7' r='0.92' fill='rgb(192,160,237)'/><circle cx='355.0' cy='388.1' r='0.92' fill='rgb(192,160,237)'/><circle cx='352.0' cy='386.5' r='0.93' fill='rgb(192,160,237)'/><circle cx='349.1' cy='384.8' r='0.93' fill='rgb(193,160,237)'/><circle cx='346.2' cy='383.0' r='0.93' fill='rgb(193,160,237)'/><circle cx='343.3' cy='381.1' r='0.93' fill='rgb(193,160,237)'/><circle cx='340.5' cy='379.2' r='0.93' fill='rgb(194,160,237)'/><circle cx='337.8' cy='377.2' r='0.93' fill='rgb(194,160,236)'/><circle cx='335.1' cy='375.1' r='0.94' fill='rgb(194,160,236)'/><circle cx='332.4' cy='373.0' r='0.94' fill='rgb(195,160,236)'/><circle cx='329.8' cy='370.8' r='0.94' fill='rgb(195,160,236)'/><circle cx='327.2' cy='368.6' r='0.94' fill='rgb(195,160,236)'/><circle cx='324.7' cy='366.3' r='0.94' fill='rgb(196,160,236)'/><circle cx='322.3' cy='363.9' r='0.94' fill='rgb(196,160,236)'/><circle cx='319.9' cy='361.5' r='0.94' fill='rgb(196,160,236)'/><circle cx='317.6' cy='359.0' r='0.94' fill='rgb(197,160,236)'/><circle cx='315.3' cy='356.5' r='0.93' fill='rgb(197,160,236)'/><circle cx='313.1' cy='353.9' r='0.93' fill='rgb(198,161,236)'/><circle cx='310.9' cy='351.3' r='0.93' fill='rgb(198,161,236)'/><circle cx='308.8' cy='348.6' r='0.93' fill='rgb(198,161,236)'/><circle cx='306.8' cy='345.9' r='0.93' fill='rgb(199,161,236)'/><circle cx='304.8' cy='343.1' r='0.93' fill='rgb(199,161,236)'/><circle cx='302.9' cy='340.3' r='0.92' fill='rgb(200,161,236)'/><circle cx='301.1' cy='337.4' r='0.92' fill='rgb(200,161,235)'/><circle cx='299.4' cy='334.5' r='0.92' fill='rgb(201,161,235)'/><circle cx='297.7' cy='331.5' r='0.92' fill='rgb(201,161,235)'/><circle cx='296.1' cy='328.5' r='0.91' fill='rgb(202,161,235)'/><circle cx='294.5' cy='325.5' r='0.91' fill='rgb(202,161,235)'/><circle cx='293.0' cy='322.4' r='0.90' fill='rgb(203,161,235)'/><circle cx='291.6' cy='319.3' r='0.90' fill='rgb(203,161,235)'/><circle cx='290.3' cy='316.2' r='0.90' fill='rgb(204,161,235)'/><circle cx='289.0' cy='313.1' r='0.89' fill='rgb(204,161,235)'/><circle cx='287.9' cy='309.9' r='0.89' fill='rgb(205,161,235)'/><circle cx='285.7' cy='303.4' r='0.88' fill='rgb(206,161,235)'/><circle cx='284.8' cy='300.1' r='0.88' fill='rgb(206,161,234)'/><circle cx='283.9' cy='296.8' r='0.87' fill='rgb(207,161,234)'/><circle cx='283.1' cy='293.5' r='0.87' fill='rgb(207,161,234)'/><circle cx='282.4' cy='290.2' r='0.86' fill='rgb(208,162,234)'/><circle cx='281.2' cy='283.5' r='0.85' fill='rgb(209,162,234)'/><circle cx='280.3' cy='276.8' r='0.84' fill='rgb(210,162,234)'/><circle cx='280.0' cy='273.4' r='0.84' fill='rgb(211,162,234)'/><circle cx='279.8' cy='270.0' r='0.83' fill='rgb(211,162,234)'/><circle cx='279.5' cy='263.2' r='0.82' fill='rgb(212,162,234)'/><circle cx='279.5' cy='259.8' r='0.82' fill='rgb(213,162,233)'/><circle cx='279.6' cy='256.4' r='0.81' fill='rgb(213,162,233)'/><circle cx='280.0' cy='249.6' r='0.80' fill='rgb(214,162,233)'/><circle cx='280.3' cy='246.2' r='0.79' fill='rgb(215,162,233)'/><circle cx='281.8' cy='236.1' r='0.78' fill='rgb(217,162,233)'/><circle cx='283.1' cy='229.5' r='0.77' fill='rgb(218,163,233)'/><circle cx='284.8' cy='222.9' r='0.76' fill='rgb(219,163,233)'/><circle cx='286.8' cy='216.4' r='0.75' fill='rgb(220,163,232)'/><circle cx='306.8' cy='177.1' r='0.72' fill='rgb(226,163,231)'/><circle cx='337.8' cy='145.8' r='0.73' fill='rgb(231,164,231)'/><circle cx='349.1' cy='138.2' r='0.74' fill='rgb(232,164,230)'/><circle cx='364.1' cy='130.3' r='0.75' fill='rgb(234,164,230)'/><circle cx='370.4' cy='127.7' r='0.76' fill='rgb(234,164,230)'/><circle cx='393.1' cy='120.7' r='0.79' fill='rgb(235,164,230)'/><circle cx='413.3' cy='117.9' r='0.82' fill='rgb(236,164,230)'/><circle cx='416.7' cy='117.7' r='0.83' fill='rgb(236,164,230)'/><circle cx='423.5' cy='117.5' r='0.84' fill='rgb(236,164,230)'/><circle cx='426.9' cy='117.5' r='0.84' fill='rgb(236,164,230)'/><circle cx='433.7' cy='117.9' r='0.85' fill='rgb(236,164,230)'/><circle cx='437.1' cy='118.1' r='0.86' fill='rgb(236,164,230)'/><circle cx='440.5' cy='118.5' r='0.86' fill='rgb(236,164,230)'/><circle cx='447.2' cy='119.5' r='0.87' fill='rgb(235,164,230)'/><circle cx='450.5' cy='120.1' r='0.88' fill='rgb(235,164,230)'/><circle cx='460.5' cy='122.3' r='0.89' fill='rgb(235,164,230)'/><circle cx='463.8' cy='123.2' r='0.89' fill='rgb(235,164,230)'/><circle cx='467.0' cy='124.2' r='0.90' fill='rgb(235,164,230)'/><circle cx='473.5' cy='126.4' r='0.91' fill='rgb(234,164,230)'/><circle cx='476.6' cy='127.7' r='0.91' fill='rgb(234,164,230)'/><circle cx='479.8' cy='129.0' r='0.91' fill='rgb(234,164,230)'/><circle cx='482.9' cy='130.3' r='0.92' fill='rgb(234,164,230)'/><circle cx='486.0' cy='131.8' r='0.92' fill='rgb(233,164,230)'/><circle cx='489.0' cy='133.3' r='0.92' fill='rgb(233,164,230)'/><circle cx='492.0' cy='134.9' r='0.92' fill='rgb(233,164,230)'/><circle cx='495.0' cy='136.5' r='0.93' fill='rgb(233,164,230)'/><circle cx='497.9' cy='138.2' r='0.93' fill='rgb(232,164,230)'/><circle cx='500.8' cy='140.0' r='0.93' fill='rgb(232,164,230)'/><circle cx='503.7' cy='141.9' r='0.93' fill='rgb(232,164,230)'/><circle cx='506.5' cy='143.8' r='0.93' fill='rgb(231,164,230)'/><circle cx='509.2' cy='145.8' r='0.93' fill='rgb(231,164,231)'/><circle cx='511.9' cy='147.9' r='0.94' fill='rgb(231,164,231)'/><circle cx='514.6' cy='150.0' r='0.94' fill='rgb(230,164,231)'/><circle cx='517.2' cy='152.2' r='0.94' fill='rgb(230,164,231)'/><circle cx='519.8' cy='154.4' r='0.94' fill='rgb(230,164,231)'/><circle cx='522.3' cy='156.7' r='0.94' fill='rgb(229,164,231)'/><circle cx='524.7' cy='159.1' r='0.94' fill='rgb(229,164,231)'/><circle cx='527.1' cy='161.5' r='0.94' fill='rgb(229,164,231)'/><circle cx='529.4' cy='164.0' r='0.94' fill='rgb(228,164,231)'/><circle cx='531.7' cy='166.5' r='0.93' fill='rgb(228,164,231)'/><circle cx='533.9' cy='169.1' r='0.93' fill='rgb(227,163,231)'/><circle cx='536.1' cy='171.7' r='0.93' fill='rgb(227,163,231)'/><circle cx='538.2' cy='174.4' r='0.93' fill='rgb(227,163,231)'/><circle cx='540.2' cy='177.1' r='0.93' fill='rgb(226,163,231)'/><circle cx='542.2' cy='179.9' r='0.93' fill='rgb(226,163,231)'/><circle cx='544.1' cy='182.7' r='0.92' fill='rgb(225,163,231)'/><circle cx='545.9' cy='185.6' r='0.92' fill='rgb(225,163,232)'/><circle cx='547.6' cy='188.5' r='0.92' fill='rgb(224,163,232)'/><circle cx='549.3' cy='191.5' r='0.92' fill='rgb(224,163,232)'/><circle cx='550.9' cy='194.5' r='0.91' fill='rgb(223,163,232)'/><circle cx='552.5' cy='197.5' r='0.91' fill='rgb(223,163,232)'/><circle cx='555.4' cy='203.7' r='0.90' fill='rgb(222,163,232)'/><circle cx='556.7' cy='206.8' r='0.90' fill='rgb(221,163,232)'/><circle cx='558.0' cy='209.9' r='0.89' fill='rgb(221,163,232)'/><circle cx='559.1' cy='213.1' r='0.89' fill='rgb(220,163,232)'/><circle cx='560.2' cy='216.4' r='0.88' fill='rgb(220,163,232)'/><circle cx='561.3' cy='219.6' r='0.88' fill='rgb(219,163,232)'/><circle cx='562.2' cy='222.9' r='0.88' fill='rgb(219,163,233)'/><circle cx='563.1' cy='226.2' r='0.87' fill='rgb(218,163,233)'/><circle cx='564.6' cy='232.8' r='0.86' fill='rgb(217,162,233)'/><circle cx='565.2' cy='236.1' r='0.86' fill='rgb(217,162,233)'/><circle cx='566.3' cy='242.8' r='0.85' fill='rgb(216,162,233)'/><circle cx='566.7' cy='246.2' r='0.84' fill='rgb(215,162,233)'/><circle cx='567.0' cy='249.6' r='0.84' fill='rgb(214,162,233)'/><circle cx='567.4' cy='256.4' r='0.83' fill='rgb(213,162,233)'/><circle cx='567.5' cy='259.8' r='0.82' fill='rgb(213,162,233)'/><circle cx='570.5' cy='264.9' r='0.74' fill='rgb(212,162,234)'/><circle cx='456.4' cy='404.8' r='0.72' fill='rgb(189,160,237)'/><circle cx='415.8' cy='408.3' r='0.76' fill='rgb(189,160,237)'/><circle cx='398.9' cy='406.4' r='0.78' fill='rgb(189,160,237)'/><circle cx='392.2' cy='405.1' r='0.79' fill='rgb(189,160,237)'/><circle cx='379.0' cy='401.6' r='0.80' fill='rgb(190,160,237)'/><circle cx='375.8' cy='400.5' r='0.81' fill='rgb(190,160,237)'/><circle cx='372.6' cy='399.4' r='0.81' fill='rgb(190,160,237)'/><circle cx='360.0' cy='394.1' r='0.82' fill='rgb(191,160,237)'/><circle cx='345.1' cy='385.9' r='0.83' fill='rgb(192,160,237)'/><circle cx='339.5' cy='382.1' r='0.83' fill='rgb(193,160,237)'/><circle cx='334.0' cy='378.1' r='0.83' fill='rgb(194,160,237)'/><circle cx='326.1' cy='371.6' r='0.83' fill='rgb(195,160,236)'/><circle cx='321.1' cy='366.9' r='0.83' fill='rgb(195,160,236)'/><circle cx='314.0' cy='359.6' r='0.83' fill='rgb(197,160,236)'/><circle cx='311.7' cy='357.0' r='0.83' fill='rgb(197,160,236)'/><circle cx='309.6' cy='354.4' r='0.83' fill='rgb(198,161,236)'/><circle cx='307.4' cy='351.7' r='0.83' fill='rgb(198,161,236)'/><circle cx='303.4' cy='346.2' r='0.82' fill='rgb(199,161,236)'/><circle cx='301.5' cy='343.4' r='0.82' fill='rgb(199,161,236)'/><circle cx='299.6' cy='340.6' r='0.82' fill='rgb(200,161,236)'/><circle cx='297.8' cy='337.7' r='0.82' fill='rgb(200,161,235)'/><circle cx='294.4' cy='331.8' r='0.81' fill='rgb(201,161,235)'/><circle cx='292.8' cy='328.8' r='0.81' fill='rgb(202,161,235)'/><circle cx='288.4' cy='319.5' r='0.80' fill='rgb(203,161,235)'/><circle cx='287.1' cy='316.4' r='0.80' fill='rgb(204,161,235)'/><circle cx='283.6' cy='306.8' r='0.79' fill='rgb(205,161,235)'/><circle cx='281.7' cy='300.2' r='0.78' fill='rgb(206,161,234)'/><circle cx='277.0' cy='273.4' r='0.75' fill='rgb(211,162,234)'/><circle cx='277.0' cy='249.6' r='0.73' fill='rgb(214,162,233)'/><circle cx='279.3' cy='232.7' r='0.71' fill='rgb(217,162,233)'/><circle cx='405.7' cy='115.6' r='0.73' fill='rgb(236,164,230)'/><circle cx='409.0' cy='115.2' r='0.74' fill='rgb(236,164,230)'/><circle cx='432.9' cy='114.8' r='0.76' fill='rgb(236,164,230)'/><circle cx='456.4' cy='118.2' r='0.79' fill='rgb(236,164,230)'/><circle cx='466.3' cy='120.9' r='0.80' fill='rgb(235,164,230)'/><circle cx='469.6' cy='121.9' r='0.80' fill='rgb(235,164,230)'/><circle cx='476.0' cy='124.2' r='0.81' fill='rgb(235,164,230)'/><circle cx='482.3' cy='126.8' r='0.81' fill='rgb(234,164,230)'/><circle cx='491.5' cy='131.2' r='0.82' fill='rgb(234,164,230)'/><circle cx='494.5' cy='132.8' r='0.82' fill='rgb(233,164,230)'/><circle cx='497.5' cy='134.5' r='0.82' fill='rgb(233,164,230)'/><circle cx='500.4' cy='136.2' r='0.83' fill='rgb(233,164,230)'/><circle cx='506.1' cy='139.9' r='0.83' fill='rgb(232,164,230)'/><circle cx='508.9' cy='141.9' r='0.83' fill='rgb(232,164,230)'/><circle cx='511.7' cy='143.9' r='0.83' fill='rgb(231,164,230)'/><circle cx='514.4' cy='146.0' r='0.83' fill='rgb(231,164,231)'/><circle cx='517.0' cy='148.1' r='0.83' fill='rgb(231,164,231)'/><circle cx='519.6' cy='150.3' r='0.83' fill='rgb(230,164,231)'/><circle cx='536.4' cy='167.3' r='0.83' fill='rgb(228,164,231)'/><circle cx='538.5' cy='169.9' r='0.83' fill='rgb(227,163,231)'/><circle cx='540.6' cy='172.6' r='0.83' fill='rgb(227,163,231)'/><circle cx='542.6' cy='175.4' r='0.83' fill='rgb(226,163,231)'/><circle cx='544.6' cy='178.2' r='0.82' fill='rgb(226,163,231)'/><circle cx='548.3' cy='183.9' r='0.82' fill='rgb(225,163,231)'/><circle cx='553.4' cy='192.7' r='0.81' fill='rgb(224,163,232)'/><circle cx='556.5' cy='198.8' r='0.81' fill='rgb(223,163,232)'/><circle cx='557.9' cy='201.9' r='0.81' fill='rgb(222,163,232)'/><circle cx='559.2' cy='205.0' r='0.80' fill='rgb(222,163,232)'/><circle cx='560.5' cy='208.2' r='0.80' fill='rgb(221,163,232)'/><circle cx='564.8' cy='221.1' r='0.79' fill='rgb(219,163,232)'/><circle cx='565.7' cy='224.4' r='0.78' fill='rgb(218,163,233)'/><circle cx='569.1' cy='241.1' r='0.76' fill='rgb(216,162,233)'/><circle cx='569.5' cy='244.5' r='0.76' fill='rgb(215,162,233)'/><circle cx='569.9' cy='247.9' r='0.75' fill='rgb(215,162,233)'/><circle cx='570.3' cy='254.7' r='0.75' fill='rgb(214,162,233)'/><circle cx='366.3' cy='400.2' r='0.71' fill='rgb(190,160,237)'/><circle cx='291.8' cy='333.3' r='0.72' fill='rgb(201,161,235)'/><circle cx='476.0' cy='121.0' r='0.71' fill='rgb(235,164,230)'/><circle cx='491.5' cy='127.8' r='0.72' fill='rgb(234,164,230)'/><circle cx='509.0' cy='138.3' r='0.73' fill='rgb(232,164,230)'/></g>
<g transform="translate(340,150) scale(0.10352)" fill="none" stroke="url(#lg_green)" stroke-width="19" stroke-linecap="round" stroke-linejoin="round">
<path d="M355,775 C300,730 270,650 320,595 C230,560 200,380 345,350 C340,200 540,150 585,290 C620,250 700,260 725,300 C760,180 950,190 970,325 C1040,270 1140,300 1170,360"/>
<path d="M555,415 V495 L660,555 V680 L775,715 V870"/>
<path d="M775,470 H965 C985,470 985,415 1005,415 H1280 C1295,415 1300,425 1300,440 V565"/>
<path d="M1190,455 L1245,510"/>
<path d="M410,700 V815 C410,830 330,825 315,850 V930"/>
<path d="M470,770 C520,880 700,870 735,765"/>
<path d="M845,740 C870,790 920,815 960,820"/>
<path d="M1025,680 V860 L1085,905 V945 L1175,965 C1185,968 1185,985 1185,1040"/>
<circle cx="315" cy="1105" r="170"/><circle cx="780" cy="1040" r="168"/><circle cx="1185" cy="1210" r="168"/><circle cx="1300" cy="740" r="168"/>
</g>
<g transform="translate(340,150) scale(0.10352)" fill="url(#lg_green)" stroke="none"><path d='M431.67,1069.33 L431.67,1140.67 L401.82,1138.33 L387.27,1163.53 L404.23,1188.20 L342.44,1223.87 L329.55,1196.86 L300.45,1196.86 L287.56,1223.87 L225.77,1188.20 L242.73,1163.53 L228.18,1138.33 L198.33,1140.67 L198.33,1069.33 L228.18,1071.67 L242.73,1046.47 L225.77,1021.80 L287.56,986.13 L300.45,1013.14 L329.55,1013.14 L342.44,986.13 L404.23,1021.80 L387.27,1046.47 L401.82,1071.67Z M370.00,1105.00 A55,55 0 1 0 260.00,1105.00 A55,55 0 1 0 370.00,1105.00Z' fill-rule='evenodd'/><path d='M896.67,1004.33 L896.67,1075.67 L866.82,1073.33 L852.27,1098.53 L869.23,1123.20 L807.44,1158.87 L794.55,1131.86 L765.45,1131.86 L752.56,1158.87 L690.77,1123.20 L707.73,1098.53 L693.18,1073.33 L663.33,1075.67 L663.33,1004.33 L693.18,1006.67 L707.73,981.47 L690.77,956.80 L752.56,921.13 L765.45,948.14 L794.55,948.14 L807.44,921.13 L869.23,956.80 L852.27,981.47 L866.82,1006.67Z M835.00,1040.00 A55,55 0 1 0 725.00,1040.00 A55,55 0 1 0 835.00,1040.00Z' fill-rule='evenodd'/><path d='M1301.67,1174.33 L1301.67,1245.67 L1271.82,1243.33 L1257.27,1268.53 L1274.23,1293.20 L1212.44,1328.87 L1199.55,1301.86 L1170.45,1301.86 L1157.56,1328.87 L1095.77,1293.20 L1112.73,1268.53 L1098.18,1243.33 L1068.33,1245.67 L1068.33,1174.33 L1098.18,1176.67 L1112.73,1151.47 L1095.77,1126.80 L1157.56,1091.13 L1170.45,1118.14 L1199.55,1118.14 L1212.44,1091.13 L1274.23,1126.80 L1257.27,1151.47 L1271.82,1176.67Z M1240.00,1210.00 A55,55 0 1 0 1130.00,1210.00 A55,55 0 1 0 1240.00,1210.00Z' fill-rule='evenodd'/><path d='M1416.67,704.33 L1416.67,775.67 L1386.82,773.33 L1372.27,798.53 L1389.23,823.20 L1327.44,858.87 L1314.55,831.86 L1285.45,831.86 L1272.56,858.87 L1210.77,823.20 L1227.73,798.53 L1213.18,773.33 L1183.33,775.67 L1183.33,704.33 L1213.18,706.67 L1227.73,681.47 L1210.77,656.80 L1272.56,621.13 L1285.45,648.14 L1314.55,648.14 L1327.44,621.13 L1389.23,656.80 L1372.27,681.47 L1386.82,706.67Z M1355.00,740.00 A55,55 0 1 0 1245.00,740.00 A55,55 0 1 0 1355.00,740.00Z' fill-rule='evenodd'/></g>
<g transform="translate(303.6,331.2) scale(0.72,1)"><text x="0" y="0" font-family="Liberation Sans" font-size="27.6" textLength="333.3" lengthAdjust="spacing" fill="url(#lg_title2)" style="font-weight:400">METRIC FLOW IQ</text></g>
<text x="327.2" y="351.4" font-family="Liberation Sans" font-size="10.6" font-style="italic" font-weight="700" textLength="192.4" lengthAdjust="spacingAndGlyphs" fill="url(#lg_tag)">THE IQ BEHIND HIGH-PERFORMANCE TEAMS</text>
</svg>
<svg class="abs" style="left:0;top:0" width="3520" height="1980" viewBox="0 0 3520 1980" fill="none" stroke-linecap="round" stroke-linejoin="round">
<rect x='1227' y='635' width='35' height='36' rx='6' fill='#0075ff' stroke='none'/><polygon points='1231.9,655.5 1235.7,651.2 1240.5,656.0 1252.9,640.9 1257.2,644.5 1241.1,664.2' fill='#fff' stroke='none'/>
<rect x='1455.4' y='635' width='35' height='36' rx='6' fill='#0075ff' stroke='none'/><polygon points='1460.3,655.5 1464.1,651.2 1468.9,656.0 1481.3,640.9 1485.6,644.5 1469.5,664.2' fill='#fff' stroke='none'/>
<rect x='1669.3' y='635' width='35' height='36' rx='6' fill='#0075ff' stroke='none'/><polygon points='1674.2,655.5 1678.0,651.2 1682.8,656.0 1695.2,640.9 1699.5,644.5 1683.4,664.2' fill='#fff' stroke='none'/>
<rect x='1903' y='635' width='35' height='36' rx='6' fill='#0075ff' stroke='none'/><polygon points='1907.9,655.5 1911.7,651.2 1916.5,656.0 1928.9,640.9 1933.2,644.5 1917.1,664.2' fill='#fff' stroke='none'/>
<rect x='2170.1' y='635' width='35' height='36' rx='6' fill='#0075ff' stroke='none'/><polygon points='2175.0,655.5 2178.8,651.2 2183.6,656.0 2196.0,640.9 2200.3,644.5 2184.2,664.2' fill='#fff' stroke='none'/>
<rect x='2356.9' y='635' width='35' height='36' rx='6' fill='#0075ff' stroke='none'/><polygon points='2361.8,655.5 2365.6,651.2 2370.4,656.0 2382.8,640.9 2387.1,644.5 2371.0,664.2' fill='#fff' stroke='none'/>
<rect x='2566' y='635' width='35' height='36' rx='6' fill='#0075ff' stroke='none'/><polygon points='2570.9,655.5 2574.7,651.2 2579.5,656.0 2591.9,640.9 2596.2,644.5 2580.1,664.2' fill='#fff' stroke='none'/>
<rect x='2833' y='635' width='35' height='36' rx='6' fill='#0075ff' stroke='none'/><polygon points='2837.9,655.5 2841.7,651.2 2846.5,656.0 2858.9,640.9 2863.2,644.5 2847.1,664.2' fill='#fff' stroke='none'/>
<rect x='966.25' y='821.25' width='33.2' height='33.3' rx='5.5' fill='#fff' stroke='#767676' stroke-width='2.5'/>
<rect x='966.25' y='1088.25' width='33.2' height='33.3' rx='5.5' fill='#fff' stroke='#767676' stroke-width='2.5'/>
<rect x='966.25' y='1471.25' width='33.2' height='33.3' rx='5.5' fill='#fff' stroke='#767676' stroke-width='2.5'/>
<rect x='966.25' y='1796.25' width='33.2' height='33.3' rx='5.5' fill='#fff' stroke='#767676' stroke-width='2.5'/>

<g transform='translate(992.20,121.49) scale(1.7750)' stroke='#6e60f4' stroke-width='2'><path d="M15 21v-8a1 1 0 0 0-1-1h-4a1 1 0 0 0-1 1v8"/><path d="M3 10a2 2 0 0 1 .709-1.528l7-5.999a2 2 0 0 1 2.582 0l7 5.999A2 2 0 0 1 21 10v9a2 2 0 0 1-2 2H5a2 2 0 0 1-2-2z"/></g>
<g transform='translate(1264.98,121.13) scale(1.7432)' stroke='#f1f2f6' stroke-width='2'><polygon points="12 2 2 7 12 12 22 7 12 2"/><polyline points="2 17 12 22 22 17"/><polyline points="2 12 12 17 22 12"/></g>
<g transform='translate(1680.27,120.77) scale(1.7273)' stroke='#f1f2f6' stroke-width='2'><circle cx="12" cy="12" r="10"/><path d="M9.09 9a3 3 0 0 1 5.83 1c0 2-3 3-3 3"/><path d="M12 17h.01"/></g>
<g transform='translate(1927.57,120.47) scale(1.7548)' stroke='#f1f2f6' stroke-width='2'><path d="M14.7 6.3a1 1 0 0 0 0 1.4l1.6 1.6a1 1 0 0 0 1.4 0l3.77-3.77a6 6 0 0 1-7.94 7.94l-6.91 6.91a2.12 2.12 0 0 1-3-3l6.91-6.91a6 6 0 0 1 7.94-7.94l-3.76 3.76z"/></g>
<g transform='translate(3203.56,124.56) scale(1.3614)' stroke='#9aa2c6' stroke-width='2'><path d="M8 2v4"/><path d="M16 2v4"/><rect width="18" height="18" x="3" y="4" rx="2"/><path d="M3 10h18"/></g>
<g transform='translate(3321.23,124.38) scale(1.3977)' stroke='#9aa2c6' stroke-width='2'><path d="M6 8a6 6 0 0 1 12 0c0 7 3 9 3 9H3s3-2 3-9"/><path d="M10.3 21a1.94 1.94 0 0 0 3.4 0"/></g>
<g transform='translate(1322.29,822.19) scale(1.8338)' stroke='#8f98c4' stroke-width='2'><rect width="20" height="16" x="2" y="4" rx="2"/><path d="m22 7-8.97 5.7a1.94 1.94 0 0 1-2.06 0L2 7"/></g>
<g transform='translate(1930.21,822.30) scale(1.8495)' stroke='#8f98c4' stroke-width='2'><path d="M22 16.92v3a2 2 0 0 1-2.18 2 19.79 19.79 0 0 1-8.63-3.07 19.5 19.5 0 0 1-6-6 19.79 19.79 0 0 1-3.07-8.67A2 2 0 0 1 4.11 2h3a2 2 0 0 1 2 1.72 12.84 12.84 0 0 0 .7 2.81 2 2 0 0 1-.45 2.11L8.09 9.91a16 16 0 0 0 6 6l1.27-1.27a2 2 0 0 1 2.11-.45 12.84 12.84 0 0 0 2.81.7A2 2 0 0 1 22 16.92z"/></g>
<g transform='translate(2176.11,821.91) scale(1.9201)' stroke='#8f98c4' stroke-width='2'><line x1="12" x2="12" y1="2" y2="22"/><path d="M17 5H9.5a3.5 3.5 0 0 0 0 7h5a3.5 3.5 0 0 1 0 7H6"/></g>
<g transform='translate(2483.32,820.57) scale(2.0063)' stroke='#8f98c4' stroke-width='2'><path d="M20 10c0 4.993-5.539 10.193-7.399 11.799a1 1 0 0 1-1.202 0C9.539 20.193 4 14.993 4 10a8 8 0 0 1 16 0"/><circle cx="12" cy="10" r="3"/></g>
<g transform='translate(2694.26,819.06) scale(2.1157)' stroke='#8f98c4' stroke-width='2'><path d="M14.106 5.553a2 2 0 0 0 1.788 0l3.659-1.83A1 1 0 0 1 21 4.619v12.764a1 1 0 0 1-.553.894l-4.553 2.277a2 2 0 0 1-1.788 0l-4.212-2.106a2 2 0 0 0-1.788 0l-3.659 1.83A1 1 0 0 1 3 19.381V6.618a1 1 0 0 1 .553-.894l4.553-2.277a2 2 0 0 1 1.788 0z"/><path d="M15 5.764v15"/><path d="M9 3.236v15"/></g>
<g transform='translate(2920.05,822.50) scale(1.8295)' stroke='#8f98c4' stroke-width='2'><circle cx="12" cy="12" r="10"/><path d="M12 2a14.5 14.5 0 0 0 0 20 14.5 14.5 0 0 0 0-20"/><path d="M2 12h20"/></g>
<g transform='translate(3202.90,822.90) scale(1.7955)' stroke='#8f98c4' stroke-width='2'><path d="M12.586 2.586A2 2 0 0 0 11.172 2H4a2 2 0 0 0-2 2v7.172a2 2 0 0 0 .586 1.414l8.704 8.704a2.426 2.426 0 0 0 3.42 0l6.58-6.58a2.426 2.426 0 0 0 0-3.42z"/><circle cx="7.5" cy="7.5" r=".5" fill="currentColor"/></g>
<g transform='translate(142.81,869.19) scale(1.8701)' stroke='#f0f1f6' stroke-width='2'><path d="M15 21v-8a1 1 0 0 0-1-1h-4a1 1 0 0 0-1 1v8"/><path d="M3 10a2 2 0 0 1 .709-1.528l7-5.999a2 2 0 0 1 2.582 0l7 5.999A2 2 0 0 1 21 10v9a2 2 0 0 1-2 2H5a2 2 0 0 1-2-2z"/></g>
<g transform='translate(201.81,1273.81) scale(1.9952)' stroke='#f0f1f6' stroke-width='2'><path d="M2.062 12.348a1 1 0 0 1 0-.696 10.75 10.75 0 0 1 19.876 0 1 1 0 0 1 0 .696 10.75 10.75 0 0 1-19.876 0"/><circle cx="12" cy="12" r="3"/></g>
<g transform='translate(203.49,1383.24) scale(1.8425)' stroke='#f0f1f6' stroke-width='2'><path d="m19 21-7-4-7 4V5a2 2 0 0 1 2-2h10a2 2 0 0 1 2 2v16z"/></g>
<g transform='translate(202.33,1486.83) scale(1.9270)' stroke='#f0f1f6' stroke-width='2'><path d="m17 2 4 4-4 4"/><path d="M3 11v-1a4 4 0 0 1 4-4h14"/><path d="m7 22-4-4 4-4"/><path d="M21 13v1a4 4 0 0 1-4 4H3"/></g>
<g transform='translate(203.41,1594.66) scale(1.8492)' stroke='#f0f1f6' stroke-width='2'><path d="M20 13c0 5-3.5 7.5-7.66 8.95a1 1 0 0 1-.67-.01C7.5 20.5 4 18 4 13V6a1 1 0 0 1 1-1c2 0 4.5-1.2 6.24-2.72a1.17 1.17 0 0 1 1.52 0C14.51 3.81 17 5 19 5a1 1 0 0 1 1 1z"/></g>
<g transform='translate(143.31,1743.51) scale(1.8241)' stroke='#f0f1f6' stroke-width='2'><path d="M12 7v14"/><path d="M3 18a1 1 0 0 1-1-1V4a1 1 0 0 1 1-1h5a4 4 0 0 1 4 4 4 4 0 0 1 4-4h5a1 1 0 0 1 1 1v13a1 1 0 0 1-1 1h-6a3 3 0 0 0-3 3 3 3 0 0 0-3-3z"/></g>
<g transform='translate(203.22,1894.22) scale(1.8568)' stroke='#f0f1f6' stroke-width='2'><path d="M12 7v14"/><path d="M3 18a1 1 0 0 1-1-1V4a1 1 0 0 1 1-1h5a4 4 0 0 1 4 4 4 4 0 0 1 4-4h5a1 1 0 0 1 1 1v13a1 1 0 0 1-1 1h-6a3 3 0 0 0-3 3 3 3 0 0 0-3-3z"/></g>
<circle cx='1091.5' cy='835.5' r='7.3' stroke='#8f98c4' stroke-width='3.3'/><path d='M1077,861.4 V858.1 A8,8 0 0 1 1085,850.1 H1098.1 A8,8 0 0 1 1106.1,858.1 V861.4' stroke='#8f98c4' stroke-width='3.3'/>
<circle cx='3480.1' cy='129.6' r='9.4' stroke='#8b5cf6' stroke-width='5.3'/><path d='M3461,163.4 V161 A12,12 0 0 1 3473,149 H3487.3 A12,12 0 0 1 3499.3,161 V163.4' stroke='#8b5cf6' stroke-width='5.3'/>
<circle cx='219.90' cy='1181.50' r='7.30' stroke='#f0f1f6' stroke-width='3.4'/><path d='M205.30,1207.40 V1204.80 A9.00,9.00 0 0 1 214.30,1195.80 H225.80 A9.00,9.00 0 0 1 234.80,1204.80 V1207.40' stroke='#f0f1f6' stroke-width='3.4'/><path d='M232.20,1174.20 A8,8 0 0 1 232.20,1189.40' stroke='#f0f1f6' stroke-width='3.4'/><path d='M239.30,1196.20 A9,9 0 0 1 245.50,1204.50 V1207.40' stroke='#f0f1f6' stroke-width='3.4'/>
<circle cx='159.30' cy='1032.90' r='7.30' stroke='#6e60f4' stroke-width='3.4'/><path d='M144.70,1058.80 V1056.20 A9.00,9.00 0 0 1 153.70,1047.20 H165.20 A9.00,9.00 0 0 1 174.20,1056.20 V1058.80' stroke='#6e60f4' stroke-width='3.4'/><path d='M171.60,1025.60 A8,8 0 0 1 171.60,1040.80' stroke='#6e60f4' stroke-width='3.4'/><path d='M178.70,1047.60 A9,9 0 0 1 184.90,1055.90 V1058.80' stroke='#6e60f4' stroke-width='3.4'/>
<path d='M716.5,722.2 L709.8,729 L716.5,735.8 M726.2,722.2 L719.5,729 L726.2,735.8' stroke='#d3d6ea' stroke-width='2.8'/>
<polygon points='2134.8,132.9 2151,132.9 2142.9,146.5' fill='#f1f2f6' stroke='none'/>
<polygon points='679,1034.6 695.4,1034.6 687.2,1048.4' fill='#5b50d8' stroke='none'/>
<polygon points='679.2,1760.8 695.3,1760.8 687.25,1774.5' fill='#b0b3c4' stroke='none'/>

</svg>
<div style='position:absolute;left:0;top:0;width:1px;height:1px;will-change:transform'>
<div class='tx' style='left:1054.4px;top:117.4px;font-size:44px;line-height:44px;font-weight:700;color:#6e60f4;letter-spacing:-1.0px;transform:scaleX(0.9922);transform-origin:0 0;'>Home</div>
<div class='tx' style='left:1328.4px;top:117.4px;font-size:44px;line-height:44px;font-weight:700;color:#f1f2f6;letter-spacing:-0.46px;'>Applications</div>
<div class='tx' style='left:1741.3px;top:117.4px;font-size:44px;line-height:44px;font-weight:700;color:#f1f2f6;letter-spacing:-0.1px;'>Help</div>
<div class='tx' style='left:2004.0px;top:119.8px;font-size:44px;line-height:44px;font-weight:700;color:#f1f2f6;letter-spacing:-1.0px;transform:scaleX(0.9981);transform-origin:0 0;'>Tools</div>
<div class='tx' style='left:921.4px;top:366.8px;font-size:55px;line-height:55px;font-weight:400;color:#f3f4f8;letter-spacing:-0.3px;-webkit-text-stroke:1.5px currentColor;'>Accounts</div>
<div class='tx' style='left:2710.8px;top:364.9px;font-size:46px;line-height:46px;font-weight:700;color:#ffffff;letter-spacing:-1.0px;transform:scaleX(0.9979);transform-origin:0 0;'>Export CSV</div>
<div class='tx' style='left:3064.0px;top:364.9px;font-size:46px;line-height:46px;font-weight:700;color:#ffffff;letter-spacing:-1.0px;transform:scaleX(0.9963);transform-origin:0 0;'>Add Account</div>
<div class='tx' style='left:956.0px;top:511.9px;font-size:45px;line-height:45px;font-weight:400;color:#6b7599;letter-spacing:-1.0px;transform:scaleX(0.9985);transform-origin:0 0;'>Search accounts by name, email, phone, address, or notes</div>
<div class='tx' style='left:974.7px;top:633.1px;font-size:45px;line-height:45px;font-weight:700;color:#f3f4f7;letter-spacing:-1.0px;transform:scaleX(0.9732);transform-origin:0 0;'>Columns</div>
<div class='tx' style='left:1283.5px;top:629.9px;font-size:45px;line-height:45px;font-weight:400;color:#eef0f5;letter-spacing:-1.0px;transform:scaleX(0.9937);transform-origin:0 0;'>Name</div>
<div class='tx' style='left:1511.4px;top:629.9px;font-size:45px;line-height:45px;font-weight:400;color:#eef0f5;letter-spacing:-1.0px;transform:scaleX(0.9539);transform-origin:0 0;'>Email</div>
<div class='tx' style='left:1726.5px;top:629.9px;font-size:45px;line-height:45px;font-weight:400;color:#eef0f5;letter-spacing:-1.0px;transform:scaleX(0.98);transform-origin:0 0;'>Phone</div>
<div class='tx' style='left:1962.7px;top:629.9px;font-size:45px;line-height:45px;font-weight:400;color:#eef0f5;letter-spacing:-1.0px;transform:scaleX(0.9592);transform-origin:0 0;'>Address</div>
<div class='tx' style='left:2227.0px;top:629.9px;font-size:45px;line-height:45px;font-weight:400;color:#eef0f5;letter-spacing:-1.0px;transform:scaleX(0.9986);transform-origin:0 0;'>City</div>
<div class='tx' style='left:2413.9px;top:629.9px;font-size:45px;line-height:45px;font-weight:400;color:#eef0f5;letter-spacing:-1.0px;transform:scaleX(0.9619);transform-origin:0 0;'>State</div>
<div class='tx' style='left:2622.7px;top:629.9px;font-size:45px;line-height:45px;font-weight:400;color:#eef0f5;letter-spacing:-0.6px;'>Country</div>
<div class='tx' style='left:2890.1px;top:629.9px;font-size:45px;line-height:45px;font-weight:400;color:#eef0f5;letter-spacing:-1.0px;transform:scaleX(0.9303);transform-origin:0 0;'>Tags</div>
<div class='tx' style='left:1128.5px;top:817.6px;font-size:45px;line-height:45px;font-weight:400;color:#f0f1f6;letter-spacing:-0.07px;-webkit-text-stroke:1.6px currentColor;'>Name</div>
<div class='tx' style='left:1381.0px;top:817.6px;font-size:45px;line-height:45px;font-weight:400;color:#f0f1f6;letter-spacing:-0.68px;-webkit-text-stroke:1.6px currentColor;'>Email</div>
<div class='tx' style='left:1987.7px;top:817.6px;font-size:45px;line-height:45px;font-weight:400;color:#f0f1f6;letter-spacing:-0.43px;-webkit-text-stroke:1.6px currentColor;'>Phone</div>
<div class='tx' style='left:2236.0px;top:817.6px;font-size:45px;line-height:45px;font-weight:400;color:#f0f1f6;letter-spacing:-0.83px;-webkit-text-stroke:1.6px currentColor;'>Coverage</div>
<div class='tx' style='left:2545.0px;top:817.6px;font-size:45px;line-height:45px;font-weight:400;color:#f0f1f6;letter-spacing:-0.33px;-webkit-text-stroke:1.6px currentColor;'>City</div>
<div class='tx' style='left:2757.8px;top:817.6px;font-size:45px;line-height:45px;font-weight:400;color:#f0f1f6;letter-spacing:-1.0px;-webkit-text-stroke:1.6px currentColor;'>State</div>
<div class='tx' style='left:2979.5px;top:817.6px;font-size:45px;line-height:45px;font-weight:400;color:#f0f1f6;letter-spacing:0.53px;-webkit-text-stroke:1.6px currentColor;'>Country</div>
<div class='tx' style='left:3261.9px;top:817.6px;font-size:45px;line-height:45px;font-weight:400;color:#f0f1f6;letter-spacing:-1.0px;transform:scaleX(0.9615);transform-origin:0 0;-webkit-text-stroke:1.6px currentColor;'>Tags</div>
<div class='tx' style='left:1070.8px;top:1053.7px;font-size:45px;line-height:45px;font-weight:400;color:#6e60f4;letter-spacing:-0.36px;'>Alpine</div>
<div class='tx' style='left:1066.8px;top:1111.2px;font-size:45px;line-height:45px;font-weight:400;color:#6e60f4;letter-spacing:-0.62px;'>Ridge</div>
<div class='tx' style='left:1321.3px;top:1084.8px;font-size:45px;line-height:45px;font-weight:400;color:#6e60f4;letter-spacing:0.14px;-webkit-text-stroke:1.1px currentColor;'>hello@alpineridge.example</div>
<div class='tx' style='left:1927.6px;top:1054.6px;font-size:45px;line-height:45px;font-weight:400;color:#d5d9ee;letter-spacing:-0.9px;'>(555)</div>
<div class='tx' style='left:1928.6px;top:1109.9px;font-size:45px;line-height:45px;font-weight:400;color:#d5d9ee;letter-spacing:-0.84px;'>010-1200</div>
<div class='tx' style='left:2483.7px;top:1084.3px;font-size:45px;line-height:45px;font-weight:400;color:#d5d9ee;letter-spacing:-0.23px;'>Boulder</div>
<div class='tx' style='left:2697.7px;top:1084.3px;font-size:45px;line-height:45px;font-weight:400;color:#d5d9ee;letter-spacing:-1.0px;transform:scaleX(0.9081);transform-origin:0 0;'>CO</div>
<div class='tx' style='left:2918.8px;top:1084.3px;font-size:45px;line-height:45px;font-weight:400;color:#d5d9ee;letter-spacing:-1.0px;transform:scaleX(0.9138);transform-origin:0 0;'>USA</div>
<div class='tx' style='left:1067.3px;top:1436.9px;font-size:45px;line-height:45px;font-weight:400;color:#6e60f4;letter-spacing:-0.74px;'>Bluewater</div>
<div class='tx' style='left:1067.3px;top:1493.2px;font-size:45px;line-height:45px;font-weight:400;color:#6e60f4;letter-spacing:-0.71px;'>Logistics</div>
<div class='tx' style='left:1322.7px;top:1466.9px;font-size:45px;line-height:45px;font-weight:400;color:#6e60f4;letter-spacing:-0.26px;-webkit-text-stroke:1.1px currentColor;'>ops@bluewater.example</div>
<div class='tx' style='left:1927.6px;top:1437.3px;font-size:45px;line-height:45px;font-weight:400;color:#d5d9ee;letter-spacing:-0.9px;'>(555)</div>
<div class='tx' style='left:1928.6px;top:1492.2px;font-size:45px;line-height:45px;font-weight:400;color:#d5d9ee;letter-spacing:-0.83px;'>010-2333</div>
<div class='tx' style='left:2486.7px;top:1466.1px;font-size:45px;line-height:45px;font-weight:400;color:#d5d9ee;letter-spacing:-1.0px;transform:scaleX(0.9523);transform-origin:0 0;'>Tampa</div>
<div class='tx' style='left:2697.3px;top:1466.1px;font-size:45px;line-height:45px;font-weight:400;color:#d5d9ee;letter-spacing:-1.0px;transform:scaleX(0.8543);transform-origin:0 0;'>FL</div>
<div class='tx' style='left:2918.8px;top:1466.1px;font-size:45px;line-height:45px;font-weight:400;color:#d5d9ee;letter-spacing:-1.0px;transform:scaleX(0.9138);transform-origin:0 0;'>USA</div>
<div class='tx' style='left:1069.3px;top:1760.7px;font-size:45px;line-height:45px;font-weight:400;color:#6e60f4;letter-spacing:-0.57px;'>Cedar &amp;</div>
<div class='tx' style='left:1069.4px;top:1817.9px;font-size:45px;line-height:45px;font-weight:400;color:#6e60f4;letter-spacing:-1.0px;transform:scaleX(0.9283);transform-origin:0 0;'>Co</div>
<div class='tx' style='left:1323.7px;top:1790.8px;font-size:45px;line-height:45px;font-weight:400;color:#6e60f4;letter-spacing:-0.56px;-webkit-text-stroke:1.1px currentColor;'>team@cedarco.example</div>
<div class='tx' style='left:1927.6px;top:1762.4px;font-size:45px;line-height:45px;font-weight:400;color:#d5d9ee;letter-spacing:-0.9px;'>(555)</div>
<div class='tx' style='left:1928.6px;top:1817.4px;font-size:45px;line-height:45px;font-weight:400;color:#d5d9ee;letter-spacing:-0.84px;'>010-9444</div>
<div class='tx' style='left:2487.7px;top:1790.3px;font-size:45px;line-height:45px;font-weight:400;color:#d5d9ee;letter-spacing:-0.54px;'>Austin</div>
<div class='tx' style='left:2698.4px;top:1790.3px;font-size:45px;line-height:45px;font-weight:400;color:#d5d9ee;letter-spacing:-1.0px;transform:scaleX(0.8759);transform-origin:0 0;'>TX</div>
<div class='tx' style='left:2918.8px;top:1790.3px;font-size:45px;line-height:45px;font-weight:400;color:#d5d9ee;letter-spacing:-1.0px;transform:scaleX(0.9138);transform-origin:0 0;'>USA</div>
<div class='tx' style='left:111.2px;top:719.7px;font-size:37px;line-height:37px;font-weight:400;color:#c9cde6;letter-spacing:4.5px;transform:scaleX(0.8741);transform-origin:0 0;-webkit-text-stroke:0.7px #c9cde6;'>MODULES</div>
<div class='tx' style='left:221.0px;top:871.7px;font-size:45px;line-height:45px;font-weight:400;color:#f0f1f6;letter-spacing:-0.24px;-webkit-text-stroke:1.4px currentColor;'>Overview</div>
<div class='tx' style='left:222.4px;top:1020.3px;font-size:45px;line-height:45px;font-weight:400;color:#6e60f4;letter-spacing:-0.44px;-webkit-text-stroke:1.4px currentColor;'>Accounts</div>
<div class='tx' style='left:282.6px;top:1171.7px;font-size:45px;line-height:45px;font-weight:400;color:#f0f1f6;letter-spacing:-0.55px;'>All Accounts</div>
<div class='tx' style='left:279.5px;top:1276.5px;font-size:45px;line-height:45px;font-weight:400;color:#f0f1f6;letter-spacing:-0.99px;'>Recently Viewed</div>
<div class='tx' style='left:281.6px;top:1384.2px;font-size:45px;line-height:45px;font-weight:400;color:#f0f1f6;letter-spacing:-1.0px;transform:scaleX(0.9598);transform-origin:0 0;'>Saved Views</div>
<div class='tx' style='left:280.0px;top:1491.4px;font-size:45px;line-height:45px;font-weight:400;color:#f0f1f6;letter-spacing:-0.19px;'>Imports / Exports</div>
<div class='tx' style='left:280.0px;top:1595.9px;font-size:45px;line-height:45px;font-weight:400;color:#f0f1f6;letter-spacing:-0.41px;'>Data Quality</div>
<div class='tx' style='left:219.4px;top:1746.6px;font-size:45px;line-height:45px;font-weight:400;color:#f0f1f6;letter-spacing:-0.5px;-webkit-text-stroke:1.4px currentColor;'>Contacts</div>
<div class='tx' style='left:282.9px;top:1895.2px;font-size:45px;line-height:45px;font-weight:400;color:#f0f1f6;letter-spacing:-0.83px;'>All Contacts</div>
<div class='tx' style='left:206.3px;top:487.6px;font-size:41px;line-height:41px;font-weight:700;color:#eceef4;letter-spacing:6.65px;-webkit-text-stroke:2.4px #eceef4;'>METRIC FLOW IQ</div>
</div>
<script>(function(){var w=window.innerWidth;if(w&&Math.abs(w-3520)>2){document.documentElement.style.zoom=(w/3520);}})();</script>
</body></html>
